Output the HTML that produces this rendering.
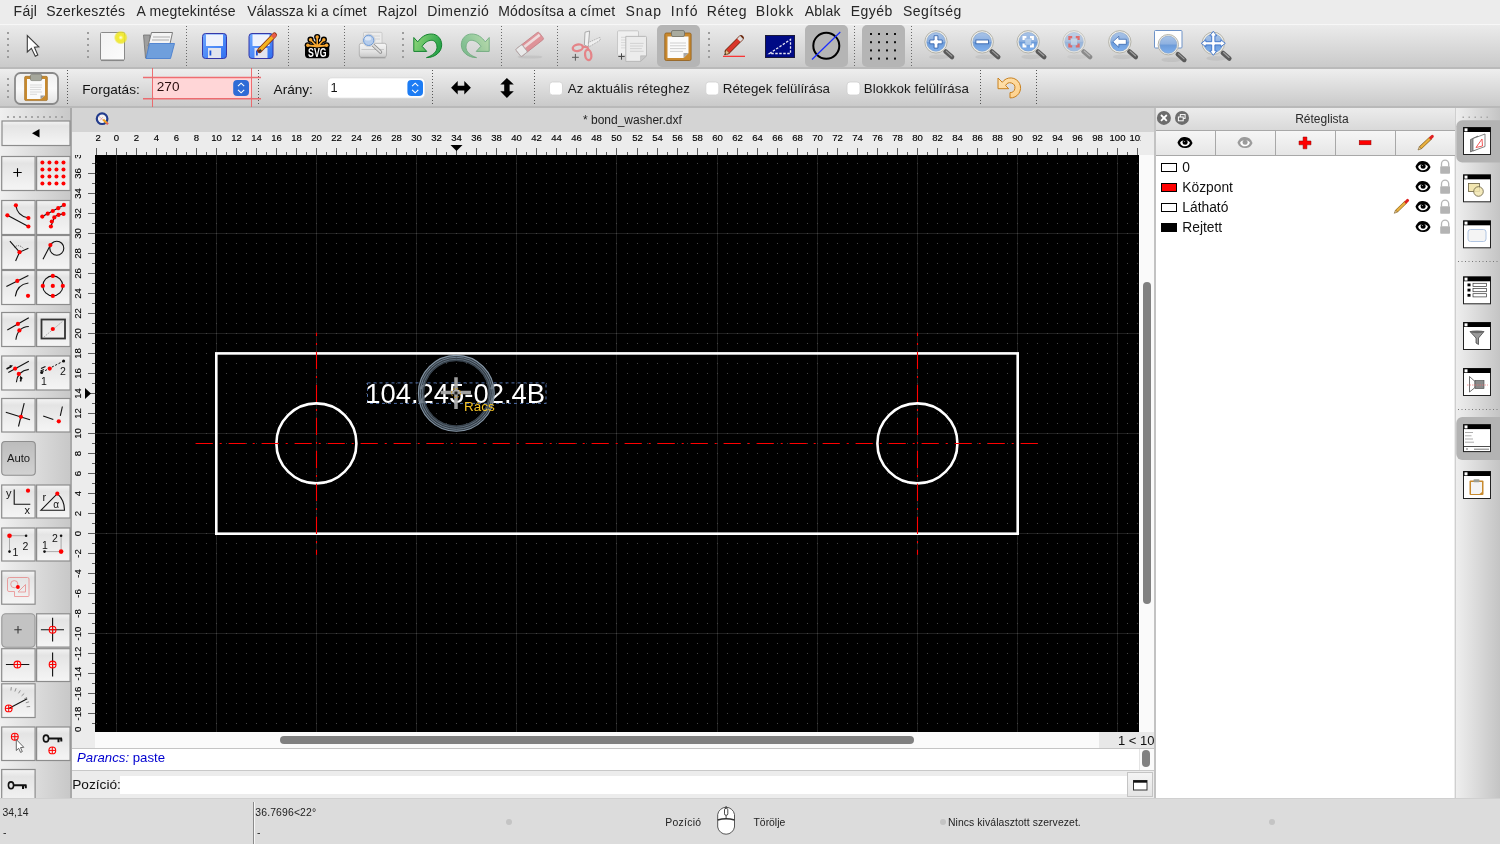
<!DOCTYPE html><html><head><meta charset="utf-8"><style>
*{margin:0;padding:0;box-sizing:border-box}
html,body{width:1500px;height:844px;overflow:hidden;background:#ececec;font-family:"Liberation Sans",sans-serif;color:#1d1d1d}
.a{position:absolute}
.t{position:absolute;white-space:nowrap;line-height:1}
svg{position:absolute;overflow:visible}
</style></head><body><div id="root" style="position:absolute;left:0;top:0;width:1500px;height:844px;overflow:hidden;will-change:transform">
<div class="a" style="left:0;top:0;width:1500px;height:24px;background:#ececec"></div>
<div class="t" style="left:13.6px;top:4px;font-size:14px;color:#262626;letter-spacing:0.267px">Fájl</div>
<div class="t" style="left:46.2px;top:4px;font-size:14px;color:#262626;letter-spacing:0.250px">Szerkesztés</div>
<div class="t" style="left:136.6px;top:4px;font-size:14px;color:#262626;letter-spacing:0.254px">A megtekintése</div>
<div class="t" style="left:247.2px;top:4px;font-size:14px;color:#262626;letter-spacing:-0.067px">Válassza ki a címet</div>
<div class="t" style="left:377.6px;top:4px;font-size:14px;color:#262626;letter-spacing:0.100px">Rajzol</div>
<div class="t" style="left:427.2px;top:4px;font-size:14px;color:#262626;letter-spacing:0.457px">Dimenzió</div>
<div class="t" style="left:498.2px;top:4px;font-size:14px;color:#262626;letter-spacing:0.156px">Módosítsa a címet</div>
<div class="t" style="left:625.6px;top:4px;font-size:14px;color:#262626;letter-spacing:0.900px">Snap</div>
<div class="t" style="left:670.8px;top:4px;font-size:14px;color:#262626;letter-spacing:1.100px">Infó</div>
<div class="t" style="left:706.8px;top:4px;font-size:14px;color:#262626;letter-spacing:0.575px">Réteg</div>
<div class="t" style="left:755.8px;top:4px;font-size:14px;color:#262626;letter-spacing:0.825px">Blokk</div>
<div class="t" style="left:804.8px;top:4px;font-size:14px;color:#262626;letter-spacing:0.150px">Ablak</div>
<div class="t" style="left:850.8px;top:4px;font-size:14px;color:#262626;letter-spacing:0.475px">Egyéb</div>
<div class="t" style="left:903.0px;top:4px;font-size:14px;color:#262626;letter-spacing:0.429px">Segítség</div>
<div class="a" style="left:0;top:24px;width:1500px;height:45px;background:linear-gradient(#f7f7f7 0px,#f7f7f7 1px,#ebebeb 1px,#cacaca 43px,#bababa 43px,#bababa 45px)"></div>
<svg width="1500" height="44" viewBox="0 24 1500 44" style="left:0;top:24px"><defs>
<linearGradient id="glass" x1="0" y1="0" x2="0" y2="1"><stop offset="0" stop-color="#a9c4e8"/><stop offset="0.48" stop-color="#8db0e0"/><stop offset="0.5" stop-color="#6b9ad8"/><stop offset="1" stop-color="#7fb0ee"/></linearGradient>
<linearGradient id="floppy" x1="0" y1="0" x2="1" y2="1"><stop offset="0" stop-color="#6fa8ff"/><stop offset="1" stop-color="#2f6ff0"/></linearGradient>
<radialGradient id="glow"><stop offset="0" stop-color="#fffff0"/><stop offset="0.35" stop-color="#f4ec30"/><stop offset="0.75" stop-color="#ece41c" stop-opacity="0.8"/><stop offset="1" stop-color="#ece41c" stop-opacity="0"/></radialGradient>
<linearGradient id="page" x1="0" y1="0" x2="1" y2="1"><stop offset="0" stop-color="#f2f2f2"/><stop offset="1" stop-color="#fcfcfc"/></linearGradient>
</defs><rect x="7" y="32" width="2" height="2" fill="#9c9c9c"/><rect x="7" y="38" width="2" height="2" fill="#9c9c9c"/><rect x="7" y="44" width="2" height="2" fill="#9c9c9c"/><rect x="7" y="50" width="2" height="2" fill="#9c9c9c"/><rect x="7" y="56" width="2" height="2" fill="#9c9c9c"/><rect x="87" y="32" width="2" height="2" fill="#9c9c9c"/><rect x="87" y="38" width="2" height="2" fill="#9c9c9c"/><rect x="87" y="44" width="2" height="2" fill="#9c9c9c"/><rect x="87" y="50" width="2" height="2" fill="#9c9c9c"/><rect x="87" y="56" width="2" height="2" fill="#9c9c9c"/><rect x="402" y="32" width="2" height="2" fill="#9c9c9c"/><rect x="402" y="38" width="2" height="2" fill="#9c9c9c"/><rect x="402" y="44" width="2" height="2" fill="#9c9c9c"/><rect x="402" y="50" width="2" height="2" fill="#9c9c9c"/><rect x="402" y="56" width="2" height="2" fill="#9c9c9c"/><rect x="708" y="32" width="2" height="2" fill="#9c9c9c"/><rect x="708" y="38" width="2" height="2" fill="#9c9c9c"/><rect x="708" y="44" width="2" height="2" fill="#9c9c9c"/><rect x="708" y="50" width="2" height="2" fill="#9c9c9c"/><rect x="708" y="56" width="2" height="2" fill="#9c9c9c"/><path d="M186.5 26V67" stroke="#6a6a6a" stroke-width="1" stroke-dasharray="1 2"/><path d="M288.5 26V67" stroke="#6a6a6a" stroke-width="1" stroke-dasharray="1 2"/><path d="M344.5 26V67" stroke="#6a6a6a" stroke-width="1" stroke-dasharray="1 2"/><path d="M501.5 26V67" stroke="#6a6a6a" stroke-width="1" stroke-dasharray="1 2"/><path d="M557.5 26V67" stroke="#6a6a6a" stroke-width="1" stroke-dasharray="1 2"/><path d="M854.5 26V67" stroke="#6a6a6a" stroke-width="1" stroke-dasharray="1 2"/><path d="M911.5 26V67" stroke="#6a6a6a" stroke-width="1" stroke-dasharray="1 2"/><path d="M27.3 35.5V52L31.4 48.3L35.3 56.2L37.8 55L34.4 47.2L38.8 46.8Z" fill="#fff" stroke="#3c3c3c" stroke-width="1.1" stroke-linejoin="miter"/><rect x="100.5" y="32.5" width="24" height="27.5" rx="1" fill="url(#page)" stroke="#8a8a8a" stroke-width="1"/><path d="M101 60.5H124" stroke="#7a7a7a" stroke-width="1.2" opacity="0.7"/><circle cx="120.8" cy="37.6" r="7" fill="url(#glow)"/><path d="M143.5 35H150L151 58H145.5Z" fill="#9e9e9e" stroke="#707070" stroke-width="0.8"/><path d="M151.5 32.5H172.5L169.5 46H148Z" fill="#f4f4f4" stroke="#6f6f6f" stroke-width="0.9"/><path d="M153 37H170M152 40H169" stroke="#c4c4c4" stroke-width="1.6"/><path d="M149.5 43.5H174.5L170.5 58.5H146Z" fill="#6f9fdc" stroke="#4a7fcf" stroke-width="0.9"/><rect x="202.5" y="33.5" width="24" height="25" rx="3" fill="url(#floppy)" stroke="#3437a8" stroke-width="1"/><rect x="206" y="34.5" width="17" height="11.5" fill="#eef2fc"/><rect x="208" y="48" width="13" height="10" fill="#e2e4ee"/><rect x="209.5" y="50.5" width="1.8" height="5" fill="#1e54d8"/><rect x="249.0" y="33.5" width="24" height="25" rx="3" fill="url(#floppy)" stroke="#3437a8" stroke-width="1"/><rect x="252.5" y="34.5" width="17" height="11.5" fill="#eef2fc"/><rect x="254.5" y="48" width="13" height="10" fill="#e2e4ee"/><rect x="256.0" y="50.5" width="1.8" height="5" fill="#1e54d8"/><path d="M259.5 50.5L274.5 35" stroke="#8a2f10" stroke-width="5" stroke-linecap="round"/><path d="M259.5 50.5L274.5 35" stroke="#f4b31e" stroke-width="3.3" stroke-linecap="butt"/><path d="M272.3 37.2L275.6 33.9" stroke="#e85b4b" stroke-width="3.6"/><path d="M258 52.5L260 48.8L262.2 51Z" fill="#333"/><path d="M317.2 46.6L307.79 45.28M317.2 46.6L310.53 39.69M317.2 46.6L317.20 37.00M317.2 46.6L323.87 39.69M317.2 46.6L326.61 45.28" stroke="#000" stroke-width="3.6" stroke-linecap="round"/><circle cx="307.79" cy="45.28" r="3.1" fill="#000"/><circle cx="310.53" cy="39.69" r="3.1" fill="#000"/><circle cx="317.20" cy="37.00" r="3.1" fill="#000"/><circle cx="323.87" cy="39.69" r="3.1" fill="#000"/><circle cx="326.61" cy="45.28" r="3.1" fill="#000"/><rect x="305" y="43.6" width="24.2" height="14.6" rx="3.6" fill="#000"/><path d="M317.2 46.6L307.79 45.28M317.2 46.6L310.53 39.69M317.2 46.6L317.20 37.00M317.2 46.6L323.87 39.69M317.2 46.6L326.61 45.28" stroke="#f7a733" stroke-width="1.6"/><circle cx="307.79" cy="45.28" r="1.7" fill="#f7a733"/><circle cx="310.53" cy="39.69" r="1.7" fill="#f7a733"/><circle cx="317.20" cy="37.00" r="1.7" fill="#f7a733"/><circle cx="323.87" cy="39.69" r="1.7" fill="#f7a733"/><circle cx="326.61" cy="45.28" r="1.7" fill="#f7a733"/><path d="M307.3 45.6H327.2" stroke="#f7a733" stroke-width="1.5"/><text x="317.3" y="57" font-family="Liberation Sans" font-weight="bold" font-size="12.4" fill="#fff" text-anchor="middle" textLength="18.4" lengthAdjust="spacingAndGlyphs">SVG</text><defs><linearGradient id="prn" x1="0" y1="0" x2="0" y2="1"><stop offset="0" stop-color="#f6f6f6"/><stop offset="0.6" stop-color="#e2e2e2"/><stop offset="1" stop-color="#c8c8c8"/></linearGradient></defs><rect x="363.5" y="32.3" width="18.5" height="15" rx="1" fill="#ececec" stroke="#c4c4c4" stroke-width="0.8"/><path d="M366 36H380M366 39H380" stroke="#d4d4d4" stroke-width="1.2"/><rect x="359.3" y="43.3" width="27.2" height="14" rx="2.2" fill="url(#prn)" stroke="#a8a8a8" stroke-width="0.8"/><path d="M360.5 57.8H385.5" stroke="#888" stroke-width="1.3" opacity="0.55"/><path d="M361.5 49.5H384" stroke="#c0c0c0" stroke-width="0.8"/><path d="M373 45L380.5 52" stroke="#8a8a8a" stroke-width="3.4" stroke-linecap="round"/><path d="M373 45L380.5 52" stroke="#dcdcdc" stroke-width="1.8" stroke-linecap="round"/><circle cx="368.7" cy="40.3" r="6.3" fill="#f0f0f0" stroke="#c8c8c8" stroke-width="0.7"/><circle cx="368.7" cy="40.3" r="5.2" fill="#b6cdec" stroke="#5f8fd0" stroke-width="0.9"/><ellipse cx="368" cy="38.6" rx="3.2" ry="2" fill="#e6eef9" opacity="0.8"/><defs><linearGradient id="undog" x1="0" y1="0" x2="1" y2="0.3"><stop offset="0" stop-color="#94d87c"/><stop offset="1" stop-color="#2aa44a"/></linearGradient></defs><g transform="" opacity="1"><path d="M413.8 37.5L417.7 41.9C421 37.5 425 34 431.4 34C437.5 34 441.7 39 441.7 44.9C441.7 52 435 57.6 426.5 57.6C433 55.5 437 51.5 437 47.4C437 43 434.5 40.3 431.8 40.3C427.5 40.3 424.5 43 422.1 46.3L426.75 51.4H413.8Z" fill="url(#undog)" stroke="#14822f" stroke-width="1" stroke-linejoin="round"/></g><g transform="translate(903 0) scale(-1 1)" opacity="0.5"><path d="M413.8 37.5L417.7 41.9C421 37.5 425 34 431.4 34C437.5 34 441.7 39 441.7 44.9C441.7 52 435 57.6 426.5 57.6C433 55.5 437 51.5 437 47.4C437 43 434.5 40.3 431.8 40.3C427.5 40.3 424.5 43 422.1 46.3L426.75 51.4H413.8Z" fill="url(#undog)" stroke="#14822f" stroke-width="1" stroke-linejoin="round"/></g><g opacity="0.62"><ellipse cx="530" cy="57" rx="12.5" ry="1.6" fill="#aaa" opacity="0.55"/><g transform="translate(529.8 44.2) rotate(-38)"><rect x="-14.5" y="-4.6" width="29" height="9.2" rx="1.6" fill="#e0666f" stroke="#b24a52" stroke-width="0.8"/><rect x="-6" y="-2.6" width="19.5" height="2.6" fill="#fff" opacity="0.75"/><rect x="-14.5" y="-4.6" width="8" height="9.2" rx="1.2" fill="#f6f6f6" stroke="#8a8a8a" stroke-width="0.8"/></g></g><path d="M585 32.2L589.6 31L588.2 46.9L584.4 45Z" fill="#f2f2f2" stroke="#9a9a9a" stroke-width="0.8"/><path d="M588.3 42.6L599.8 37.4L600.3 40.2L588.8 47Z" fill="#efefef" stroke="#a0a0a0" stroke-width="0.8" stroke-dasharray="1.2 0.8"/><path d="M582.5 46.5L587.5 47.5L588.5 50" stroke="#e48488" stroke-width="2.2" fill="none"/><ellipse cx="577.8" cy="47.8" rx="5.1" ry="3.2" fill="none" stroke="#e48488" stroke-width="2.3" transform="rotate(-12 577.8 47.8)"/><ellipse cx="588.2" cy="54.9" rx="3.1" ry="5.2" fill="none" stroke="#e48488" stroke-width="2.3" transform="rotate(-8 588.2 54.9)"/><path d="M572 57.3h6.8M575.4 53.9v6.8" stroke="#5a5a5a" stroke-width="1"/><rect x="617.5" y="30.8" width="21" height="24.5" rx="1" fill="#f0f0f0" stroke="#c4c4c4" stroke-width="0.9"/><path d="M621 37.3H626M621 40H626M621 42.6H626M621 45.2H626M621 47.9H626" stroke="#d8d8d8" stroke-width="1"/><path d="M625.8 36.4H645.6Q646.5 36.4 646.5 37.3V55.8L640.6 61.4H625.8Z" fill="#ececec" stroke="#b4b4b4" stroke-width="0.9"/><path d="M640.6 61.4L646.5 55.8H640.6Z" fill="#c8c8c8" stroke="#b0b0b0" stroke-width="0.6"/><path d="M630 43.4H643.6M630 46H643M630 48.6H641.8M630 51.3H643.6" stroke="#cfcfcf" stroke-width="0.9"/><path d="M618.3 56.5h6.4M621.5 53.3v6.4" stroke="#4a4a4a" stroke-width="1"/><rect x="657" y="25" width="43" height="42" rx="5" fill="#b5b5b5"/><rect x="664.8" y="33" width="26.3" height="27.5" rx="1.5" fill="#c9892f" stroke="#8f5d1a" stroke-width="0.8"/><path d="M667.5 36.5H688.5V53L683.5 58H667.5Z" fill="#fbfbfb"/><path d="M683.5 58L688.5 53H683.5Z" fill="#a8a8a8"/><path d="M670 43H686M670 45.8H686M670 48.6H686M670 51.4H683" stroke="#c9c9c9" stroke-width="0.9"/><rect x="671.5" y="30.5" width="13" height="6" rx="1.5" fill="#a9ab9f" stroke="#6f7068" stroke-width="0.8"/><path d="M723 56.3H745" stroke="#ff1a1a" stroke-width="1.1"/><path d="M727.5 51.5L741 38" stroke="#6b2a10" stroke-width="5.6" stroke-linecap="round"/><path d="M727.5 51.5L741 38" stroke="#d9362a" stroke-width="4.2"/><path d="M738.8 40.2L741.6 37.4" stroke="#ddd" stroke-width="4.4"/><path d="M724.5 55L726.2 49.8L729.6 53.2Z" fill="#e8c08a" stroke="#6b3a10" stroke-width="0.6"/><path d="M724.5 55L725.2 53L726.4 54.2Z" fill="#222"/><rect x="765.5" y="35.5" width="29" height="22" fill="#000a85" stroke="#1a1a3a" stroke-width="1"/><path d="M769.5 53.5L790.5 39.5V53.5Z" fill="none" stroke="#e8e8f4" stroke-width="1.3" stroke-dasharray="2.5 1.5"/><rect x="805" y="25" width="43" height="42" rx="5" fill="#b5b5b5"/><circle cx="826.3" cy="45.8" r="13" fill="none" stroke="#000" stroke-width="2"/><path d="M812 59.5L840.3 32" stroke="#1a2cff" stroke-width="1.2"/><rect x="862" y="25" width="43" height="42" rx="5" fill="#b5b5b5"/><rect x="870" y="33.0" width="2" height="2" fill="#111"/><rect x="878" y="33.0" width="2" height="2" fill="#111"/><rect x="886" y="33.0" width="2" height="2" fill="#111"/><rect x="894" y="33.0" width="2" height="2" fill="#111"/><rect x="870" y="41.2" width="2" height="2" fill="#111"/><rect x="878" y="41.2" width="2" height="2" fill="#111"/><rect x="886" y="41.2" width="2" height="2" fill="#111"/><rect x="894" y="41.2" width="2" height="2" fill="#111"/><rect x="870" y="49.4" width="2" height="2" fill="#111"/><rect x="878" y="49.4" width="2" height="2" fill="#111"/><rect x="886" y="49.4" width="2" height="2" fill="#111"/><rect x="894" y="49.4" width="2" height="2" fill="#111"/><rect x="870" y="57.6" width="2" height="2" fill="#111"/><rect x="878" y="57.6" width="2" height="2" fill="#111"/><rect x="886" y="57.6" width="2" height="2" fill="#111"/><rect x="894" y="57.6" width="2" height="2" fill="#111"/><g><ellipse cx="939" cy="56.9" rx="10" ry="2.4" fill="#000" opacity="0.06"/><path d="M945.6 51.5L952 57.099999999999994" stroke="#5a5a5a" stroke-width="4.6" stroke-linecap="round"/><path d="M946.2 51.099999999999994L951.8 56.099999999999994" stroke="#a0a0a0" stroke-width="1.1" stroke-linecap="round"/><circle cx="936" cy="41.9" r="11.2" fill="#efeee8" stroke="#b4b3aa" stroke-width="1"/><circle cx="936" cy="41.9" r="9.3" fill="url(#glass)" stroke="#7d9ec8" stroke-width="0.6"/><path d="M929.8 40.0H934.1V35.699999999999996H937.9V40.0H942.2V43.8H937.9V48.1H934.1V43.8H929.8Z" fill="#fff" stroke="#2a5ca8" stroke-width="0.8"/></g><g><ellipse cx="985.2" cy="56.9" rx="10" ry="2.4" fill="#000" opacity="0.06"/><path d="M991.8000000000001 51.5L998.2 57.099999999999994" stroke="#5a5a5a" stroke-width="4.6" stroke-linecap="round"/><path d="M992.4000000000001 51.099999999999994L998.0 56.099999999999994" stroke="#a0a0a0" stroke-width="1.1" stroke-linecap="round"/><circle cx="982.2" cy="41.9" r="11.2" fill="#efeee8" stroke="#b4b3aa" stroke-width="1"/><circle cx="982.2" cy="41.9" r="9.3" fill="url(#glass)" stroke="#7d9ec8" stroke-width="0.6"/><rect x="975.9000000000001" y="40.0" width="12.6" height="3.8" fill="#fff" stroke="#2a5ca8" stroke-width="0.8"/></g><g><ellipse cx="1031.2" cy="56.8" rx="10" ry="2.4" fill="#000" opacity="0.06"/><path d="M1037.8 51.4L1044.2 57.0" stroke="#5a5a5a" stroke-width="4.6" stroke-linecap="round"/><path d="M1038.4 51.0L1044.0 56.0" stroke="#a0a0a0" stroke-width="1.1" stroke-linecap="round"/><circle cx="1028.2" cy="41.8" r="11.2" fill="#efeee8" stroke="#b4b3aa" stroke-width="1"/><circle cx="1028.2" cy="41.8" r="9.3" fill="url(#glass)" stroke="#7d9ec8" stroke-width="0.6"/><rect x="1025.2" y="38.8" width="6" height="6" fill="#bcd3ee" opacity="0.8"/><path d="M1023.6 40.0V37.199999999999996H1026.4M1023.6 43.599999999999994V46.4H1026.4M1032.8 40.0V37.199999999999996H1030.0M1032.8 43.599999999999994V46.4H1030.0" fill="none" stroke="#fff" stroke-width="2.2"/></g><g opacity="0.6"><g><ellipse cx="1077" cy="56.8" rx="10" ry="2.4" fill="#000" opacity="0.06"/><path d="M1083.6 51.4L1090 57.0" stroke="#5a5a5a" stroke-width="4.6" stroke-linecap="round"/><path d="M1084.2 51.0L1089.8 56.0" stroke="#a0a0a0" stroke-width="1.1" stroke-linecap="round"/><circle cx="1074" cy="41.8" r="11.2" fill="#efeee8" stroke="#b4b3aa" stroke-width="1"/><circle cx="1074" cy="41.8" r="9.3" fill="url(#glass)" stroke="#7d9ec8" stroke-width="0.6"/><rect x="1071" y="38.8" width="6" height="6" fill="#bcd3ee" opacity="0.8"/><path d="M1069.4 40.0V37.199999999999996H1072.2M1069.4 43.599999999999994V46.4H1072.2M1078.6 40.0V37.199999999999996H1075.8M1078.6 43.599999999999994V46.4H1075.8" fill="none" stroke="#e02020" stroke-width="2.2"/></g></g><g><ellipse cx="1122.8" cy="56.8" rx="10" ry="2.4" fill="#000" opacity="0.06"/><path d="M1129.3999999999999 51.4L1135.8 57.0" stroke="#5a5a5a" stroke-width="4.6" stroke-linecap="round"/><path d="M1130.0 51.0L1135.6 56.0" stroke="#a0a0a0" stroke-width="1.1" stroke-linecap="round"/><circle cx="1119.8" cy="41.8" r="11.2" fill="#efeee8" stroke="#b4b3aa" stroke-width="1"/><circle cx="1119.8" cy="41.8" r="9.3" fill="url(#glass)" stroke="#7d9ec8" stroke-width="0.6"/><path d="M1112.8 41.8L1118.8 36.3V39.3H1126.3V44.3H1118.8V47.3Z" fill="#fff" stroke="#2a5ca8" stroke-width="0.7"/></g><rect x="1154.5" y="30.5" width="27.5" height="17.5" rx="1" fill="#fff" stroke="#6e93c8" stroke-width="1"/><g><ellipse cx="1171.3" cy="59.7" rx="10" ry="2.4" fill="#000" opacity="0.06"/><path d="M1177.8999999999999 54.300000000000004L1184.3 59.900000000000006" stroke="#5a5a5a" stroke-width="4.6" stroke-linecap="round"/><path d="M1178.5 53.900000000000006L1184.1 58.900000000000006" stroke="#a0a0a0" stroke-width="1.1" stroke-linecap="round"/><circle cx="1168.3" cy="44.7" r="10.2" fill="#efeee8" stroke="#b4b3aa" stroke-width="1"/><circle cx="1168.3" cy="44.7" r="8.6" fill="url(#glass)" stroke="#7d9ec8" stroke-width="0.6"/></g><g><ellipse cx="1216.3" cy="58.3" rx="10" ry="2.4" fill="#000" opacity="0.06"/><path d="M1222.8999999999999 52.9L1229.3 58.5" stroke="#5a5a5a" stroke-width="4.6" stroke-linecap="round"/><path d="M1223.5 52.5L1229.1 57.5" stroke="#a0a0a0" stroke-width="1.1" stroke-linecap="round"/><circle cx="1213.3" cy="43.3" r="11.2" fill="#efeee8" stroke="#b4b3aa" stroke-width="1"/><circle cx="1213.3" cy="43.3" r="9.3" fill="url(#glass)" stroke="#7d9ec8" stroke-width="0.6"/><path d="M1213.3 31.299999999999997L1216.8 35.8H1214.8999999999999V41.699999999999996H1220.8V39.8L1225.3 43.3L1220.8 46.8V44.9H1214.8999999999999V50.8H1216.8L1213.3 55.3L1209.8 50.8H1211.7V44.9H1205.8V46.8L1201.3 43.3L1205.8 39.8V41.699999999999996H1211.7V35.8H1209.8Z" fill="#fff" stroke="#3a70c8" stroke-width="0.9"/></g></svg>
<div class="a" style="left:0;top:69px;width:1500px;height:39px;background:linear-gradient(#eeeeee 0px,#cacaca 37px,#b9b9b9 37px,#b9b9b9 39px)"></div>
<svg width="1500" height="39" viewBox="0 68 1500 39" style="left:0;top:68px"><defs><linearGradient id="pbtn" x1="0" y1="0" x2="0" y2="1"><stop offset="0" stop-color="#f0f0f0"/><stop offset="0.5" stop-color="#fafafa"/><stop offset="1" stop-color="#e2e2e2"/></linearGradient>
<linearGradient id="orng" x1="0" y1="0" x2="1" y2="1"><stop offset="0" stop-color="#ffe2ae"/><stop offset="1" stop-color="#fdd08a"/></linearGradient></defs><rect x="7" y="78" width="2" height="2" fill="#9c9c9c"/><rect x="7" y="84" width="2" height="2" fill="#9c9c9c"/><rect x="7" y="90" width="2" height="2" fill="#9c9c9c"/><rect x="7" y="96" width="2" height="2" fill="#9c9c9c"/><path d="M67.5 70V106" stroke="#555" stroke-width="1" stroke-dasharray="1 2"/><path d="M258.5 70V106" stroke="#555" stroke-width="1" stroke-dasharray="1 2"/><path d="M432.5 70V106" stroke="#555" stroke-width="1" stroke-dasharray="1 2"/><path d="M534.5 70V106" stroke="#555" stroke-width="1" stroke-dasharray="1 2"/><path d="M980.5 70V106" stroke="#555" stroke-width="1" stroke-dasharray="1 2"/><path d="M1036.5 70V106" stroke="#555" stroke-width="1" stroke-dasharray="1 2"/><rect x="15" y="73" width="43" height="31" rx="5.5" fill="url(#pbtn)" stroke="#8a8a8a" stroke-width="1.8"/><rect x="24.6" y="76.3" width="22.8" height="24.3" rx="1.3" fill="#c88a2e" stroke="#9a6418" stroke-width="0.6"/><path d="M27 79H45V95.5L40.5 99H27Z" fill="#fafafa"/><path d="M40.5 99L45 95.5H40.5Z" fill="#9a9a9a"/><path d="M30 85H42M30 87.3H42M30 89.6H41M30 92H42M30 94.3H37" stroke="#cfcfcf" stroke-width="0.8"/><rect x="30.3" y="74.3" width="11.5" height="6.3" rx="1.6" fill="#a5a79c" stroke="#6e7066" stroke-width="0.6"/><text x="82.3" y="93.6" font-family="Liberation Sans" font-size="13.6" fill="#111">Forgatás:</text><rect x="152.5" y="77.5" width="99" height="21" rx="4.5" fill="#ffd6d7"/><g stroke="#ef5a5e" stroke-width="1" opacity="0.85"><path d="M152.5 68V107M251.5 68V107"/><path d="M143 77.5H261M143 98.8H261" stroke-width="1.4"/></g><text x="156.8" y="91.4" font-family="Liberation Sans" font-size="13.6" fill="#2a0e0e">270</text><rect x="233.2" y="80" width="15.8" height="16" rx="4" fill="#2f6bd6"/><path d="M238 86.2L241.1 83.2L244.2 86.2M238 89.8L241.1 92.8L244.2 89.8" fill="none" stroke="#fff" stroke-width="1.1"/><text x="273.6" y="93.6" font-family="Liberation Sans" font-size="13.6" fill="#111">Arány:</text><rect x="327.5" y="77.8" width="97.5" height="20.4" rx="4.5" fill="#fff" stroke="#d6d6d6" stroke-width="0.8"/><text x="330.5" y="91.5" font-family="Liberation Sans" font-size="12.8" fill="#111">1</text><rect x="407.4" y="80" width="15.6" height="16" rx="4" fill="#1c7cf4"/><path d="M412.1 86.2L415.2 83.2L418.3 86.2M412.1 89.8L415.2 92.8L418.3 89.8" fill="none" stroke="#fff" stroke-width="1.1"/><path d="M451.1 87.8L457.7 81.1V85.7H464.3V81.1L470.9 87.8L464.3 94.6V90.4H457.7V94.6Z" fill="#000"/><path d="M506.9 78.1L513.8 84.4H509.6V91.3H513.8L506.9 97.9L500.3 91.3H504.2V84.4H500.3Z" fill="#000"/><rect x="549.5" y="82" width="13" height="13" rx="3" fill="#fff" stroke="#cfcfcf" stroke-width="0.8"/><text x="567.8" y="93.2" font-family="Liberation Sans" font-size="13.3" fill="#1a1a1a" letter-spacing="0.12">Az aktuális réteghez</text><rect x="705.8" y="82" width="13" height="13" rx="3" fill="#fff" stroke="#cfcfcf" stroke-width="0.8"/><text x="722.8" y="93.2" font-family="Liberation Sans" font-size="13.3" fill="#1a1a1a" letter-spacing="0">Rétegek felülírása</text><rect x="847.0" y="82" width="13" height="13" rx="3" fill="#fff" stroke="#cfcfcf" stroke-width="0.8"/><text x="863.8" y="93.2" font-family="Liberation Sans" font-size="13.3" fill="#1a1a1a" letter-spacing="0.05">Blokkok felülírása</text><path d="M998 78L1002.3 82.3A10 10 0 1 1 1010 97.9V92.6A4.9 4.9 0 1 0 1005.6 85.6L1008.7 88.7H998Z" fill="url(#orng)" stroke="#c8801e" stroke-width="1"/></svg>
<div class="a" style="left:0;top:108px;width:72px;height:690px;background:linear-gradient(90deg,#f0f0f0,#c8c8c8 70px,#a9a9a9 70px,#a9a9a9)"></div>
<svg width="72" height="690" viewBox="0 108 72 690" style="left:0;top:108px;overflow:hidden"><defs><linearGradient id="btng" x1="0" y1="0" x2="0" y2="1"><stop offset="0" stop-color="#f4f4f4"/><stop offset="0.2" stop-color="#e4e4e4"/><stop offset="1" stop-color="#f5f5f5"/></linearGradient></defs><rect x="7" y="116" width="2" height="2" fill="#a6a6a6"/><rect x="13" y="116" width="2" height="2" fill="#a6a6a6"/><rect x="19" y="116" width="2" height="2" fill="#a6a6a6"/><rect x="25" y="116" width="2" height="2" fill="#a6a6a6"/><rect x="31" y="116" width="2" height="2" fill="#a6a6a6"/><rect x="37" y="116" width="2" height="2" fill="#a6a6a6"/><rect x="43" y="116" width="2" height="2" fill="#a6a6a6"/><rect x="49" y="116" width="2" height="2" fill="#a6a6a6"/><rect x="55" y="116" width="2" height="2" fill="#a6a6a6"/><rect x="61" y="116" width="2" height="2" fill="#a6a6a6"/><rect x="2.0" y="121.0" width="68.0" height="24.5" fill="url(#btng)" stroke="#8c8c8c" stroke-width="1.2"/><path d="M32 133.2L39.5 129V137.4Z" fill="#000"/><rect x="1.7" y="156.5" width="33.4" height="34" fill="url(#btng)" stroke="#8c8c8c" stroke-width="1.2"/><rect x="36.6" y="156.5" width="33.49999999999999" height="34" fill="url(#btng)" stroke="#8c8c8c" stroke-width="1.2"/><path d="M13.3 172.5H21.7M17.5 168.3V176.7" stroke="#000" stroke-width="1.1"/><circle cx="42.4" cy="162.4" r="2.0" fill="#ff0000"/><circle cx="49.43" cy="162.4" r="2.0" fill="#ff0000"/><circle cx="56.46" cy="162.4" r="2.0" fill="#ff0000"/><circle cx="63.489999999999995" cy="162.4" r="2.0" fill="#ff0000"/><circle cx="42.4" cy="169.43" r="2.0" fill="#ff0000"/><circle cx="49.43" cy="169.43" r="2.0" fill="#ff0000"/><circle cx="56.46" cy="169.43" r="2.0" fill="#ff0000"/><circle cx="63.489999999999995" cy="169.43" r="2.0" fill="#ff0000"/><circle cx="42.4" cy="176.46" r="2.0" fill="#ff0000"/><circle cx="49.43" cy="176.46" r="2.0" fill="#ff0000"/><circle cx="56.46" cy="176.46" r="2.0" fill="#ff0000"/><circle cx="63.489999999999995" cy="176.46" r="2.0" fill="#ff0000"/><circle cx="42.4" cy="183.49" r="2.0" fill="#ff0000"/><circle cx="49.43" cy="183.49" r="2.0" fill="#ff0000"/><circle cx="56.46" cy="183.49" r="2.0" fill="#ff0000"/><circle cx="63.489999999999995" cy="183.49" r="2.0" fill="#ff0000"/><rect x="1.7" y="200.5" width="33.4" height="34" fill="url(#btng)" stroke="#8c8c8c" stroke-width="1.2"/><rect x="36.6" y="200.5" width="33.49999999999999" height="34" fill="url(#btng)" stroke="#8c8c8c" stroke-width="1.2"/><rect x="1.7" y="235.5" width="33.4" height="34" fill="url(#btng)" stroke="#8c8c8c" stroke-width="1.2"/><rect x="36.6" y="235.5" width="33.49999999999999" height="34" fill="url(#btng)" stroke="#8c8c8c" stroke-width="1.2"/><rect x="1.7" y="270.5" width="33.4" height="34" fill="url(#btng)" stroke="#8c8c8c" stroke-width="1.2"/><rect x="36.6" y="270.5" width="33.49999999999999" height="34" fill="url(#btng)" stroke="#8c8c8c" stroke-width="1.2"/><g stroke="#111" stroke-width="1.1" fill="none"><path d="M15.9 205.3Q17 216 28.4 218"/><path d="M7.4 215.3L28.4 226.5"/><path d="M42.3 216.6L63.9 204.9"/><path d="M50.9 226.5L54.3 217.4Q57 214.5 63.5 213.9"/><path d="M9.9 241.1L19.5 252.2L28.4 248.2M19.5 252.2L15.6 261"/><path d="M14.5 247.3Q18.5 243.5 23.5 248.5" stroke-width="0.6" stroke-dasharray="1 1"/><circle cx="56.8" cy="248.2" r="7"/><path d="M43 259.3L50.4 245.1"/><path d="M6.4 286.6L28.4 275.5"/><path d="M15.3 296.3Q17 284.5 28.4 283"/><circle cx="52.8" cy="285.9" r="10"/></g><circle cx="15.9" cy="205.3" r="2.1" fill="#ff0000"/><circle cx="28.4" cy="218" r="2.1" fill="#ff0000"/><circle cx="7.4" cy="215.3" r="2.1" fill="#ff0000"/><circle cx="28.4" cy="226.5" r="2.1" fill="#ff0000"/><circle cx="42.3" cy="216.6" r="2.1" fill="#ff0000"/><circle cx="47.7" cy="213.7" r="2.1" fill="#ff0000"/><circle cx="52.8" cy="211" r="2.1" fill="#ff0000"/><circle cx="58.2" cy="208.2" r="2.1" fill="#ff0000"/><circle cx="63.9" cy="204.9" r="2.1" fill="#ff0000"/><circle cx="50.9" cy="226.5" r="2.1" fill="#ff0000"/><circle cx="51.8" cy="221.5" r="2.1" fill="#ff0000"/><circle cx="54.3" cy="217.4" r="2.1" fill="#ff0000"/><circle cx="58.5" cy="214.9" r="2.1" fill="#ff0000"/><circle cx="63.5" cy="213.9" r="2.1" fill="#ff0000"/><circle cx="19.5" cy="252.2" r="2.1" fill="#ff0000"/><circle cx="50.4" cy="245.1" r="2.1" fill="#ff0000"/><circle cx="17.3" cy="280.9" r="2.1" fill="#ff0000"/><circle cx="28" cy="295.8" r="2.1" fill="#ff0000"/><circle cx="52.8" cy="275.9" r="2.1" fill="#ff0000"/><circle cx="52.8" cy="295.9" r="2.1" fill="#ff0000"/><circle cx="42.8" cy="285.9" r="2.1" fill="#ff0000"/><circle cx="62.8" cy="285.9" r="2.1" fill="#ff0000"/><circle cx="52.8" cy="285.9" r="2.1" fill="#ff0000"/><rect x="1.7" y="312.5" width="33.4" height="34" fill="url(#btng)" stroke="#8c8c8c" stroke-width="1.2"/><rect x="36.6" y="312.5" width="33.49999999999999" height="34" fill="url(#btng)" stroke="#8c8c8c" stroke-width="1.2"/><g stroke="#111" stroke-width="1.1" fill="none"><path d="M7.3 330L28.8 317.8"/><path d="M15.9 339.8Q17.5 327 28.8 326.5"/></g><rect x="41.5" y="319.5" width="23.5" height="19" fill="none" stroke="#333" stroke-width="1.8"/><path d="M44 337L63 321" stroke="#888" stroke-width="0.7" stroke-dasharray="1.5 1"/><circle cx="17.9" cy="323.9" r="2.1" fill="#ff0000"/><circle cx="19.4" cy="330.4" r="2.1" fill="#ff0000"/><circle cx="52.8" cy="329" r="2.1" fill="#ff0000"/><rect x="1.7" y="356.0" width="33.4" height="34.0" fill="url(#btng)" stroke="#8c8c8c" stroke-width="1.2"/><rect x="36.6" y="356.0" width="33.49999999999999" height="34.0" fill="url(#btng)" stroke="#8c8c8c" stroke-width="1.2"/><g stroke="#111" stroke-width="1.1" fill="none"><path d="M8.3 372.4L28.8 361.3"/><path d="M16.4 382.2Q17.5 371 28.8 369.4"/><path d="M6.5 369L11 366.5" stroke-width="1.6"/><path d="M20.5 381.5L21.5 377" stroke-width="1.6"/></g><path d="M9.5 365L13 365.5L10.5 368Z" fill="#111"/><path d="M20 375.5L22.8 378.5L19.8 379Z" fill="#111"/><circle cx="15.2" cy="368.6" r="2.1" fill="#ff0000"/><circle cx="18.8" cy="373.9" r="2.1" fill="#ff0000"/><path d="M41.7 372.4L63.6 361" stroke="#111" stroke-width="1" stroke-dasharray="2.2 1.6"/><circle cx="41.7" cy="372.4" r="1.5" fill="#111"/><circle cx="63.6" cy="361" r="1.5" fill="#111"/><path d="M41 368.5L45.5 366.5M40.5 371L44 369.5" stroke="#111" stroke-width="1.3"/><circle cx="49.7" cy="368.6" r="2.1" fill="#ff0000"/><text x="41" y="384.6" font-family="Liberation Sans" font-size="10.5" fill="#111">1</text><text x="60" y="374.8" font-family="Liberation Sans" font-size="10.5" fill="#111">2</text><rect x="1.7" y="398.5" width="33.4" height="33.5" fill="url(#btng)" stroke="#8c8c8c" stroke-width="1.2"/><rect x="36.6" y="398.5" width="33.49999999999999" height="33.5" fill="url(#btng)" stroke="#8c8c8c" stroke-width="1.2"/><g stroke="#111" stroke-width="1.1" fill="none"><path d="M5.8 412.2L30 419.8"/><path d="M24.2 403.2L18.5 426.5"/><path d="M43.2 415.9L53.3 419.4"/><path d="M62.4 406.5L60.3 415.9"/></g><circle cx="20.9" cy="416.8" r="2.1" fill="#ff0000"/><circle cx="58.8" cy="421.3" r="2.1" fill="#ff0000"/><rect x="1.7" y="441.5" width="33.6" height="33.8" rx="3.5" fill="url(#autog)" stroke="#8e8e8e" stroke-width="1.1"/><defs><linearGradient id="autog" x1="0" y1="0" x2="0" y2="1"><stop offset="0" stop-color="#bcbcbc"/><stop offset="1" stop-color="#d2d2d2"/></linearGradient></defs><text x="18.5" y="462" font-family="Liberation Sans" font-size="11.3" fill="#1a1a1a" text-anchor="middle">Auto</text><rect x="1.7" y="485.0" width="33.4" height="33.0" fill="url(#btng)" stroke="#8c8c8c" stroke-width="1.2"/><rect x="36.6" y="485.0" width="33.49999999999999" height="33.0" fill="url(#btng)" stroke="#8c8c8c" stroke-width="1.2"/><path d="M14.2 489.5V504.2H30.3" fill="none" stroke="#111" stroke-width="1.1"/><text x="6" y="497" font-family="Liberation Sans" font-size="11" fill="#111">y</text><text x="24.5" y="513.5" font-family="Liberation Sans" font-size="11" fill="#111">x</text><circle cx="28" cy="490.7" r="2.1" fill="#ff0000"/><path d="M40.8 510.3L57.3 493.7Q64.5 500 64.5 510.3Z" fill="none" stroke="#111" stroke-width="1.1"/><text x="42.5" y="501" font-family="Liberation Sans" font-size="11" fill="#111">r</text><text x="53.3" y="508" font-family="Liberation Sans" font-size="10" fill="#111">α</text><circle cx="57.3" cy="493.7" r="2.1" fill="#ff0000"/><rect x="1.7" y="528.0" width="33.4" height="33.0" fill="url(#btng)" stroke="#8c8c8c" stroke-width="1.2"/><rect x="36.6" y="528.0" width="33.49999999999999" height="33.0" fill="url(#btng)" stroke="#8c8c8c" stroke-width="1.2"/><path d="M9.5 551.6V535.7H26.1" fill="none" stroke="#999" stroke-width="0.8"/><circle cx="9.5" cy="535.7" r="2.3" fill="#ff0000"/><circle cx="26.1" cy="535.7" r="1.3" fill="#111"/><circle cx="9.5" cy="551.6" r="1.3" fill="#111"/><text x="22.5" y="550" font-family="Liberation Sans" font-size="10.5" fill="#111">2</text><text x="12.5" y="556" font-family="Liberation Sans" font-size="10.5" fill="#111">1</text><path d="M44.5 551.6H61.1V535.7" fill="none" stroke="#999" stroke-width="0.8"/><circle cx="61.1" cy="551.6" r="2.3" fill="#ff0000"/><circle cx="61.1" cy="535.7" r="1.3" fill="#111"/><circle cx="44.5" cy="551.6" r="1.3" fill="#111"/><text x="42" y="549" font-family="Liberation Sans" font-size="10.5" fill="#111">1</text><text x="52" y="541.5" font-family="Liberation Sans" font-size="10.5" fill="#111">2</text><rect x="1.7" y="571.0" width="33.4" height="33.200000000000045" fill="url(#btng)" stroke="#8c8c8c" stroke-width="1.2"/><g opacity="0.45" fill="none" stroke="#e83030" stroke-width="0.9"><path d="M9.5 577.5H27.5Q29 577.5 29 579V595.5Q29 596.5 28 596.5H14.5V591.5H9Q7.5 591.5 7.5 590V579.5Q7.5 577.5 9.5 577.5Z"/><circle cx="14.3" cy="584.2" r="3.6"/><path d="M25.5 584.5V592H18Z"/></g><circle cx="17.9" cy="587" r="1.9" fill="#ff0000"/><rect x="1.8" y="613.7" width="33.2" height="33.6" rx="4" fill="#c3c3c3" stroke="#979797" stroke-width="1.1"/><path d="M14.3 629.8H21.7M18 626.1V633.5" stroke="#3a3a3a" stroke-width="1.1"/><rect x="36.6" y="613.8" width="33.49999999999999" height="33.30000000000007" fill="url(#btng)" stroke="#8c8c8c" stroke-width="1.2"/><path d="M40.9 629.7H64M52.6 617.8V641.4" stroke="#111" stroke-width="1.1"/><circle cx="52.6" cy="629.7" r="3.4" fill="none" stroke="#ff0000" stroke-width="1.1"/><path d="M49.2 629.7H56.0M52.6 626.3000000000001V633.1" stroke="#ff0000" stroke-width="1"/><rect x="1.7" y="648.7" width="33.4" height="32.799999999999955" fill="url(#btng)" stroke="#8c8c8c" stroke-width="1.2"/><rect x="36.6" y="648.7" width="33.49999999999999" height="32.799999999999955" fill="url(#btng)" stroke="#8c8c8c" stroke-width="1.2"/><path d="M5.9 664.5H29.3M52.6 652.5V676.4" stroke="#111" stroke-width="1.1"/><circle cx="17.4" cy="664.5" r="3.4" fill="none" stroke="#ff0000" stroke-width="1.1"/><path d="M13.999999999999998 664.5H20.799999999999997M17.4 661.1V667.9" stroke="#ff0000" stroke-width="1"/><circle cx="52.6" cy="664.5" r="3.4" fill="none" stroke="#ff0000" stroke-width="1.1"/><path d="M49.2 664.5H56.0M52.6 661.1V667.9" stroke="#ff0000" stroke-width="1"/><rect x="1.7" y="683.8" width="33.4" height="33.700000000000045" fill="url(#btng)" stroke="#8c8c8c" stroke-width="1.2"/><path d="M8.7 708.4L27.2 698.8" stroke="#111" stroke-width="1.1"/><g stroke="#888" stroke-width="0.9"><path d="M26.6 706.8L30.1 706.5"/><path d="M25.8 702.8L29.1 701.8"/><path d="M24.1 699.1L27.1 697.3"/><path d="M21.6 695.9L24.2 693.5"/><path d="M18.5 693.3L20.4 690.4"/><path d="M14.9 691.5L16.1 688.2"/><path d="M10.9 690.5L11.3 687.1"/></g><circle cx="8.7" cy="708.4" r="3.4" fill="none" stroke="#ff0000" stroke-width="1.1"/><path d="M5.299999999999999 708.4H12.1M8.7 705.0V711.8" stroke="#ff0000" stroke-width="1"/><rect x="1.7" y="727.0" width="33.4" height="33.5" fill="url(#btng)" stroke="#8c8c8c" stroke-width="1.2"/><rect x="36.6" y="727.0" width="33.49999999999999" height="33.5" fill="url(#btng)" stroke="#8c8c8c" stroke-width="1.2"/><circle cx="14.8" cy="736.7" r="3.4" fill="none" stroke="#ff0000" stroke-width="1.1"/><path d="M11.4 736.7H18.2M14.8 733.3000000000001V740.1" stroke="#ff0000" stroke-width="1"/><path d="M16.3 739.5V750.5L18.7 748.3L20.6 752.4L22.3 751.6L20.5 747.6L23.8 747.3Z" fill="#fff" stroke="#444" stroke-width="0.8"/><g fill="none" stroke="#111"><ellipse cx="46" cy="738.5" rx="2.6" ry="3.4" stroke-width="1.6"/><path d="M48.6 738.5H62M58.5 738.5V742.3M61.3 738.5V741.5" stroke-width="2"/></g><circle cx="52.3" cy="750.4" r="3.4" fill="none" stroke="#ff0000" stroke-width="1.1"/><path d="M48.9 750.4H55.699999999999996M52.3 747.0V753.8" stroke="#ff0000" stroke-width="1"/><rect x="1.7" y="769.5" width="33.4" height="36" fill="url(#btng)" stroke="#8c8c8c" stroke-width="1.2"/><g fill="none" stroke="#111"><ellipse cx="11" cy="785.3" rx="2.6" ry="3.4" stroke-width="1.6"/><path d="M13.6 785.3H26.5M23 785.3V789.1M25.8 785.3V788.3" stroke-width="2"/></g></svg>
<div class="a" style="left:72px;top:108px;width:1084px;height:24px;background:#d4d4d4"></div>
<div class="t" style="left:583px;top:114px;font-size:12px;color:#222">* bond_washer.dxf</div>
<svg width="20" height="20" viewBox="92 109 20 20" style="left:92px;top:109px"><circle cx="102.1" cy="118.7" r="5.3" fill="#f4f4f4" stroke="#223b8c" stroke-width="2.2"/><path d="M99 116.5L104 121M100 120.5L103 117" stroke="#d88" stroke-width="0.6"/><path d="M103.2 119.5L107.2 123.5" stroke="#f0a020" stroke-width="2.2"/><path d="M106.6 122.9L108 124.3" stroke="#e06060" stroke-width="2.2"/></svg>
<div class="a" style="left:72px;top:132px;width:1082px;height:23px;background:#ececec"></div>
<div class="a" style="left:72px;top:155px;width:23px;height:593px;background:#ececec"></div>
<div class="a" style="left:95px;top:155px;width:1044px;height:577px;background:#000"></div>
<svg width="1044" height="577" viewBox="95 155 1044 577" style="left:95px;top:155px;overflow:hidden"><path d="M116.5 155V732M216.5 155V732M316.5 155V732M416.5 155V732M516.5 155V732M616.5 155V732M717.5 155V732M817.5 155V732M917.5 155V732M1017.5 155V732M1117.5 155V732M95 633.5H1139M95 533.5H1139M95 433.5H1139M95 333.5H1139M95 233.5H1139" stroke="#1f1f1f" stroke-width="1" fill="none"/><path d="M96 723h1v1h-1zM96 713h1v1h-1zM96 703h1v1h-1zM96 693h1v1h-1zM96 683h1v1h-1zM96 673h1v1h-1zM96 663h1v1h-1zM96 653h1v1h-1zM96 643h1v1h-1zM96 633h1v1h-1zM96 623h1v1h-1zM96 613h1v1h-1zM96 603h1v1h-1zM96 593h1v1h-1zM96 583h1v1h-1zM96 573h1v1h-1zM96 563h1v1h-1zM96 553h1v1h-1zM96 543h1v1h-1zM96 533h1v1h-1zM96 523h1v1h-1zM96 513h1v1h-1zM96 503h1v1h-1zM96 493h1v1h-1zM96 483h1v1h-1zM96 473h1v1h-1zM96 463h1v1h-1zM96 453h1v1h-1zM96 443h1v1h-1zM96 433h1v1h-1zM96 423h1v1h-1zM96 413h1v1h-1zM96 403h1v1h-1zM96 393h1v1h-1zM96 383h1v1h-1zM96 373h1v1h-1zM96 363h1v1h-1zM96 353h1v1h-1zM96 343h1v1h-1zM96 333h1v1h-1zM96 323h1v1h-1zM96 313h1v1h-1zM96 303h1v1h-1zM96 293h1v1h-1zM96 283h1v1h-1zM96 273h1v1h-1zM96 263h1v1h-1zM96 253h1v1h-1zM96 243h1v1h-1zM96 233h1v1h-1zM96 223h1v1h-1zM96 213h1v1h-1zM96 203h1v1h-1zM96 193h1v1h-1zM96 183h1v1h-1zM96 173h1v1h-1zM96 163h1v1h-1zM106 723h1v1h-1zM106 713h1v1h-1zM106 703h1v1h-1zM106 693h1v1h-1zM106 683h1v1h-1zM106 673h1v1h-1zM106 663h1v1h-1zM106 653h1v1h-1zM106 643h1v1h-1zM106 633h1v1h-1zM106 623h1v1h-1zM106 613h1v1h-1zM106 603h1v1h-1zM106 593h1v1h-1zM106 583h1v1h-1zM106 573h1v1h-1zM106 563h1v1h-1zM106 553h1v1h-1zM106 543h1v1h-1zM106 533h1v1h-1zM106 523h1v1h-1zM106 513h1v1h-1zM106 503h1v1h-1zM106 493h1v1h-1zM106 483h1v1h-1zM106 473h1v1h-1zM106 463h1v1h-1zM106 453h1v1h-1zM106 443h1v1h-1zM106 433h1v1h-1zM106 423h1v1h-1zM106 413h1v1h-1zM106 403h1v1h-1zM106 393h1v1h-1zM106 383h1v1h-1zM106 373h1v1h-1zM106 363h1v1h-1zM106 353h1v1h-1zM106 343h1v1h-1zM106 333h1v1h-1zM106 323h1v1h-1zM106 313h1v1h-1zM106 303h1v1h-1zM106 293h1v1h-1zM106 283h1v1h-1zM106 273h1v1h-1zM106 263h1v1h-1zM106 253h1v1h-1zM106 243h1v1h-1zM106 233h1v1h-1zM106 223h1v1h-1zM106 213h1v1h-1zM106 203h1v1h-1zM106 193h1v1h-1zM106 183h1v1h-1zM106 173h1v1h-1zM106 163h1v1h-1zM116 723h1v1h-1zM116 713h1v1h-1zM116 703h1v1h-1zM116 693h1v1h-1zM116 683h1v1h-1zM116 673h1v1h-1zM116 663h1v1h-1zM116 653h1v1h-1zM116 643h1v1h-1zM116 633h1v1h-1zM116 623h1v1h-1zM116 613h1v1h-1zM116 603h1v1h-1zM116 593h1v1h-1zM116 583h1v1h-1zM116 573h1v1h-1zM116 563h1v1h-1zM116 553h1v1h-1zM116 543h1v1h-1zM116 533h1v1h-1zM116 523h1v1h-1zM116 513h1v1h-1zM116 503h1v1h-1zM116 493h1v1h-1zM116 483h1v1h-1zM116 473h1v1h-1zM116 463h1v1h-1zM116 453h1v1h-1zM116 443h1v1h-1zM116 433h1v1h-1zM116 423h1v1h-1zM116 413h1v1h-1zM116 403h1v1h-1zM116 393h1v1h-1zM116 383h1v1h-1zM116 373h1v1h-1zM116 363h1v1h-1zM116 353h1v1h-1zM116 343h1v1h-1zM116 333h1v1h-1zM116 323h1v1h-1zM116 313h1v1h-1zM116 303h1v1h-1zM116 293h1v1h-1zM116 283h1v1h-1zM116 273h1v1h-1zM116 263h1v1h-1zM116 253h1v1h-1zM116 243h1v1h-1zM116 233h1v1h-1zM116 223h1v1h-1zM116 213h1v1h-1zM116 203h1v1h-1zM116 193h1v1h-1zM116 183h1v1h-1zM116 173h1v1h-1zM116 163h1v1h-1zM126 723h1v1h-1zM126 713h1v1h-1zM126 703h1v1h-1zM126 693h1v1h-1zM126 683h1v1h-1zM126 673h1v1h-1zM126 663h1v1h-1zM126 653h1v1h-1zM126 643h1v1h-1zM126 633h1v1h-1zM126 623h1v1h-1zM126 613h1v1h-1zM126 603h1v1h-1zM126 593h1v1h-1zM126 583h1v1h-1zM126 573h1v1h-1zM126 563h1v1h-1zM126 553h1v1h-1zM126 543h1v1h-1zM126 533h1v1h-1zM126 523h1v1h-1zM126 513h1v1h-1zM126 503h1v1h-1zM126 493h1v1h-1zM126 483h1v1h-1zM126 473h1v1h-1zM126 463h1v1h-1zM126 453h1v1h-1zM126 443h1v1h-1zM126 433h1v1h-1zM126 423h1v1h-1zM126 413h1v1h-1zM126 403h1v1h-1zM126 393h1v1h-1zM126 383h1v1h-1zM126 373h1v1h-1zM126 363h1v1h-1zM126 353h1v1h-1zM126 343h1v1h-1zM126 333h1v1h-1zM126 323h1v1h-1zM126 313h1v1h-1zM126 303h1v1h-1zM126 293h1v1h-1zM126 283h1v1h-1zM126 273h1v1h-1zM126 263h1v1h-1zM126 253h1v1h-1zM126 243h1v1h-1zM126 233h1v1h-1zM126 223h1v1h-1zM126 213h1v1h-1zM126 203h1v1h-1zM126 193h1v1h-1zM126 183h1v1h-1zM126 173h1v1h-1zM126 163h1v1h-1zM136 723h1v1h-1zM136 713h1v1h-1zM136 703h1v1h-1zM136 693h1v1h-1zM136 683h1v1h-1zM136 673h1v1h-1zM136 663h1v1h-1zM136 653h1v1h-1zM136 643h1v1h-1zM136 633h1v1h-1zM136 623h1v1h-1zM136 613h1v1h-1zM136 603h1v1h-1zM136 593h1v1h-1zM136 583h1v1h-1zM136 573h1v1h-1zM136 563h1v1h-1zM136 553h1v1h-1zM136 543h1v1h-1zM136 533h1v1h-1zM136 523h1v1h-1zM136 513h1v1h-1zM136 503h1v1h-1zM136 493h1v1h-1zM136 483h1v1h-1zM136 473h1v1h-1zM136 463h1v1h-1zM136 453h1v1h-1zM136 443h1v1h-1zM136 433h1v1h-1zM136 423h1v1h-1zM136 413h1v1h-1zM136 403h1v1h-1zM136 393h1v1h-1zM136 383h1v1h-1zM136 373h1v1h-1zM136 363h1v1h-1zM136 353h1v1h-1zM136 343h1v1h-1zM136 333h1v1h-1zM136 323h1v1h-1zM136 313h1v1h-1zM136 303h1v1h-1zM136 293h1v1h-1zM136 283h1v1h-1zM136 273h1v1h-1zM136 263h1v1h-1zM136 253h1v1h-1zM136 243h1v1h-1zM136 233h1v1h-1zM136 223h1v1h-1zM136 213h1v1h-1zM136 203h1v1h-1zM136 193h1v1h-1zM136 183h1v1h-1zM136 173h1v1h-1zM136 163h1v1h-1zM146 723h1v1h-1zM146 713h1v1h-1zM146 703h1v1h-1zM146 693h1v1h-1zM146 683h1v1h-1zM146 673h1v1h-1zM146 663h1v1h-1zM146 653h1v1h-1zM146 643h1v1h-1zM146 633h1v1h-1zM146 623h1v1h-1zM146 613h1v1h-1zM146 603h1v1h-1zM146 593h1v1h-1zM146 583h1v1h-1zM146 573h1v1h-1zM146 563h1v1h-1zM146 553h1v1h-1zM146 543h1v1h-1zM146 533h1v1h-1zM146 523h1v1h-1zM146 513h1v1h-1zM146 503h1v1h-1zM146 493h1v1h-1zM146 483h1v1h-1zM146 473h1v1h-1zM146 463h1v1h-1zM146 453h1v1h-1zM146 443h1v1h-1zM146 433h1v1h-1zM146 423h1v1h-1zM146 413h1v1h-1zM146 403h1v1h-1zM146 393h1v1h-1zM146 383h1v1h-1zM146 373h1v1h-1zM146 363h1v1h-1zM146 353h1v1h-1zM146 343h1v1h-1zM146 333h1v1h-1zM146 323h1v1h-1zM146 313h1v1h-1zM146 303h1v1h-1zM146 293h1v1h-1zM146 283h1v1h-1zM146 273h1v1h-1zM146 263h1v1h-1zM146 253h1v1h-1zM146 243h1v1h-1zM146 233h1v1h-1zM146 223h1v1h-1zM146 213h1v1h-1zM146 203h1v1h-1zM146 193h1v1h-1zM146 183h1v1h-1zM146 173h1v1h-1zM146 163h1v1h-1zM156 723h1v1h-1zM156 713h1v1h-1zM156 703h1v1h-1zM156 693h1v1h-1zM156 683h1v1h-1zM156 673h1v1h-1zM156 663h1v1h-1zM156 653h1v1h-1zM156 643h1v1h-1zM156 633h1v1h-1zM156 623h1v1h-1zM156 613h1v1h-1zM156 603h1v1h-1zM156 593h1v1h-1zM156 583h1v1h-1zM156 573h1v1h-1zM156 563h1v1h-1zM156 553h1v1h-1zM156 543h1v1h-1zM156 533h1v1h-1zM156 523h1v1h-1zM156 513h1v1h-1zM156 503h1v1h-1zM156 493h1v1h-1zM156 483h1v1h-1zM156 473h1v1h-1zM156 463h1v1h-1zM156 453h1v1h-1zM156 443h1v1h-1zM156 433h1v1h-1zM156 423h1v1h-1zM156 413h1v1h-1zM156 403h1v1h-1zM156 393h1v1h-1zM156 383h1v1h-1zM156 373h1v1h-1zM156 363h1v1h-1zM156 353h1v1h-1zM156 343h1v1h-1zM156 333h1v1h-1zM156 323h1v1h-1zM156 313h1v1h-1zM156 303h1v1h-1zM156 293h1v1h-1zM156 283h1v1h-1zM156 273h1v1h-1zM156 263h1v1h-1zM156 253h1v1h-1zM156 243h1v1h-1zM156 233h1v1h-1zM156 223h1v1h-1zM156 213h1v1h-1zM156 203h1v1h-1zM156 193h1v1h-1zM156 183h1v1h-1zM156 173h1v1h-1zM156 163h1v1h-1zM166 723h1v1h-1zM166 713h1v1h-1zM166 703h1v1h-1zM166 693h1v1h-1zM166 683h1v1h-1zM166 673h1v1h-1zM166 663h1v1h-1zM166 653h1v1h-1zM166 643h1v1h-1zM166 633h1v1h-1zM166 623h1v1h-1zM166 613h1v1h-1zM166 603h1v1h-1zM166 593h1v1h-1zM166 583h1v1h-1zM166 573h1v1h-1zM166 563h1v1h-1zM166 553h1v1h-1zM166 543h1v1h-1zM166 533h1v1h-1zM166 523h1v1h-1zM166 513h1v1h-1zM166 503h1v1h-1zM166 493h1v1h-1zM166 483h1v1h-1zM166 473h1v1h-1zM166 463h1v1h-1zM166 453h1v1h-1zM166 443h1v1h-1zM166 433h1v1h-1zM166 423h1v1h-1zM166 413h1v1h-1zM166 403h1v1h-1zM166 393h1v1h-1zM166 383h1v1h-1zM166 373h1v1h-1zM166 363h1v1h-1zM166 353h1v1h-1zM166 343h1v1h-1zM166 333h1v1h-1zM166 323h1v1h-1zM166 313h1v1h-1zM166 303h1v1h-1zM166 293h1v1h-1zM166 283h1v1h-1zM166 273h1v1h-1zM166 263h1v1h-1zM166 253h1v1h-1zM166 243h1v1h-1zM166 233h1v1h-1zM166 223h1v1h-1zM166 213h1v1h-1zM166 203h1v1h-1zM166 193h1v1h-1zM166 183h1v1h-1zM166 173h1v1h-1zM166 163h1v1h-1zM176 723h1v1h-1zM176 713h1v1h-1zM176 703h1v1h-1zM176 693h1v1h-1zM176 683h1v1h-1zM176 673h1v1h-1zM176 663h1v1h-1zM176 653h1v1h-1zM176 643h1v1h-1zM176 633h1v1h-1zM176 623h1v1h-1zM176 613h1v1h-1zM176 603h1v1h-1zM176 593h1v1h-1zM176 583h1v1h-1zM176 573h1v1h-1zM176 563h1v1h-1zM176 553h1v1h-1zM176 543h1v1h-1zM176 533h1v1h-1zM176 523h1v1h-1zM176 513h1v1h-1zM176 503h1v1h-1zM176 493h1v1h-1zM176 483h1v1h-1zM176 473h1v1h-1zM176 463h1v1h-1zM176 453h1v1h-1zM176 443h1v1h-1zM176 433h1v1h-1zM176 423h1v1h-1zM176 413h1v1h-1zM176 403h1v1h-1zM176 393h1v1h-1zM176 383h1v1h-1zM176 373h1v1h-1zM176 363h1v1h-1zM176 353h1v1h-1zM176 343h1v1h-1zM176 333h1v1h-1zM176 323h1v1h-1zM176 313h1v1h-1zM176 303h1v1h-1zM176 293h1v1h-1zM176 283h1v1h-1zM176 273h1v1h-1zM176 263h1v1h-1zM176 253h1v1h-1zM176 243h1v1h-1zM176 233h1v1h-1zM176 223h1v1h-1zM176 213h1v1h-1zM176 203h1v1h-1zM176 193h1v1h-1zM176 183h1v1h-1zM176 173h1v1h-1zM176 163h1v1h-1zM186 723h1v1h-1zM186 713h1v1h-1zM186 703h1v1h-1zM186 693h1v1h-1zM186 683h1v1h-1zM186 673h1v1h-1zM186 663h1v1h-1zM186 653h1v1h-1zM186 643h1v1h-1zM186 633h1v1h-1zM186 623h1v1h-1zM186 613h1v1h-1zM186 603h1v1h-1zM186 593h1v1h-1zM186 583h1v1h-1zM186 573h1v1h-1zM186 563h1v1h-1zM186 553h1v1h-1zM186 543h1v1h-1zM186 533h1v1h-1zM186 523h1v1h-1zM186 513h1v1h-1zM186 503h1v1h-1zM186 493h1v1h-1zM186 483h1v1h-1zM186 473h1v1h-1zM186 463h1v1h-1zM186 453h1v1h-1zM186 443h1v1h-1zM186 433h1v1h-1zM186 423h1v1h-1zM186 413h1v1h-1zM186 403h1v1h-1zM186 393h1v1h-1zM186 383h1v1h-1zM186 373h1v1h-1zM186 363h1v1h-1zM186 353h1v1h-1zM186 343h1v1h-1zM186 333h1v1h-1zM186 323h1v1h-1zM186 313h1v1h-1zM186 303h1v1h-1zM186 293h1v1h-1zM186 283h1v1h-1zM186 273h1v1h-1zM186 263h1v1h-1zM186 253h1v1h-1zM186 243h1v1h-1zM186 233h1v1h-1zM186 223h1v1h-1zM186 213h1v1h-1zM186 203h1v1h-1zM186 193h1v1h-1zM186 183h1v1h-1zM186 173h1v1h-1zM186 163h1v1h-1zM196 723h1v1h-1zM196 713h1v1h-1zM196 703h1v1h-1zM196 693h1v1h-1zM196 683h1v1h-1zM196 673h1v1h-1zM196 663h1v1h-1zM196 653h1v1h-1zM196 643h1v1h-1zM196 633h1v1h-1zM196 623h1v1h-1zM196 613h1v1h-1zM196 603h1v1h-1zM196 593h1v1h-1zM196 583h1v1h-1zM196 573h1v1h-1zM196 563h1v1h-1zM196 553h1v1h-1zM196 543h1v1h-1zM196 533h1v1h-1zM196 523h1v1h-1zM196 513h1v1h-1zM196 503h1v1h-1zM196 493h1v1h-1zM196 483h1v1h-1zM196 473h1v1h-1zM196 463h1v1h-1zM196 453h1v1h-1zM196 443h1v1h-1zM196 433h1v1h-1zM196 423h1v1h-1zM196 413h1v1h-1zM196 403h1v1h-1zM196 393h1v1h-1zM196 383h1v1h-1zM196 373h1v1h-1zM196 363h1v1h-1zM196 353h1v1h-1zM196 343h1v1h-1zM196 333h1v1h-1zM196 323h1v1h-1zM196 313h1v1h-1zM196 303h1v1h-1zM196 293h1v1h-1zM196 283h1v1h-1zM196 273h1v1h-1zM196 263h1v1h-1zM196 253h1v1h-1zM196 243h1v1h-1zM196 233h1v1h-1zM196 223h1v1h-1zM196 213h1v1h-1zM196 203h1v1h-1zM196 193h1v1h-1zM196 183h1v1h-1zM196 173h1v1h-1zM196 163h1v1h-1zM206 723h1v1h-1zM206 713h1v1h-1zM206 703h1v1h-1zM206 693h1v1h-1zM206 683h1v1h-1zM206 673h1v1h-1zM206 663h1v1h-1zM206 653h1v1h-1zM206 643h1v1h-1zM206 633h1v1h-1zM206 623h1v1h-1zM206 613h1v1h-1zM206 603h1v1h-1zM206 593h1v1h-1zM206 583h1v1h-1zM206 573h1v1h-1zM206 563h1v1h-1zM206 553h1v1h-1zM206 543h1v1h-1zM206 533h1v1h-1zM206 523h1v1h-1zM206 513h1v1h-1zM206 503h1v1h-1zM206 493h1v1h-1zM206 483h1v1h-1zM206 473h1v1h-1zM206 463h1v1h-1zM206 453h1v1h-1zM206 443h1v1h-1zM206 433h1v1h-1zM206 423h1v1h-1zM206 413h1v1h-1zM206 403h1v1h-1zM206 393h1v1h-1zM206 383h1v1h-1zM206 373h1v1h-1zM206 363h1v1h-1zM206 353h1v1h-1zM206 343h1v1h-1zM206 333h1v1h-1zM206 323h1v1h-1zM206 313h1v1h-1zM206 303h1v1h-1zM206 293h1v1h-1zM206 283h1v1h-1zM206 273h1v1h-1zM206 263h1v1h-1zM206 253h1v1h-1zM206 243h1v1h-1zM206 233h1v1h-1zM206 223h1v1h-1zM206 213h1v1h-1zM206 203h1v1h-1zM206 193h1v1h-1zM206 183h1v1h-1zM206 173h1v1h-1zM206 163h1v1h-1zM216 723h1v1h-1zM216 713h1v1h-1zM216 703h1v1h-1zM216 693h1v1h-1zM216 683h1v1h-1zM216 673h1v1h-1zM216 663h1v1h-1zM216 653h1v1h-1zM216 643h1v1h-1zM216 633h1v1h-1zM216 623h1v1h-1zM216 613h1v1h-1zM216 603h1v1h-1zM216 593h1v1h-1zM216 583h1v1h-1zM216 573h1v1h-1zM216 563h1v1h-1zM216 553h1v1h-1zM216 543h1v1h-1zM216 533h1v1h-1zM216 523h1v1h-1zM216 513h1v1h-1zM216 503h1v1h-1zM216 493h1v1h-1zM216 483h1v1h-1zM216 473h1v1h-1zM216 463h1v1h-1zM216 453h1v1h-1zM216 443h1v1h-1zM216 433h1v1h-1zM216 423h1v1h-1zM216 413h1v1h-1zM216 403h1v1h-1zM216 393h1v1h-1zM216 383h1v1h-1zM216 373h1v1h-1zM216 363h1v1h-1zM216 353h1v1h-1zM216 343h1v1h-1zM216 333h1v1h-1zM216 323h1v1h-1zM216 313h1v1h-1zM216 303h1v1h-1zM216 293h1v1h-1zM216 283h1v1h-1zM216 273h1v1h-1zM216 263h1v1h-1zM216 253h1v1h-1zM216 243h1v1h-1zM216 233h1v1h-1zM216 223h1v1h-1zM216 213h1v1h-1zM216 203h1v1h-1zM216 193h1v1h-1zM216 183h1v1h-1zM216 173h1v1h-1zM216 163h1v1h-1zM226 723h1v1h-1zM226 713h1v1h-1zM226 703h1v1h-1zM226 693h1v1h-1zM226 683h1v1h-1zM226 673h1v1h-1zM226 663h1v1h-1zM226 653h1v1h-1zM226 643h1v1h-1zM226 633h1v1h-1zM226 623h1v1h-1zM226 613h1v1h-1zM226 603h1v1h-1zM226 593h1v1h-1zM226 583h1v1h-1zM226 573h1v1h-1zM226 563h1v1h-1zM226 553h1v1h-1zM226 543h1v1h-1zM226 533h1v1h-1zM226 523h1v1h-1zM226 513h1v1h-1zM226 503h1v1h-1zM226 493h1v1h-1zM226 483h1v1h-1zM226 473h1v1h-1zM226 463h1v1h-1zM226 453h1v1h-1zM226 443h1v1h-1zM226 433h1v1h-1zM226 423h1v1h-1zM226 413h1v1h-1zM226 403h1v1h-1zM226 393h1v1h-1zM226 383h1v1h-1zM226 373h1v1h-1zM226 363h1v1h-1zM226 353h1v1h-1zM226 343h1v1h-1zM226 333h1v1h-1zM226 323h1v1h-1zM226 313h1v1h-1zM226 303h1v1h-1zM226 293h1v1h-1zM226 283h1v1h-1zM226 273h1v1h-1zM226 263h1v1h-1zM226 253h1v1h-1zM226 243h1v1h-1zM226 233h1v1h-1zM226 223h1v1h-1zM226 213h1v1h-1zM226 203h1v1h-1zM226 193h1v1h-1zM226 183h1v1h-1zM226 173h1v1h-1zM226 163h1v1h-1zM236 723h1v1h-1zM236 713h1v1h-1zM236 703h1v1h-1zM236 693h1v1h-1zM236 683h1v1h-1zM236 673h1v1h-1zM236 663h1v1h-1zM236 653h1v1h-1zM236 643h1v1h-1zM236 633h1v1h-1zM236 623h1v1h-1zM236 613h1v1h-1zM236 603h1v1h-1zM236 593h1v1h-1zM236 583h1v1h-1zM236 573h1v1h-1zM236 563h1v1h-1zM236 553h1v1h-1zM236 543h1v1h-1zM236 533h1v1h-1zM236 523h1v1h-1zM236 513h1v1h-1zM236 503h1v1h-1zM236 493h1v1h-1zM236 483h1v1h-1zM236 473h1v1h-1zM236 463h1v1h-1zM236 453h1v1h-1zM236 443h1v1h-1zM236 433h1v1h-1zM236 423h1v1h-1zM236 413h1v1h-1zM236 403h1v1h-1zM236 393h1v1h-1zM236 383h1v1h-1zM236 373h1v1h-1zM236 363h1v1h-1zM236 353h1v1h-1zM236 343h1v1h-1zM236 333h1v1h-1zM236 323h1v1h-1zM236 313h1v1h-1zM236 303h1v1h-1zM236 293h1v1h-1zM236 283h1v1h-1zM236 273h1v1h-1zM236 263h1v1h-1zM236 253h1v1h-1zM236 243h1v1h-1zM236 233h1v1h-1zM236 223h1v1h-1zM236 213h1v1h-1zM236 203h1v1h-1zM236 193h1v1h-1zM236 183h1v1h-1zM236 173h1v1h-1zM236 163h1v1h-1zM246 723h1v1h-1zM246 713h1v1h-1zM246 703h1v1h-1zM246 693h1v1h-1zM246 683h1v1h-1zM246 673h1v1h-1zM246 663h1v1h-1zM246 653h1v1h-1zM246 643h1v1h-1zM246 633h1v1h-1zM246 623h1v1h-1zM246 613h1v1h-1zM246 603h1v1h-1zM246 593h1v1h-1zM246 583h1v1h-1zM246 573h1v1h-1zM246 563h1v1h-1zM246 553h1v1h-1zM246 543h1v1h-1zM246 533h1v1h-1zM246 523h1v1h-1zM246 513h1v1h-1zM246 503h1v1h-1zM246 493h1v1h-1zM246 483h1v1h-1zM246 473h1v1h-1zM246 463h1v1h-1zM246 453h1v1h-1zM246 443h1v1h-1zM246 433h1v1h-1zM246 423h1v1h-1zM246 413h1v1h-1zM246 403h1v1h-1zM246 393h1v1h-1zM246 383h1v1h-1zM246 373h1v1h-1zM246 363h1v1h-1zM246 353h1v1h-1zM246 343h1v1h-1zM246 333h1v1h-1zM246 323h1v1h-1zM246 313h1v1h-1zM246 303h1v1h-1zM246 293h1v1h-1zM246 283h1v1h-1zM246 273h1v1h-1zM246 263h1v1h-1zM246 253h1v1h-1zM246 243h1v1h-1zM246 233h1v1h-1zM246 223h1v1h-1zM246 213h1v1h-1zM246 203h1v1h-1zM246 193h1v1h-1zM246 183h1v1h-1zM246 173h1v1h-1zM246 163h1v1h-1zM256 723h1v1h-1zM256 713h1v1h-1zM256 703h1v1h-1zM256 693h1v1h-1zM256 683h1v1h-1zM256 673h1v1h-1zM256 663h1v1h-1zM256 653h1v1h-1zM256 643h1v1h-1zM256 633h1v1h-1zM256 623h1v1h-1zM256 613h1v1h-1zM256 603h1v1h-1zM256 593h1v1h-1zM256 583h1v1h-1zM256 573h1v1h-1zM256 563h1v1h-1zM256 553h1v1h-1zM256 543h1v1h-1zM256 533h1v1h-1zM256 523h1v1h-1zM256 513h1v1h-1zM256 503h1v1h-1zM256 493h1v1h-1zM256 483h1v1h-1zM256 473h1v1h-1zM256 463h1v1h-1zM256 453h1v1h-1zM256 443h1v1h-1zM256 433h1v1h-1zM256 423h1v1h-1zM256 413h1v1h-1zM256 403h1v1h-1zM256 393h1v1h-1zM256 383h1v1h-1zM256 373h1v1h-1zM256 363h1v1h-1zM256 353h1v1h-1zM256 343h1v1h-1zM256 333h1v1h-1zM256 323h1v1h-1zM256 313h1v1h-1zM256 303h1v1h-1zM256 293h1v1h-1zM256 283h1v1h-1zM256 273h1v1h-1zM256 263h1v1h-1zM256 253h1v1h-1zM256 243h1v1h-1zM256 233h1v1h-1zM256 223h1v1h-1zM256 213h1v1h-1zM256 203h1v1h-1zM256 193h1v1h-1zM256 183h1v1h-1zM256 173h1v1h-1zM256 163h1v1h-1zM266 723h1v1h-1zM266 713h1v1h-1zM266 703h1v1h-1zM266 693h1v1h-1zM266 683h1v1h-1zM266 673h1v1h-1zM266 663h1v1h-1zM266 653h1v1h-1zM266 643h1v1h-1zM266 633h1v1h-1zM266 623h1v1h-1zM266 613h1v1h-1zM266 603h1v1h-1zM266 593h1v1h-1zM266 583h1v1h-1zM266 573h1v1h-1zM266 563h1v1h-1zM266 553h1v1h-1zM266 543h1v1h-1zM266 533h1v1h-1zM266 523h1v1h-1zM266 513h1v1h-1zM266 503h1v1h-1zM266 493h1v1h-1zM266 483h1v1h-1zM266 473h1v1h-1zM266 463h1v1h-1zM266 453h1v1h-1zM266 443h1v1h-1zM266 433h1v1h-1zM266 423h1v1h-1zM266 413h1v1h-1zM266 403h1v1h-1zM266 393h1v1h-1zM266 383h1v1h-1zM266 373h1v1h-1zM266 363h1v1h-1zM266 353h1v1h-1zM266 343h1v1h-1zM266 333h1v1h-1zM266 323h1v1h-1zM266 313h1v1h-1zM266 303h1v1h-1zM266 293h1v1h-1zM266 283h1v1h-1zM266 273h1v1h-1zM266 263h1v1h-1zM266 253h1v1h-1zM266 243h1v1h-1zM266 233h1v1h-1zM266 223h1v1h-1zM266 213h1v1h-1zM266 203h1v1h-1zM266 193h1v1h-1zM266 183h1v1h-1zM266 173h1v1h-1zM266 163h1v1h-1zM276 723h1v1h-1zM276 713h1v1h-1zM276 703h1v1h-1zM276 693h1v1h-1zM276 683h1v1h-1zM276 673h1v1h-1zM276 663h1v1h-1zM276 653h1v1h-1zM276 643h1v1h-1zM276 633h1v1h-1zM276 623h1v1h-1zM276 613h1v1h-1zM276 603h1v1h-1zM276 593h1v1h-1zM276 583h1v1h-1zM276 573h1v1h-1zM276 563h1v1h-1zM276 553h1v1h-1zM276 543h1v1h-1zM276 533h1v1h-1zM276 523h1v1h-1zM276 513h1v1h-1zM276 503h1v1h-1zM276 493h1v1h-1zM276 483h1v1h-1zM276 473h1v1h-1zM276 463h1v1h-1zM276 453h1v1h-1zM276 443h1v1h-1zM276 433h1v1h-1zM276 423h1v1h-1zM276 413h1v1h-1zM276 403h1v1h-1zM276 393h1v1h-1zM276 383h1v1h-1zM276 373h1v1h-1zM276 363h1v1h-1zM276 353h1v1h-1zM276 343h1v1h-1zM276 333h1v1h-1zM276 323h1v1h-1zM276 313h1v1h-1zM276 303h1v1h-1zM276 293h1v1h-1zM276 283h1v1h-1zM276 273h1v1h-1zM276 263h1v1h-1zM276 253h1v1h-1zM276 243h1v1h-1zM276 233h1v1h-1zM276 223h1v1h-1zM276 213h1v1h-1zM276 203h1v1h-1zM276 193h1v1h-1zM276 183h1v1h-1zM276 173h1v1h-1zM276 163h1v1h-1zM286 723h1v1h-1zM286 713h1v1h-1zM286 703h1v1h-1zM286 693h1v1h-1zM286 683h1v1h-1zM286 673h1v1h-1zM286 663h1v1h-1zM286 653h1v1h-1zM286 643h1v1h-1zM286 633h1v1h-1zM286 623h1v1h-1zM286 613h1v1h-1zM286 603h1v1h-1zM286 593h1v1h-1zM286 583h1v1h-1zM286 573h1v1h-1zM286 563h1v1h-1zM286 553h1v1h-1zM286 543h1v1h-1zM286 533h1v1h-1zM286 523h1v1h-1zM286 513h1v1h-1zM286 503h1v1h-1zM286 493h1v1h-1zM286 483h1v1h-1zM286 473h1v1h-1zM286 463h1v1h-1zM286 453h1v1h-1zM286 443h1v1h-1zM286 433h1v1h-1zM286 423h1v1h-1zM286 413h1v1h-1zM286 403h1v1h-1zM286 393h1v1h-1zM286 383h1v1h-1zM286 373h1v1h-1zM286 363h1v1h-1zM286 353h1v1h-1zM286 343h1v1h-1zM286 333h1v1h-1zM286 323h1v1h-1zM286 313h1v1h-1zM286 303h1v1h-1zM286 293h1v1h-1zM286 283h1v1h-1zM286 273h1v1h-1zM286 263h1v1h-1zM286 253h1v1h-1zM286 243h1v1h-1zM286 233h1v1h-1zM286 223h1v1h-1zM286 213h1v1h-1zM286 203h1v1h-1zM286 193h1v1h-1zM286 183h1v1h-1zM286 173h1v1h-1zM286 163h1v1h-1zM296 723h1v1h-1zM296 713h1v1h-1zM296 703h1v1h-1zM296 693h1v1h-1zM296 683h1v1h-1zM296 673h1v1h-1zM296 663h1v1h-1zM296 653h1v1h-1zM296 643h1v1h-1zM296 633h1v1h-1zM296 623h1v1h-1zM296 613h1v1h-1zM296 603h1v1h-1zM296 593h1v1h-1zM296 583h1v1h-1zM296 573h1v1h-1zM296 563h1v1h-1zM296 553h1v1h-1zM296 543h1v1h-1zM296 533h1v1h-1zM296 523h1v1h-1zM296 513h1v1h-1zM296 503h1v1h-1zM296 493h1v1h-1zM296 483h1v1h-1zM296 473h1v1h-1zM296 463h1v1h-1zM296 453h1v1h-1zM296 443h1v1h-1zM296 433h1v1h-1zM296 423h1v1h-1zM296 413h1v1h-1zM296 403h1v1h-1zM296 393h1v1h-1zM296 383h1v1h-1zM296 373h1v1h-1zM296 363h1v1h-1zM296 353h1v1h-1zM296 343h1v1h-1zM296 333h1v1h-1zM296 323h1v1h-1zM296 313h1v1h-1zM296 303h1v1h-1zM296 293h1v1h-1zM296 283h1v1h-1zM296 273h1v1h-1zM296 263h1v1h-1zM296 253h1v1h-1zM296 243h1v1h-1zM296 233h1v1h-1zM296 223h1v1h-1zM296 213h1v1h-1zM296 203h1v1h-1zM296 193h1v1h-1zM296 183h1v1h-1zM296 173h1v1h-1zM296 163h1v1h-1zM306 723h1v1h-1zM306 713h1v1h-1zM306 703h1v1h-1zM306 693h1v1h-1zM306 683h1v1h-1zM306 673h1v1h-1zM306 663h1v1h-1zM306 653h1v1h-1zM306 643h1v1h-1zM306 633h1v1h-1zM306 623h1v1h-1zM306 613h1v1h-1zM306 603h1v1h-1zM306 593h1v1h-1zM306 583h1v1h-1zM306 573h1v1h-1zM306 563h1v1h-1zM306 553h1v1h-1zM306 543h1v1h-1zM306 533h1v1h-1zM306 523h1v1h-1zM306 513h1v1h-1zM306 503h1v1h-1zM306 493h1v1h-1zM306 483h1v1h-1zM306 473h1v1h-1zM306 463h1v1h-1zM306 453h1v1h-1zM306 443h1v1h-1zM306 433h1v1h-1zM306 423h1v1h-1zM306 413h1v1h-1zM306 403h1v1h-1zM306 393h1v1h-1zM306 383h1v1h-1zM306 373h1v1h-1zM306 363h1v1h-1zM306 353h1v1h-1zM306 343h1v1h-1zM306 333h1v1h-1zM306 323h1v1h-1zM306 313h1v1h-1zM306 303h1v1h-1zM306 293h1v1h-1zM306 283h1v1h-1zM306 273h1v1h-1zM306 263h1v1h-1zM306 253h1v1h-1zM306 243h1v1h-1zM306 233h1v1h-1zM306 223h1v1h-1zM306 213h1v1h-1zM306 203h1v1h-1zM306 193h1v1h-1zM306 183h1v1h-1zM306 173h1v1h-1zM306 163h1v1h-1zM316 723h1v1h-1zM316 713h1v1h-1zM316 703h1v1h-1zM316 693h1v1h-1zM316 683h1v1h-1zM316 673h1v1h-1zM316 663h1v1h-1zM316 653h1v1h-1zM316 643h1v1h-1zM316 633h1v1h-1zM316 623h1v1h-1zM316 613h1v1h-1zM316 603h1v1h-1zM316 593h1v1h-1zM316 583h1v1h-1zM316 573h1v1h-1zM316 563h1v1h-1zM316 553h1v1h-1zM316 543h1v1h-1zM316 533h1v1h-1zM316 523h1v1h-1zM316 513h1v1h-1zM316 503h1v1h-1zM316 493h1v1h-1zM316 483h1v1h-1zM316 473h1v1h-1zM316 463h1v1h-1zM316 453h1v1h-1zM316 443h1v1h-1zM316 433h1v1h-1zM316 423h1v1h-1zM316 413h1v1h-1zM316 403h1v1h-1zM316 393h1v1h-1zM316 383h1v1h-1zM316 373h1v1h-1zM316 363h1v1h-1zM316 353h1v1h-1zM316 343h1v1h-1zM316 333h1v1h-1zM316 323h1v1h-1zM316 313h1v1h-1zM316 303h1v1h-1zM316 293h1v1h-1zM316 283h1v1h-1zM316 273h1v1h-1zM316 263h1v1h-1zM316 253h1v1h-1zM316 243h1v1h-1zM316 233h1v1h-1zM316 223h1v1h-1zM316 213h1v1h-1zM316 203h1v1h-1zM316 193h1v1h-1zM316 183h1v1h-1zM316 173h1v1h-1zM316 163h1v1h-1zM326 723h1v1h-1zM326 713h1v1h-1zM326 703h1v1h-1zM326 693h1v1h-1zM326 683h1v1h-1zM326 673h1v1h-1zM326 663h1v1h-1zM326 653h1v1h-1zM326 643h1v1h-1zM326 633h1v1h-1zM326 623h1v1h-1zM326 613h1v1h-1zM326 603h1v1h-1zM326 593h1v1h-1zM326 583h1v1h-1zM326 573h1v1h-1zM326 563h1v1h-1zM326 553h1v1h-1zM326 543h1v1h-1zM326 533h1v1h-1zM326 523h1v1h-1zM326 513h1v1h-1zM326 503h1v1h-1zM326 493h1v1h-1zM326 483h1v1h-1zM326 473h1v1h-1zM326 463h1v1h-1zM326 453h1v1h-1zM326 443h1v1h-1zM326 433h1v1h-1zM326 423h1v1h-1zM326 413h1v1h-1zM326 403h1v1h-1zM326 393h1v1h-1zM326 383h1v1h-1zM326 373h1v1h-1zM326 363h1v1h-1zM326 353h1v1h-1zM326 343h1v1h-1zM326 333h1v1h-1zM326 323h1v1h-1zM326 313h1v1h-1zM326 303h1v1h-1zM326 293h1v1h-1zM326 283h1v1h-1zM326 273h1v1h-1zM326 263h1v1h-1zM326 253h1v1h-1zM326 243h1v1h-1zM326 233h1v1h-1zM326 223h1v1h-1zM326 213h1v1h-1zM326 203h1v1h-1zM326 193h1v1h-1zM326 183h1v1h-1zM326 173h1v1h-1zM326 163h1v1h-1zM336 723h1v1h-1zM336 713h1v1h-1zM336 703h1v1h-1zM336 693h1v1h-1zM336 683h1v1h-1zM336 673h1v1h-1zM336 663h1v1h-1zM336 653h1v1h-1zM336 643h1v1h-1zM336 633h1v1h-1zM336 623h1v1h-1zM336 613h1v1h-1zM336 603h1v1h-1zM336 593h1v1h-1zM336 583h1v1h-1zM336 573h1v1h-1zM336 563h1v1h-1zM336 553h1v1h-1zM336 543h1v1h-1zM336 533h1v1h-1zM336 523h1v1h-1zM336 513h1v1h-1zM336 503h1v1h-1zM336 493h1v1h-1zM336 483h1v1h-1zM336 473h1v1h-1zM336 463h1v1h-1zM336 453h1v1h-1zM336 443h1v1h-1zM336 433h1v1h-1zM336 423h1v1h-1zM336 413h1v1h-1zM336 403h1v1h-1zM336 393h1v1h-1zM336 383h1v1h-1zM336 373h1v1h-1zM336 363h1v1h-1zM336 353h1v1h-1zM336 343h1v1h-1zM336 333h1v1h-1zM336 323h1v1h-1zM336 313h1v1h-1zM336 303h1v1h-1zM336 293h1v1h-1zM336 283h1v1h-1zM336 273h1v1h-1zM336 263h1v1h-1zM336 253h1v1h-1zM336 243h1v1h-1zM336 233h1v1h-1zM336 223h1v1h-1zM336 213h1v1h-1zM336 203h1v1h-1zM336 193h1v1h-1zM336 183h1v1h-1zM336 173h1v1h-1zM336 163h1v1h-1zM346 723h1v1h-1zM346 713h1v1h-1zM346 703h1v1h-1zM346 693h1v1h-1zM346 683h1v1h-1zM346 673h1v1h-1zM346 663h1v1h-1zM346 653h1v1h-1zM346 643h1v1h-1zM346 633h1v1h-1zM346 623h1v1h-1zM346 613h1v1h-1zM346 603h1v1h-1zM346 593h1v1h-1zM346 583h1v1h-1zM346 573h1v1h-1zM346 563h1v1h-1zM346 553h1v1h-1zM346 543h1v1h-1zM346 533h1v1h-1zM346 523h1v1h-1zM346 513h1v1h-1zM346 503h1v1h-1zM346 493h1v1h-1zM346 483h1v1h-1zM346 473h1v1h-1zM346 463h1v1h-1zM346 453h1v1h-1zM346 443h1v1h-1zM346 433h1v1h-1zM346 423h1v1h-1zM346 413h1v1h-1zM346 403h1v1h-1zM346 393h1v1h-1zM346 383h1v1h-1zM346 373h1v1h-1zM346 363h1v1h-1zM346 353h1v1h-1zM346 343h1v1h-1zM346 333h1v1h-1zM346 323h1v1h-1zM346 313h1v1h-1zM346 303h1v1h-1zM346 293h1v1h-1zM346 283h1v1h-1zM346 273h1v1h-1zM346 263h1v1h-1zM346 253h1v1h-1zM346 243h1v1h-1zM346 233h1v1h-1zM346 223h1v1h-1zM346 213h1v1h-1zM346 203h1v1h-1zM346 193h1v1h-1zM346 183h1v1h-1zM346 173h1v1h-1zM346 163h1v1h-1zM356 723h1v1h-1zM356 713h1v1h-1zM356 703h1v1h-1zM356 693h1v1h-1zM356 683h1v1h-1zM356 673h1v1h-1zM356 663h1v1h-1zM356 653h1v1h-1zM356 643h1v1h-1zM356 633h1v1h-1zM356 623h1v1h-1zM356 613h1v1h-1zM356 603h1v1h-1zM356 593h1v1h-1zM356 583h1v1h-1zM356 573h1v1h-1zM356 563h1v1h-1zM356 553h1v1h-1zM356 543h1v1h-1zM356 533h1v1h-1zM356 523h1v1h-1zM356 513h1v1h-1zM356 503h1v1h-1zM356 493h1v1h-1zM356 483h1v1h-1zM356 473h1v1h-1zM356 463h1v1h-1zM356 453h1v1h-1zM356 443h1v1h-1zM356 433h1v1h-1zM356 423h1v1h-1zM356 413h1v1h-1zM356 403h1v1h-1zM356 393h1v1h-1zM356 383h1v1h-1zM356 373h1v1h-1zM356 363h1v1h-1zM356 353h1v1h-1zM356 343h1v1h-1zM356 333h1v1h-1zM356 323h1v1h-1zM356 313h1v1h-1zM356 303h1v1h-1zM356 293h1v1h-1zM356 283h1v1h-1zM356 273h1v1h-1zM356 263h1v1h-1zM356 253h1v1h-1zM356 243h1v1h-1zM356 233h1v1h-1zM356 223h1v1h-1zM356 213h1v1h-1zM356 203h1v1h-1zM356 193h1v1h-1zM356 183h1v1h-1zM356 173h1v1h-1zM356 163h1v1h-1zM366 723h1v1h-1zM366 713h1v1h-1zM366 703h1v1h-1zM366 693h1v1h-1zM366 683h1v1h-1zM366 673h1v1h-1zM366 663h1v1h-1zM366 653h1v1h-1zM366 643h1v1h-1zM366 633h1v1h-1zM366 623h1v1h-1zM366 613h1v1h-1zM366 603h1v1h-1zM366 593h1v1h-1zM366 583h1v1h-1zM366 573h1v1h-1zM366 563h1v1h-1zM366 553h1v1h-1zM366 543h1v1h-1zM366 533h1v1h-1zM366 523h1v1h-1zM366 513h1v1h-1zM366 503h1v1h-1zM366 493h1v1h-1zM366 483h1v1h-1zM366 473h1v1h-1zM366 463h1v1h-1zM366 453h1v1h-1zM366 443h1v1h-1zM366 433h1v1h-1zM366 423h1v1h-1zM366 413h1v1h-1zM366 403h1v1h-1zM366 393h1v1h-1zM366 383h1v1h-1zM366 373h1v1h-1zM366 363h1v1h-1zM366 353h1v1h-1zM366 343h1v1h-1zM366 333h1v1h-1zM366 323h1v1h-1zM366 313h1v1h-1zM366 303h1v1h-1zM366 293h1v1h-1zM366 283h1v1h-1zM366 273h1v1h-1zM366 263h1v1h-1zM366 253h1v1h-1zM366 243h1v1h-1zM366 233h1v1h-1zM366 223h1v1h-1zM366 213h1v1h-1zM366 203h1v1h-1zM366 193h1v1h-1zM366 183h1v1h-1zM366 173h1v1h-1zM366 163h1v1h-1zM376 723h1v1h-1zM376 713h1v1h-1zM376 703h1v1h-1zM376 693h1v1h-1zM376 683h1v1h-1zM376 673h1v1h-1zM376 663h1v1h-1zM376 653h1v1h-1zM376 643h1v1h-1zM376 633h1v1h-1zM376 623h1v1h-1zM376 613h1v1h-1zM376 603h1v1h-1zM376 593h1v1h-1zM376 583h1v1h-1zM376 573h1v1h-1zM376 563h1v1h-1zM376 553h1v1h-1zM376 543h1v1h-1zM376 533h1v1h-1zM376 523h1v1h-1zM376 513h1v1h-1zM376 503h1v1h-1zM376 493h1v1h-1zM376 483h1v1h-1zM376 473h1v1h-1zM376 463h1v1h-1zM376 453h1v1h-1zM376 443h1v1h-1zM376 433h1v1h-1zM376 423h1v1h-1zM376 413h1v1h-1zM376 403h1v1h-1zM376 393h1v1h-1zM376 383h1v1h-1zM376 373h1v1h-1zM376 363h1v1h-1zM376 353h1v1h-1zM376 343h1v1h-1zM376 333h1v1h-1zM376 323h1v1h-1zM376 313h1v1h-1zM376 303h1v1h-1zM376 293h1v1h-1zM376 283h1v1h-1zM376 273h1v1h-1zM376 263h1v1h-1zM376 253h1v1h-1zM376 243h1v1h-1zM376 233h1v1h-1zM376 223h1v1h-1zM376 213h1v1h-1zM376 203h1v1h-1zM376 193h1v1h-1zM376 183h1v1h-1zM376 173h1v1h-1zM376 163h1v1h-1zM386 723h1v1h-1zM386 713h1v1h-1zM386 703h1v1h-1zM386 693h1v1h-1zM386 683h1v1h-1zM386 673h1v1h-1zM386 663h1v1h-1zM386 653h1v1h-1zM386 643h1v1h-1zM386 633h1v1h-1zM386 623h1v1h-1zM386 613h1v1h-1zM386 603h1v1h-1zM386 593h1v1h-1zM386 583h1v1h-1zM386 573h1v1h-1zM386 563h1v1h-1zM386 553h1v1h-1zM386 543h1v1h-1zM386 533h1v1h-1zM386 523h1v1h-1zM386 513h1v1h-1zM386 503h1v1h-1zM386 493h1v1h-1zM386 483h1v1h-1zM386 473h1v1h-1zM386 463h1v1h-1zM386 453h1v1h-1zM386 443h1v1h-1zM386 433h1v1h-1zM386 423h1v1h-1zM386 413h1v1h-1zM386 403h1v1h-1zM386 393h1v1h-1zM386 383h1v1h-1zM386 373h1v1h-1zM386 363h1v1h-1zM386 353h1v1h-1zM386 343h1v1h-1zM386 333h1v1h-1zM386 323h1v1h-1zM386 313h1v1h-1zM386 303h1v1h-1zM386 293h1v1h-1zM386 283h1v1h-1zM386 273h1v1h-1zM386 263h1v1h-1zM386 253h1v1h-1zM386 243h1v1h-1zM386 233h1v1h-1zM386 223h1v1h-1zM386 213h1v1h-1zM386 203h1v1h-1zM386 193h1v1h-1zM386 183h1v1h-1zM386 173h1v1h-1zM386 163h1v1h-1zM396 723h1v1h-1zM396 713h1v1h-1zM396 703h1v1h-1zM396 693h1v1h-1zM396 683h1v1h-1zM396 673h1v1h-1zM396 663h1v1h-1zM396 653h1v1h-1zM396 643h1v1h-1zM396 633h1v1h-1zM396 623h1v1h-1zM396 613h1v1h-1zM396 603h1v1h-1zM396 593h1v1h-1zM396 583h1v1h-1zM396 573h1v1h-1zM396 563h1v1h-1zM396 553h1v1h-1zM396 543h1v1h-1zM396 533h1v1h-1zM396 523h1v1h-1zM396 513h1v1h-1zM396 503h1v1h-1zM396 493h1v1h-1zM396 483h1v1h-1zM396 473h1v1h-1zM396 463h1v1h-1zM396 453h1v1h-1zM396 443h1v1h-1zM396 433h1v1h-1zM396 423h1v1h-1zM396 413h1v1h-1zM396 403h1v1h-1zM396 393h1v1h-1zM396 383h1v1h-1zM396 373h1v1h-1zM396 363h1v1h-1zM396 353h1v1h-1zM396 343h1v1h-1zM396 333h1v1h-1zM396 323h1v1h-1zM396 313h1v1h-1zM396 303h1v1h-1zM396 293h1v1h-1zM396 283h1v1h-1zM396 273h1v1h-1zM396 263h1v1h-1zM396 253h1v1h-1zM396 243h1v1h-1zM396 233h1v1h-1zM396 223h1v1h-1zM396 213h1v1h-1zM396 203h1v1h-1zM396 193h1v1h-1zM396 183h1v1h-1zM396 173h1v1h-1zM396 163h1v1h-1zM406 723h1v1h-1zM406 713h1v1h-1zM406 703h1v1h-1zM406 693h1v1h-1zM406 683h1v1h-1zM406 673h1v1h-1zM406 663h1v1h-1zM406 653h1v1h-1zM406 643h1v1h-1zM406 633h1v1h-1zM406 623h1v1h-1zM406 613h1v1h-1zM406 603h1v1h-1zM406 593h1v1h-1zM406 583h1v1h-1zM406 573h1v1h-1zM406 563h1v1h-1zM406 553h1v1h-1zM406 543h1v1h-1zM406 533h1v1h-1zM406 523h1v1h-1zM406 513h1v1h-1zM406 503h1v1h-1zM406 493h1v1h-1zM406 483h1v1h-1zM406 473h1v1h-1zM406 463h1v1h-1zM406 453h1v1h-1zM406 443h1v1h-1zM406 433h1v1h-1zM406 423h1v1h-1zM406 413h1v1h-1zM406 403h1v1h-1zM406 393h1v1h-1zM406 383h1v1h-1zM406 373h1v1h-1zM406 363h1v1h-1zM406 353h1v1h-1zM406 343h1v1h-1zM406 333h1v1h-1zM406 323h1v1h-1zM406 313h1v1h-1zM406 303h1v1h-1zM406 293h1v1h-1zM406 283h1v1h-1zM406 273h1v1h-1zM406 263h1v1h-1zM406 253h1v1h-1zM406 243h1v1h-1zM406 233h1v1h-1zM406 223h1v1h-1zM406 213h1v1h-1zM406 203h1v1h-1zM406 193h1v1h-1zM406 183h1v1h-1zM406 173h1v1h-1zM406 163h1v1h-1zM416 723h1v1h-1zM416 713h1v1h-1zM416 703h1v1h-1zM416 693h1v1h-1zM416 683h1v1h-1zM416 673h1v1h-1zM416 663h1v1h-1zM416 653h1v1h-1zM416 643h1v1h-1zM416 633h1v1h-1zM416 623h1v1h-1zM416 613h1v1h-1zM416 603h1v1h-1zM416 593h1v1h-1zM416 583h1v1h-1zM416 573h1v1h-1zM416 563h1v1h-1zM416 553h1v1h-1zM416 543h1v1h-1zM416 533h1v1h-1zM416 523h1v1h-1zM416 513h1v1h-1zM416 503h1v1h-1zM416 493h1v1h-1zM416 483h1v1h-1zM416 473h1v1h-1zM416 463h1v1h-1zM416 453h1v1h-1zM416 443h1v1h-1zM416 433h1v1h-1zM416 423h1v1h-1zM416 413h1v1h-1zM416 403h1v1h-1zM416 393h1v1h-1zM416 383h1v1h-1zM416 373h1v1h-1zM416 363h1v1h-1zM416 353h1v1h-1zM416 343h1v1h-1zM416 333h1v1h-1zM416 323h1v1h-1zM416 313h1v1h-1zM416 303h1v1h-1zM416 293h1v1h-1zM416 283h1v1h-1zM416 273h1v1h-1zM416 263h1v1h-1zM416 253h1v1h-1zM416 243h1v1h-1zM416 233h1v1h-1zM416 223h1v1h-1zM416 213h1v1h-1zM416 203h1v1h-1zM416 193h1v1h-1zM416 183h1v1h-1zM416 173h1v1h-1zM416 163h1v1h-1zM426 723h1v1h-1zM426 713h1v1h-1zM426 703h1v1h-1zM426 693h1v1h-1zM426 683h1v1h-1zM426 673h1v1h-1zM426 663h1v1h-1zM426 653h1v1h-1zM426 643h1v1h-1zM426 633h1v1h-1zM426 623h1v1h-1zM426 613h1v1h-1zM426 603h1v1h-1zM426 593h1v1h-1zM426 583h1v1h-1zM426 573h1v1h-1zM426 563h1v1h-1zM426 553h1v1h-1zM426 543h1v1h-1zM426 533h1v1h-1zM426 523h1v1h-1zM426 513h1v1h-1zM426 503h1v1h-1zM426 493h1v1h-1zM426 483h1v1h-1zM426 473h1v1h-1zM426 463h1v1h-1zM426 453h1v1h-1zM426 443h1v1h-1zM426 433h1v1h-1zM426 423h1v1h-1zM426 413h1v1h-1zM426 403h1v1h-1zM426 393h1v1h-1zM426 383h1v1h-1zM426 373h1v1h-1zM426 363h1v1h-1zM426 353h1v1h-1zM426 343h1v1h-1zM426 333h1v1h-1zM426 323h1v1h-1zM426 313h1v1h-1zM426 303h1v1h-1zM426 293h1v1h-1zM426 283h1v1h-1zM426 273h1v1h-1zM426 263h1v1h-1zM426 253h1v1h-1zM426 243h1v1h-1zM426 233h1v1h-1zM426 223h1v1h-1zM426 213h1v1h-1zM426 203h1v1h-1zM426 193h1v1h-1zM426 183h1v1h-1zM426 173h1v1h-1zM426 163h1v1h-1zM436 723h1v1h-1zM436 713h1v1h-1zM436 703h1v1h-1zM436 693h1v1h-1zM436 683h1v1h-1zM436 673h1v1h-1zM436 663h1v1h-1zM436 653h1v1h-1zM436 643h1v1h-1zM436 633h1v1h-1zM436 623h1v1h-1zM436 613h1v1h-1zM436 603h1v1h-1zM436 593h1v1h-1zM436 583h1v1h-1zM436 573h1v1h-1zM436 563h1v1h-1zM436 553h1v1h-1zM436 543h1v1h-1zM436 533h1v1h-1zM436 523h1v1h-1zM436 513h1v1h-1zM436 503h1v1h-1zM436 493h1v1h-1zM436 483h1v1h-1zM436 473h1v1h-1zM436 463h1v1h-1zM436 453h1v1h-1zM436 443h1v1h-1zM436 433h1v1h-1zM436 423h1v1h-1zM436 413h1v1h-1zM436 403h1v1h-1zM436 393h1v1h-1zM436 383h1v1h-1zM436 373h1v1h-1zM436 363h1v1h-1zM436 353h1v1h-1zM436 343h1v1h-1zM436 333h1v1h-1zM436 323h1v1h-1zM436 313h1v1h-1zM436 303h1v1h-1zM436 293h1v1h-1zM436 283h1v1h-1zM436 273h1v1h-1zM436 263h1v1h-1zM436 253h1v1h-1zM436 243h1v1h-1zM436 233h1v1h-1zM436 223h1v1h-1zM436 213h1v1h-1zM436 203h1v1h-1zM436 193h1v1h-1zM436 183h1v1h-1zM436 173h1v1h-1zM436 163h1v1h-1zM446 723h1v1h-1zM446 713h1v1h-1zM446 703h1v1h-1zM446 693h1v1h-1zM446 683h1v1h-1zM446 673h1v1h-1zM446 663h1v1h-1zM446 653h1v1h-1zM446 643h1v1h-1zM446 633h1v1h-1zM446 623h1v1h-1zM446 613h1v1h-1zM446 603h1v1h-1zM446 593h1v1h-1zM446 583h1v1h-1zM446 573h1v1h-1zM446 563h1v1h-1zM446 553h1v1h-1zM446 543h1v1h-1zM446 533h1v1h-1zM446 523h1v1h-1zM446 513h1v1h-1zM446 503h1v1h-1zM446 493h1v1h-1zM446 483h1v1h-1zM446 473h1v1h-1zM446 463h1v1h-1zM446 453h1v1h-1zM446 443h1v1h-1zM446 433h1v1h-1zM446 423h1v1h-1zM446 413h1v1h-1zM446 403h1v1h-1zM446 393h1v1h-1zM446 383h1v1h-1zM446 373h1v1h-1zM446 363h1v1h-1zM446 353h1v1h-1zM446 343h1v1h-1zM446 333h1v1h-1zM446 323h1v1h-1zM446 313h1v1h-1zM446 303h1v1h-1zM446 293h1v1h-1zM446 283h1v1h-1zM446 273h1v1h-1zM446 263h1v1h-1zM446 253h1v1h-1zM446 243h1v1h-1zM446 233h1v1h-1zM446 223h1v1h-1zM446 213h1v1h-1zM446 203h1v1h-1zM446 193h1v1h-1zM446 183h1v1h-1zM446 173h1v1h-1zM446 163h1v1h-1zM456 723h1v1h-1zM456 713h1v1h-1zM456 703h1v1h-1zM456 693h1v1h-1zM456 683h1v1h-1zM456 673h1v1h-1zM456 663h1v1h-1zM456 653h1v1h-1zM456 643h1v1h-1zM456 633h1v1h-1zM456 623h1v1h-1zM456 613h1v1h-1zM456 603h1v1h-1zM456 593h1v1h-1zM456 583h1v1h-1zM456 573h1v1h-1zM456 563h1v1h-1zM456 553h1v1h-1zM456 543h1v1h-1zM456 533h1v1h-1zM456 523h1v1h-1zM456 513h1v1h-1zM456 503h1v1h-1zM456 493h1v1h-1zM456 483h1v1h-1zM456 473h1v1h-1zM456 463h1v1h-1zM456 453h1v1h-1zM456 443h1v1h-1zM456 433h1v1h-1zM456 423h1v1h-1zM456 413h1v1h-1zM456 403h1v1h-1zM456 393h1v1h-1zM456 383h1v1h-1zM456 373h1v1h-1zM456 363h1v1h-1zM456 353h1v1h-1zM456 343h1v1h-1zM456 333h1v1h-1zM456 323h1v1h-1zM456 313h1v1h-1zM456 303h1v1h-1zM456 293h1v1h-1zM456 283h1v1h-1zM456 273h1v1h-1zM456 263h1v1h-1zM456 253h1v1h-1zM456 243h1v1h-1zM456 233h1v1h-1zM456 223h1v1h-1zM456 213h1v1h-1zM456 203h1v1h-1zM456 193h1v1h-1zM456 183h1v1h-1zM456 173h1v1h-1zM456 163h1v1h-1zM466 723h1v1h-1zM466 713h1v1h-1zM466 703h1v1h-1zM466 693h1v1h-1zM466 683h1v1h-1zM466 673h1v1h-1zM466 663h1v1h-1zM466 653h1v1h-1zM466 643h1v1h-1zM466 633h1v1h-1zM466 623h1v1h-1zM466 613h1v1h-1zM466 603h1v1h-1zM466 593h1v1h-1zM466 583h1v1h-1zM466 573h1v1h-1zM466 563h1v1h-1zM466 553h1v1h-1zM466 543h1v1h-1zM466 533h1v1h-1zM466 523h1v1h-1zM466 513h1v1h-1zM466 503h1v1h-1zM466 493h1v1h-1zM466 483h1v1h-1zM466 473h1v1h-1zM466 463h1v1h-1zM466 453h1v1h-1zM466 443h1v1h-1zM466 433h1v1h-1zM466 423h1v1h-1zM466 413h1v1h-1zM466 403h1v1h-1zM466 393h1v1h-1zM466 383h1v1h-1zM466 373h1v1h-1zM466 363h1v1h-1zM466 353h1v1h-1zM466 343h1v1h-1zM466 333h1v1h-1zM466 323h1v1h-1zM466 313h1v1h-1zM466 303h1v1h-1zM466 293h1v1h-1zM466 283h1v1h-1zM466 273h1v1h-1zM466 263h1v1h-1zM466 253h1v1h-1zM466 243h1v1h-1zM466 233h1v1h-1zM466 223h1v1h-1zM466 213h1v1h-1zM466 203h1v1h-1zM466 193h1v1h-1zM466 183h1v1h-1zM466 173h1v1h-1zM466 163h1v1h-1zM476 723h1v1h-1zM476 713h1v1h-1zM476 703h1v1h-1zM476 693h1v1h-1zM476 683h1v1h-1zM476 673h1v1h-1zM476 663h1v1h-1zM476 653h1v1h-1zM476 643h1v1h-1zM476 633h1v1h-1zM476 623h1v1h-1zM476 613h1v1h-1zM476 603h1v1h-1zM476 593h1v1h-1zM476 583h1v1h-1zM476 573h1v1h-1zM476 563h1v1h-1zM476 553h1v1h-1zM476 543h1v1h-1zM476 533h1v1h-1zM476 523h1v1h-1zM476 513h1v1h-1zM476 503h1v1h-1zM476 493h1v1h-1zM476 483h1v1h-1zM476 473h1v1h-1zM476 463h1v1h-1zM476 453h1v1h-1zM476 443h1v1h-1zM476 433h1v1h-1zM476 423h1v1h-1zM476 413h1v1h-1zM476 403h1v1h-1zM476 393h1v1h-1zM476 383h1v1h-1zM476 373h1v1h-1zM476 363h1v1h-1zM476 353h1v1h-1zM476 343h1v1h-1zM476 333h1v1h-1zM476 323h1v1h-1zM476 313h1v1h-1zM476 303h1v1h-1zM476 293h1v1h-1zM476 283h1v1h-1zM476 273h1v1h-1zM476 263h1v1h-1zM476 253h1v1h-1zM476 243h1v1h-1zM476 233h1v1h-1zM476 223h1v1h-1zM476 213h1v1h-1zM476 203h1v1h-1zM476 193h1v1h-1zM476 183h1v1h-1zM476 173h1v1h-1zM476 163h1v1h-1zM486 723h1v1h-1zM486 713h1v1h-1zM486 703h1v1h-1zM486 693h1v1h-1zM486 683h1v1h-1zM486 673h1v1h-1zM486 663h1v1h-1zM486 653h1v1h-1zM486 643h1v1h-1zM486 633h1v1h-1zM486 623h1v1h-1zM486 613h1v1h-1zM486 603h1v1h-1zM486 593h1v1h-1zM486 583h1v1h-1zM486 573h1v1h-1zM486 563h1v1h-1zM486 553h1v1h-1zM486 543h1v1h-1zM486 533h1v1h-1zM486 523h1v1h-1zM486 513h1v1h-1zM486 503h1v1h-1zM486 493h1v1h-1zM486 483h1v1h-1zM486 473h1v1h-1zM486 463h1v1h-1zM486 453h1v1h-1zM486 443h1v1h-1zM486 433h1v1h-1zM486 423h1v1h-1zM486 413h1v1h-1zM486 403h1v1h-1zM486 393h1v1h-1zM486 383h1v1h-1zM486 373h1v1h-1zM486 363h1v1h-1zM486 353h1v1h-1zM486 343h1v1h-1zM486 333h1v1h-1zM486 323h1v1h-1zM486 313h1v1h-1zM486 303h1v1h-1zM486 293h1v1h-1zM486 283h1v1h-1zM486 273h1v1h-1zM486 263h1v1h-1zM486 253h1v1h-1zM486 243h1v1h-1zM486 233h1v1h-1zM486 223h1v1h-1zM486 213h1v1h-1zM486 203h1v1h-1zM486 193h1v1h-1zM486 183h1v1h-1zM486 173h1v1h-1zM486 163h1v1h-1zM496 723h1v1h-1zM496 713h1v1h-1zM496 703h1v1h-1zM496 693h1v1h-1zM496 683h1v1h-1zM496 673h1v1h-1zM496 663h1v1h-1zM496 653h1v1h-1zM496 643h1v1h-1zM496 633h1v1h-1zM496 623h1v1h-1zM496 613h1v1h-1zM496 603h1v1h-1zM496 593h1v1h-1zM496 583h1v1h-1zM496 573h1v1h-1zM496 563h1v1h-1zM496 553h1v1h-1zM496 543h1v1h-1zM496 533h1v1h-1zM496 523h1v1h-1zM496 513h1v1h-1zM496 503h1v1h-1zM496 493h1v1h-1zM496 483h1v1h-1zM496 473h1v1h-1zM496 463h1v1h-1zM496 453h1v1h-1zM496 443h1v1h-1zM496 433h1v1h-1zM496 423h1v1h-1zM496 413h1v1h-1zM496 403h1v1h-1zM496 393h1v1h-1zM496 383h1v1h-1zM496 373h1v1h-1zM496 363h1v1h-1zM496 353h1v1h-1zM496 343h1v1h-1zM496 333h1v1h-1zM496 323h1v1h-1zM496 313h1v1h-1zM496 303h1v1h-1zM496 293h1v1h-1zM496 283h1v1h-1zM496 273h1v1h-1zM496 263h1v1h-1zM496 253h1v1h-1zM496 243h1v1h-1zM496 233h1v1h-1zM496 223h1v1h-1zM496 213h1v1h-1zM496 203h1v1h-1zM496 193h1v1h-1zM496 183h1v1h-1zM496 173h1v1h-1zM496 163h1v1h-1zM506 723h1v1h-1zM506 713h1v1h-1zM506 703h1v1h-1zM506 693h1v1h-1zM506 683h1v1h-1zM506 673h1v1h-1zM506 663h1v1h-1zM506 653h1v1h-1zM506 643h1v1h-1zM506 633h1v1h-1zM506 623h1v1h-1zM506 613h1v1h-1zM506 603h1v1h-1zM506 593h1v1h-1zM506 583h1v1h-1zM506 573h1v1h-1zM506 563h1v1h-1zM506 553h1v1h-1zM506 543h1v1h-1zM506 533h1v1h-1zM506 523h1v1h-1zM506 513h1v1h-1zM506 503h1v1h-1zM506 493h1v1h-1zM506 483h1v1h-1zM506 473h1v1h-1zM506 463h1v1h-1zM506 453h1v1h-1zM506 443h1v1h-1zM506 433h1v1h-1zM506 423h1v1h-1zM506 413h1v1h-1zM506 403h1v1h-1zM506 393h1v1h-1zM506 383h1v1h-1zM506 373h1v1h-1zM506 363h1v1h-1zM506 353h1v1h-1zM506 343h1v1h-1zM506 333h1v1h-1zM506 323h1v1h-1zM506 313h1v1h-1zM506 303h1v1h-1zM506 293h1v1h-1zM506 283h1v1h-1zM506 273h1v1h-1zM506 263h1v1h-1zM506 253h1v1h-1zM506 243h1v1h-1zM506 233h1v1h-1zM506 223h1v1h-1zM506 213h1v1h-1zM506 203h1v1h-1zM506 193h1v1h-1zM506 183h1v1h-1zM506 173h1v1h-1zM506 163h1v1h-1zM516 723h1v1h-1zM516 713h1v1h-1zM516 703h1v1h-1zM516 693h1v1h-1zM516 683h1v1h-1zM516 673h1v1h-1zM516 663h1v1h-1zM516 653h1v1h-1zM516 643h1v1h-1zM516 633h1v1h-1zM516 623h1v1h-1zM516 613h1v1h-1zM516 603h1v1h-1zM516 593h1v1h-1zM516 583h1v1h-1zM516 573h1v1h-1zM516 563h1v1h-1zM516 553h1v1h-1zM516 543h1v1h-1zM516 533h1v1h-1zM516 523h1v1h-1zM516 513h1v1h-1zM516 503h1v1h-1zM516 493h1v1h-1zM516 483h1v1h-1zM516 473h1v1h-1zM516 463h1v1h-1zM516 453h1v1h-1zM516 443h1v1h-1zM516 433h1v1h-1zM516 423h1v1h-1zM516 413h1v1h-1zM516 403h1v1h-1zM516 393h1v1h-1zM516 383h1v1h-1zM516 373h1v1h-1zM516 363h1v1h-1zM516 353h1v1h-1zM516 343h1v1h-1zM516 333h1v1h-1zM516 323h1v1h-1zM516 313h1v1h-1zM516 303h1v1h-1zM516 293h1v1h-1zM516 283h1v1h-1zM516 273h1v1h-1zM516 263h1v1h-1zM516 253h1v1h-1zM516 243h1v1h-1zM516 233h1v1h-1zM516 223h1v1h-1zM516 213h1v1h-1zM516 203h1v1h-1zM516 193h1v1h-1zM516 183h1v1h-1zM516 173h1v1h-1zM516 163h1v1h-1zM526 723h1v1h-1zM526 713h1v1h-1zM526 703h1v1h-1zM526 693h1v1h-1zM526 683h1v1h-1zM526 673h1v1h-1zM526 663h1v1h-1zM526 653h1v1h-1zM526 643h1v1h-1zM526 633h1v1h-1zM526 623h1v1h-1zM526 613h1v1h-1zM526 603h1v1h-1zM526 593h1v1h-1zM526 583h1v1h-1zM526 573h1v1h-1zM526 563h1v1h-1zM526 553h1v1h-1zM526 543h1v1h-1zM526 533h1v1h-1zM526 523h1v1h-1zM526 513h1v1h-1zM526 503h1v1h-1zM526 493h1v1h-1zM526 483h1v1h-1zM526 473h1v1h-1zM526 463h1v1h-1zM526 453h1v1h-1zM526 443h1v1h-1zM526 433h1v1h-1zM526 423h1v1h-1zM526 413h1v1h-1zM526 403h1v1h-1zM526 393h1v1h-1zM526 383h1v1h-1zM526 373h1v1h-1zM526 363h1v1h-1zM526 353h1v1h-1zM526 343h1v1h-1zM526 333h1v1h-1zM526 323h1v1h-1zM526 313h1v1h-1zM526 303h1v1h-1zM526 293h1v1h-1zM526 283h1v1h-1zM526 273h1v1h-1zM526 263h1v1h-1zM526 253h1v1h-1zM526 243h1v1h-1zM526 233h1v1h-1zM526 223h1v1h-1zM526 213h1v1h-1zM526 203h1v1h-1zM526 193h1v1h-1zM526 183h1v1h-1zM526 173h1v1h-1zM526 163h1v1h-1zM536 723h1v1h-1zM536 713h1v1h-1zM536 703h1v1h-1zM536 693h1v1h-1zM536 683h1v1h-1zM536 673h1v1h-1zM536 663h1v1h-1zM536 653h1v1h-1zM536 643h1v1h-1zM536 633h1v1h-1zM536 623h1v1h-1zM536 613h1v1h-1zM536 603h1v1h-1zM536 593h1v1h-1zM536 583h1v1h-1zM536 573h1v1h-1zM536 563h1v1h-1zM536 553h1v1h-1zM536 543h1v1h-1zM536 533h1v1h-1zM536 523h1v1h-1zM536 513h1v1h-1zM536 503h1v1h-1zM536 493h1v1h-1zM536 483h1v1h-1zM536 473h1v1h-1zM536 463h1v1h-1zM536 453h1v1h-1zM536 443h1v1h-1zM536 433h1v1h-1zM536 423h1v1h-1zM536 413h1v1h-1zM536 403h1v1h-1zM536 393h1v1h-1zM536 383h1v1h-1zM536 373h1v1h-1zM536 363h1v1h-1zM536 353h1v1h-1zM536 343h1v1h-1zM536 333h1v1h-1zM536 323h1v1h-1zM536 313h1v1h-1zM536 303h1v1h-1zM536 293h1v1h-1zM536 283h1v1h-1zM536 273h1v1h-1zM536 263h1v1h-1zM536 253h1v1h-1zM536 243h1v1h-1zM536 233h1v1h-1zM536 223h1v1h-1zM536 213h1v1h-1zM536 203h1v1h-1zM536 193h1v1h-1zM536 183h1v1h-1zM536 173h1v1h-1zM536 163h1v1h-1zM546 723h1v1h-1zM546 713h1v1h-1zM546 703h1v1h-1zM546 693h1v1h-1zM546 683h1v1h-1zM546 673h1v1h-1zM546 663h1v1h-1zM546 653h1v1h-1zM546 643h1v1h-1zM546 633h1v1h-1zM546 623h1v1h-1zM546 613h1v1h-1zM546 603h1v1h-1zM546 593h1v1h-1zM546 583h1v1h-1zM546 573h1v1h-1zM546 563h1v1h-1zM546 553h1v1h-1zM546 543h1v1h-1zM546 533h1v1h-1zM546 523h1v1h-1zM546 513h1v1h-1zM546 503h1v1h-1zM546 493h1v1h-1zM546 483h1v1h-1zM546 473h1v1h-1zM546 463h1v1h-1zM546 453h1v1h-1zM546 443h1v1h-1zM546 433h1v1h-1zM546 423h1v1h-1zM546 413h1v1h-1zM546 403h1v1h-1zM546 393h1v1h-1zM546 383h1v1h-1zM546 373h1v1h-1zM546 363h1v1h-1zM546 353h1v1h-1zM546 343h1v1h-1zM546 333h1v1h-1zM546 323h1v1h-1zM546 313h1v1h-1zM546 303h1v1h-1zM546 293h1v1h-1zM546 283h1v1h-1zM546 273h1v1h-1zM546 263h1v1h-1zM546 253h1v1h-1zM546 243h1v1h-1zM546 233h1v1h-1zM546 223h1v1h-1zM546 213h1v1h-1zM546 203h1v1h-1zM546 193h1v1h-1zM546 183h1v1h-1zM546 173h1v1h-1zM546 163h1v1h-1zM556 723h1v1h-1zM556 713h1v1h-1zM556 703h1v1h-1zM556 693h1v1h-1zM556 683h1v1h-1zM556 673h1v1h-1zM556 663h1v1h-1zM556 653h1v1h-1zM556 643h1v1h-1zM556 633h1v1h-1zM556 623h1v1h-1zM556 613h1v1h-1zM556 603h1v1h-1zM556 593h1v1h-1zM556 583h1v1h-1zM556 573h1v1h-1zM556 563h1v1h-1zM556 553h1v1h-1zM556 543h1v1h-1zM556 533h1v1h-1zM556 523h1v1h-1zM556 513h1v1h-1zM556 503h1v1h-1zM556 493h1v1h-1zM556 483h1v1h-1zM556 473h1v1h-1zM556 463h1v1h-1zM556 453h1v1h-1zM556 443h1v1h-1zM556 433h1v1h-1zM556 423h1v1h-1zM556 413h1v1h-1zM556 403h1v1h-1zM556 393h1v1h-1zM556 383h1v1h-1zM556 373h1v1h-1zM556 363h1v1h-1zM556 353h1v1h-1zM556 343h1v1h-1zM556 333h1v1h-1zM556 323h1v1h-1zM556 313h1v1h-1zM556 303h1v1h-1zM556 293h1v1h-1zM556 283h1v1h-1zM556 273h1v1h-1zM556 263h1v1h-1zM556 253h1v1h-1zM556 243h1v1h-1zM556 233h1v1h-1zM556 223h1v1h-1zM556 213h1v1h-1zM556 203h1v1h-1zM556 193h1v1h-1zM556 183h1v1h-1zM556 173h1v1h-1zM556 163h1v1h-1zM566 723h1v1h-1zM566 713h1v1h-1zM566 703h1v1h-1zM566 693h1v1h-1zM566 683h1v1h-1zM566 673h1v1h-1zM566 663h1v1h-1zM566 653h1v1h-1zM566 643h1v1h-1zM566 633h1v1h-1zM566 623h1v1h-1zM566 613h1v1h-1zM566 603h1v1h-1zM566 593h1v1h-1zM566 583h1v1h-1zM566 573h1v1h-1zM566 563h1v1h-1zM566 553h1v1h-1zM566 543h1v1h-1zM566 533h1v1h-1zM566 523h1v1h-1zM566 513h1v1h-1zM566 503h1v1h-1zM566 493h1v1h-1zM566 483h1v1h-1zM566 473h1v1h-1zM566 463h1v1h-1zM566 453h1v1h-1zM566 443h1v1h-1zM566 433h1v1h-1zM566 423h1v1h-1zM566 413h1v1h-1zM566 403h1v1h-1zM566 393h1v1h-1zM566 383h1v1h-1zM566 373h1v1h-1zM566 363h1v1h-1zM566 353h1v1h-1zM566 343h1v1h-1zM566 333h1v1h-1zM566 323h1v1h-1zM566 313h1v1h-1zM566 303h1v1h-1zM566 293h1v1h-1zM566 283h1v1h-1zM566 273h1v1h-1zM566 263h1v1h-1zM566 253h1v1h-1zM566 243h1v1h-1zM566 233h1v1h-1zM566 223h1v1h-1zM566 213h1v1h-1zM566 203h1v1h-1zM566 193h1v1h-1zM566 183h1v1h-1zM566 173h1v1h-1zM566 163h1v1h-1zM576 723h1v1h-1zM576 713h1v1h-1zM576 703h1v1h-1zM576 693h1v1h-1zM576 683h1v1h-1zM576 673h1v1h-1zM576 663h1v1h-1zM576 653h1v1h-1zM576 643h1v1h-1zM576 633h1v1h-1zM576 623h1v1h-1zM576 613h1v1h-1zM576 603h1v1h-1zM576 593h1v1h-1zM576 583h1v1h-1zM576 573h1v1h-1zM576 563h1v1h-1zM576 553h1v1h-1zM576 543h1v1h-1zM576 533h1v1h-1zM576 523h1v1h-1zM576 513h1v1h-1zM576 503h1v1h-1zM576 493h1v1h-1zM576 483h1v1h-1zM576 473h1v1h-1zM576 463h1v1h-1zM576 453h1v1h-1zM576 443h1v1h-1zM576 433h1v1h-1zM576 423h1v1h-1zM576 413h1v1h-1zM576 403h1v1h-1zM576 393h1v1h-1zM576 383h1v1h-1zM576 373h1v1h-1zM576 363h1v1h-1zM576 353h1v1h-1zM576 343h1v1h-1zM576 333h1v1h-1zM576 323h1v1h-1zM576 313h1v1h-1zM576 303h1v1h-1zM576 293h1v1h-1zM576 283h1v1h-1zM576 273h1v1h-1zM576 263h1v1h-1zM576 253h1v1h-1zM576 243h1v1h-1zM576 233h1v1h-1zM576 223h1v1h-1zM576 213h1v1h-1zM576 203h1v1h-1zM576 193h1v1h-1zM576 183h1v1h-1zM576 173h1v1h-1zM576 163h1v1h-1zM586 723h1v1h-1zM586 713h1v1h-1zM586 703h1v1h-1zM586 693h1v1h-1zM586 683h1v1h-1zM586 673h1v1h-1zM586 663h1v1h-1zM586 653h1v1h-1zM586 643h1v1h-1zM586 633h1v1h-1zM586 623h1v1h-1zM586 613h1v1h-1zM586 603h1v1h-1zM586 593h1v1h-1zM586 583h1v1h-1zM586 573h1v1h-1zM586 563h1v1h-1zM586 553h1v1h-1zM586 543h1v1h-1zM586 533h1v1h-1zM586 523h1v1h-1zM586 513h1v1h-1zM586 503h1v1h-1zM586 493h1v1h-1zM586 483h1v1h-1zM586 473h1v1h-1zM586 463h1v1h-1zM586 453h1v1h-1zM586 443h1v1h-1zM586 433h1v1h-1zM586 423h1v1h-1zM586 413h1v1h-1zM586 403h1v1h-1zM586 393h1v1h-1zM586 383h1v1h-1zM586 373h1v1h-1zM586 363h1v1h-1zM586 353h1v1h-1zM586 343h1v1h-1zM586 333h1v1h-1zM586 323h1v1h-1zM586 313h1v1h-1zM586 303h1v1h-1zM586 293h1v1h-1zM586 283h1v1h-1zM586 273h1v1h-1zM586 263h1v1h-1zM586 253h1v1h-1zM586 243h1v1h-1zM586 233h1v1h-1zM586 223h1v1h-1zM586 213h1v1h-1zM586 203h1v1h-1zM586 193h1v1h-1zM586 183h1v1h-1zM586 173h1v1h-1zM586 163h1v1h-1zM596 723h1v1h-1zM596 713h1v1h-1zM596 703h1v1h-1zM596 693h1v1h-1zM596 683h1v1h-1zM596 673h1v1h-1zM596 663h1v1h-1zM596 653h1v1h-1zM596 643h1v1h-1zM596 633h1v1h-1zM596 623h1v1h-1zM596 613h1v1h-1zM596 603h1v1h-1zM596 593h1v1h-1zM596 583h1v1h-1zM596 573h1v1h-1zM596 563h1v1h-1zM596 553h1v1h-1zM596 543h1v1h-1zM596 533h1v1h-1zM596 523h1v1h-1zM596 513h1v1h-1zM596 503h1v1h-1zM596 493h1v1h-1zM596 483h1v1h-1zM596 473h1v1h-1zM596 463h1v1h-1zM596 453h1v1h-1zM596 443h1v1h-1zM596 433h1v1h-1zM596 423h1v1h-1zM596 413h1v1h-1zM596 403h1v1h-1zM596 393h1v1h-1zM596 383h1v1h-1zM596 373h1v1h-1zM596 363h1v1h-1zM596 353h1v1h-1zM596 343h1v1h-1zM596 333h1v1h-1zM596 323h1v1h-1zM596 313h1v1h-1zM596 303h1v1h-1zM596 293h1v1h-1zM596 283h1v1h-1zM596 273h1v1h-1zM596 263h1v1h-1zM596 253h1v1h-1zM596 243h1v1h-1zM596 233h1v1h-1zM596 223h1v1h-1zM596 213h1v1h-1zM596 203h1v1h-1zM596 193h1v1h-1zM596 183h1v1h-1zM596 173h1v1h-1zM596 163h1v1h-1zM606 723h1v1h-1zM606 713h1v1h-1zM606 703h1v1h-1zM606 693h1v1h-1zM606 683h1v1h-1zM606 673h1v1h-1zM606 663h1v1h-1zM606 653h1v1h-1zM606 643h1v1h-1zM606 633h1v1h-1zM606 623h1v1h-1zM606 613h1v1h-1zM606 603h1v1h-1zM606 593h1v1h-1zM606 583h1v1h-1zM606 573h1v1h-1zM606 563h1v1h-1zM606 553h1v1h-1zM606 543h1v1h-1zM606 533h1v1h-1zM606 523h1v1h-1zM606 513h1v1h-1zM606 503h1v1h-1zM606 493h1v1h-1zM606 483h1v1h-1zM606 473h1v1h-1zM606 463h1v1h-1zM606 453h1v1h-1zM606 443h1v1h-1zM606 433h1v1h-1zM606 423h1v1h-1zM606 413h1v1h-1zM606 403h1v1h-1zM606 393h1v1h-1zM606 383h1v1h-1zM606 373h1v1h-1zM606 363h1v1h-1zM606 353h1v1h-1zM606 343h1v1h-1zM606 333h1v1h-1zM606 323h1v1h-1zM606 313h1v1h-1zM606 303h1v1h-1zM606 293h1v1h-1zM606 283h1v1h-1zM606 273h1v1h-1zM606 263h1v1h-1zM606 253h1v1h-1zM606 243h1v1h-1zM606 233h1v1h-1zM606 223h1v1h-1zM606 213h1v1h-1zM606 203h1v1h-1zM606 193h1v1h-1zM606 183h1v1h-1zM606 173h1v1h-1zM606 163h1v1h-1zM616 723h1v1h-1zM616 713h1v1h-1zM616 703h1v1h-1zM616 693h1v1h-1zM616 683h1v1h-1zM616 673h1v1h-1zM616 663h1v1h-1zM616 653h1v1h-1zM616 643h1v1h-1zM616 633h1v1h-1zM616 623h1v1h-1zM616 613h1v1h-1zM616 603h1v1h-1zM616 593h1v1h-1zM616 583h1v1h-1zM616 573h1v1h-1zM616 563h1v1h-1zM616 553h1v1h-1zM616 543h1v1h-1zM616 533h1v1h-1zM616 523h1v1h-1zM616 513h1v1h-1zM616 503h1v1h-1zM616 493h1v1h-1zM616 483h1v1h-1zM616 473h1v1h-1zM616 463h1v1h-1zM616 453h1v1h-1zM616 443h1v1h-1zM616 433h1v1h-1zM616 423h1v1h-1zM616 413h1v1h-1zM616 403h1v1h-1zM616 393h1v1h-1zM616 383h1v1h-1zM616 373h1v1h-1zM616 363h1v1h-1zM616 353h1v1h-1zM616 343h1v1h-1zM616 333h1v1h-1zM616 323h1v1h-1zM616 313h1v1h-1zM616 303h1v1h-1zM616 293h1v1h-1zM616 283h1v1h-1zM616 273h1v1h-1zM616 263h1v1h-1zM616 253h1v1h-1zM616 243h1v1h-1zM616 233h1v1h-1zM616 223h1v1h-1zM616 213h1v1h-1zM616 203h1v1h-1zM616 193h1v1h-1zM616 183h1v1h-1zM616 173h1v1h-1zM616 163h1v1h-1zM627 723h1v1h-1zM627 713h1v1h-1zM627 703h1v1h-1zM627 693h1v1h-1zM627 683h1v1h-1zM627 673h1v1h-1zM627 663h1v1h-1zM627 653h1v1h-1zM627 643h1v1h-1zM627 633h1v1h-1zM627 623h1v1h-1zM627 613h1v1h-1zM627 603h1v1h-1zM627 593h1v1h-1zM627 583h1v1h-1zM627 573h1v1h-1zM627 563h1v1h-1zM627 553h1v1h-1zM627 543h1v1h-1zM627 533h1v1h-1zM627 523h1v1h-1zM627 513h1v1h-1zM627 503h1v1h-1zM627 493h1v1h-1zM627 483h1v1h-1zM627 473h1v1h-1zM627 463h1v1h-1zM627 453h1v1h-1zM627 443h1v1h-1zM627 433h1v1h-1zM627 423h1v1h-1zM627 413h1v1h-1zM627 403h1v1h-1zM627 393h1v1h-1zM627 383h1v1h-1zM627 373h1v1h-1zM627 363h1v1h-1zM627 353h1v1h-1zM627 343h1v1h-1zM627 333h1v1h-1zM627 323h1v1h-1zM627 313h1v1h-1zM627 303h1v1h-1zM627 293h1v1h-1zM627 283h1v1h-1zM627 273h1v1h-1zM627 263h1v1h-1zM627 253h1v1h-1zM627 243h1v1h-1zM627 233h1v1h-1zM627 223h1v1h-1zM627 213h1v1h-1zM627 203h1v1h-1zM627 193h1v1h-1zM627 183h1v1h-1zM627 173h1v1h-1zM627 163h1v1h-1zM637 723h1v1h-1zM637 713h1v1h-1zM637 703h1v1h-1zM637 693h1v1h-1zM637 683h1v1h-1zM637 673h1v1h-1zM637 663h1v1h-1zM637 653h1v1h-1zM637 643h1v1h-1zM637 633h1v1h-1zM637 623h1v1h-1zM637 613h1v1h-1zM637 603h1v1h-1zM637 593h1v1h-1zM637 583h1v1h-1zM637 573h1v1h-1zM637 563h1v1h-1zM637 553h1v1h-1zM637 543h1v1h-1zM637 533h1v1h-1zM637 523h1v1h-1zM637 513h1v1h-1zM637 503h1v1h-1zM637 493h1v1h-1zM637 483h1v1h-1zM637 473h1v1h-1zM637 463h1v1h-1zM637 453h1v1h-1zM637 443h1v1h-1zM637 433h1v1h-1zM637 423h1v1h-1zM637 413h1v1h-1zM637 403h1v1h-1zM637 393h1v1h-1zM637 383h1v1h-1zM637 373h1v1h-1zM637 363h1v1h-1zM637 353h1v1h-1zM637 343h1v1h-1zM637 333h1v1h-1zM637 323h1v1h-1zM637 313h1v1h-1zM637 303h1v1h-1zM637 293h1v1h-1zM637 283h1v1h-1zM637 273h1v1h-1zM637 263h1v1h-1zM637 253h1v1h-1zM637 243h1v1h-1zM637 233h1v1h-1zM637 223h1v1h-1zM637 213h1v1h-1zM637 203h1v1h-1zM637 193h1v1h-1zM637 183h1v1h-1zM637 173h1v1h-1zM637 163h1v1h-1zM647 723h1v1h-1zM647 713h1v1h-1zM647 703h1v1h-1zM647 693h1v1h-1zM647 683h1v1h-1zM647 673h1v1h-1zM647 663h1v1h-1zM647 653h1v1h-1zM647 643h1v1h-1zM647 633h1v1h-1zM647 623h1v1h-1zM647 613h1v1h-1zM647 603h1v1h-1zM647 593h1v1h-1zM647 583h1v1h-1zM647 573h1v1h-1zM647 563h1v1h-1zM647 553h1v1h-1zM647 543h1v1h-1zM647 533h1v1h-1zM647 523h1v1h-1zM647 513h1v1h-1zM647 503h1v1h-1zM647 493h1v1h-1zM647 483h1v1h-1zM647 473h1v1h-1zM647 463h1v1h-1zM647 453h1v1h-1zM647 443h1v1h-1zM647 433h1v1h-1zM647 423h1v1h-1zM647 413h1v1h-1zM647 403h1v1h-1zM647 393h1v1h-1zM647 383h1v1h-1zM647 373h1v1h-1zM647 363h1v1h-1zM647 353h1v1h-1zM647 343h1v1h-1zM647 333h1v1h-1zM647 323h1v1h-1zM647 313h1v1h-1zM647 303h1v1h-1zM647 293h1v1h-1zM647 283h1v1h-1zM647 273h1v1h-1zM647 263h1v1h-1zM647 253h1v1h-1zM647 243h1v1h-1zM647 233h1v1h-1zM647 223h1v1h-1zM647 213h1v1h-1zM647 203h1v1h-1zM647 193h1v1h-1zM647 183h1v1h-1zM647 173h1v1h-1zM647 163h1v1h-1zM657 723h1v1h-1zM657 713h1v1h-1zM657 703h1v1h-1zM657 693h1v1h-1zM657 683h1v1h-1zM657 673h1v1h-1zM657 663h1v1h-1zM657 653h1v1h-1zM657 643h1v1h-1zM657 633h1v1h-1zM657 623h1v1h-1zM657 613h1v1h-1zM657 603h1v1h-1zM657 593h1v1h-1zM657 583h1v1h-1zM657 573h1v1h-1zM657 563h1v1h-1zM657 553h1v1h-1zM657 543h1v1h-1zM657 533h1v1h-1zM657 523h1v1h-1zM657 513h1v1h-1zM657 503h1v1h-1zM657 493h1v1h-1zM657 483h1v1h-1zM657 473h1v1h-1zM657 463h1v1h-1zM657 453h1v1h-1zM657 443h1v1h-1zM657 433h1v1h-1zM657 423h1v1h-1zM657 413h1v1h-1zM657 403h1v1h-1zM657 393h1v1h-1zM657 383h1v1h-1zM657 373h1v1h-1zM657 363h1v1h-1zM657 353h1v1h-1zM657 343h1v1h-1zM657 333h1v1h-1zM657 323h1v1h-1zM657 313h1v1h-1zM657 303h1v1h-1zM657 293h1v1h-1zM657 283h1v1h-1zM657 273h1v1h-1zM657 263h1v1h-1zM657 253h1v1h-1zM657 243h1v1h-1zM657 233h1v1h-1zM657 223h1v1h-1zM657 213h1v1h-1zM657 203h1v1h-1zM657 193h1v1h-1zM657 183h1v1h-1zM657 173h1v1h-1zM657 163h1v1h-1zM667 723h1v1h-1zM667 713h1v1h-1zM667 703h1v1h-1zM667 693h1v1h-1zM667 683h1v1h-1zM667 673h1v1h-1zM667 663h1v1h-1zM667 653h1v1h-1zM667 643h1v1h-1zM667 633h1v1h-1zM667 623h1v1h-1zM667 613h1v1h-1zM667 603h1v1h-1zM667 593h1v1h-1zM667 583h1v1h-1zM667 573h1v1h-1zM667 563h1v1h-1zM667 553h1v1h-1zM667 543h1v1h-1zM667 533h1v1h-1zM667 523h1v1h-1zM667 513h1v1h-1zM667 503h1v1h-1zM667 493h1v1h-1zM667 483h1v1h-1zM667 473h1v1h-1zM667 463h1v1h-1zM667 453h1v1h-1zM667 443h1v1h-1zM667 433h1v1h-1zM667 423h1v1h-1zM667 413h1v1h-1zM667 403h1v1h-1zM667 393h1v1h-1zM667 383h1v1h-1zM667 373h1v1h-1zM667 363h1v1h-1zM667 353h1v1h-1zM667 343h1v1h-1zM667 333h1v1h-1zM667 323h1v1h-1zM667 313h1v1h-1zM667 303h1v1h-1zM667 293h1v1h-1zM667 283h1v1h-1zM667 273h1v1h-1zM667 263h1v1h-1zM667 253h1v1h-1zM667 243h1v1h-1zM667 233h1v1h-1zM667 223h1v1h-1zM667 213h1v1h-1zM667 203h1v1h-1zM667 193h1v1h-1zM667 183h1v1h-1zM667 173h1v1h-1zM667 163h1v1h-1zM677 723h1v1h-1zM677 713h1v1h-1zM677 703h1v1h-1zM677 693h1v1h-1zM677 683h1v1h-1zM677 673h1v1h-1zM677 663h1v1h-1zM677 653h1v1h-1zM677 643h1v1h-1zM677 633h1v1h-1zM677 623h1v1h-1zM677 613h1v1h-1zM677 603h1v1h-1zM677 593h1v1h-1zM677 583h1v1h-1zM677 573h1v1h-1zM677 563h1v1h-1zM677 553h1v1h-1zM677 543h1v1h-1zM677 533h1v1h-1zM677 523h1v1h-1zM677 513h1v1h-1zM677 503h1v1h-1zM677 493h1v1h-1zM677 483h1v1h-1zM677 473h1v1h-1zM677 463h1v1h-1zM677 453h1v1h-1zM677 443h1v1h-1zM677 433h1v1h-1zM677 423h1v1h-1zM677 413h1v1h-1zM677 403h1v1h-1zM677 393h1v1h-1zM677 383h1v1h-1zM677 373h1v1h-1zM677 363h1v1h-1zM677 353h1v1h-1zM677 343h1v1h-1zM677 333h1v1h-1zM677 323h1v1h-1zM677 313h1v1h-1zM677 303h1v1h-1zM677 293h1v1h-1zM677 283h1v1h-1zM677 273h1v1h-1zM677 263h1v1h-1zM677 253h1v1h-1zM677 243h1v1h-1zM677 233h1v1h-1zM677 223h1v1h-1zM677 213h1v1h-1zM677 203h1v1h-1zM677 193h1v1h-1zM677 183h1v1h-1zM677 173h1v1h-1zM677 163h1v1h-1zM687 723h1v1h-1zM687 713h1v1h-1zM687 703h1v1h-1zM687 693h1v1h-1zM687 683h1v1h-1zM687 673h1v1h-1zM687 663h1v1h-1zM687 653h1v1h-1zM687 643h1v1h-1zM687 633h1v1h-1zM687 623h1v1h-1zM687 613h1v1h-1zM687 603h1v1h-1zM687 593h1v1h-1zM687 583h1v1h-1zM687 573h1v1h-1zM687 563h1v1h-1zM687 553h1v1h-1zM687 543h1v1h-1zM687 533h1v1h-1zM687 523h1v1h-1zM687 513h1v1h-1zM687 503h1v1h-1zM687 493h1v1h-1zM687 483h1v1h-1zM687 473h1v1h-1zM687 463h1v1h-1zM687 453h1v1h-1zM687 443h1v1h-1zM687 433h1v1h-1zM687 423h1v1h-1zM687 413h1v1h-1zM687 403h1v1h-1zM687 393h1v1h-1zM687 383h1v1h-1zM687 373h1v1h-1zM687 363h1v1h-1zM687 353h1v1h-1zM687 343h1v1h-1zM687 333h1v1h-1zM687 323h1v1h-1zM687 313h1v1h-1zM687 303h1v1h-1zM687 293h1v1h-1zM687 283h1v1h-1zM687 273h1v1h-1zM687 263h1v1h-1zM687 253h1v1h-1zM687 243h1v1h-1zM687 233h1v1h-1zM687 223h1v1h-1zM687 213h1v1h-1zM687 203h1v1h-1zM687 193h1v1h-1zM687 183h1v1h-1zM687 173h1v1h-1zM687 163h1v1h-1zM697 723h1v1h-1zM697 713h1v1h-1zM697 703h1v1h-1zM697 693h1v1h-1zM697 683h1v1h-1zM697 673h1v1h-1zM697 663h1v1h-1zM697 653h1v1h-1zM697 643h1v1h-1zM697 633h1v1h-1zM697 623h1v1h-1zM697 613h1v1h-1zM697 603h1v1h-1zM697 593h1v1h-1zM697 583h1v1h-1zM697 573h1v1h-1zM697 563h1v1h-1zM697 553h1v1h-1zM697 543h1v1h-1zM697 533h1v1h-1zM697 523h1v1h-1zM697 513h1v1h-1zM697 503h1v1h-1zM697 493h1v1h-1zM697 483h1v1h-1zM697 473h1v1h-1zM697 463h1v1h-1zM697 453h1v1h-1zM697 443h1v1h-1zM697 433h1v1h-1zM697 423h1v1h-1zM697 413h1v1h-1zM697 403h1v1h-1zM697 393h1v1h-1zM697 383h1v1h-1zM697 373h1v1h-1zM697 363h1v1h-1zM697 353h1v1h-1zM697 343h1v1h-1zM697 333h1v1h-1zM697 323h1v1h-1zM697 313h1v1h-1zM697 303h1v1h-1zM697 293h1v1h-1zM697 283h1v1h-1zM697 273h1v1h-1zM697 263h1v1h-1zM697 253h1v1h-1zM697 243h1v1h-1zM697 233h1v1h-1zM697 223h1v1h-1zM697 213h1v1h-1zM697 203h1v1h-1zM697 193h1v1h-1zM697 183h1v1h-1zM697 173h1v1h-1zM697 163h1v1h-1zM707 723h1v1h-1zM707 713h1v1h-1zM707 703h1v1h-1zM707 693h1v1h-1zM707 683h1v1h-1zM707 673h1v1h-1zM707 663h1v1h-1zM707 653h1v1h-1zM707 643h1v1h-1zM707 633h1v1h-1zM707 623h1v1h-1zM707 613h1v1h-1zM707 603h1v1h-1zM707 593h1v1h-1zM707 583h1v1h-1zM707 573h1v1h-1zM707 563h1v1h-1zM707 553h1v1h-1zM707 543h1v1h-1zM707 533h1v1h-1zM707 523h1v1h-1zM707 513h1v1h-1zM707 503h1v1h-1zM707 493h1v1h-1zM707 483h1v1h-1zM707 473h1v1h-1zM707 463h1v1h-1zM707 453h1v1h-1zM707 443h1v1h-1zM707 433h1v1h-1zM707 423h1v1h-1zM707 413h1v1h-1zM707 403h1v1h-1zM707 393h1v1h-1zM707 383h1v1h-1zM707 373h1v1h-1zM707 363h1v1h-1zM707 353h1v1h-1zM707 343h1v1h-1zM707 333h1v1h-1zM707 323h1v1h-1zM707 313h1v1h-1zM707 303h1v1h-1zM707 293h1v1h-1zM707 283h1v1h-1zM707 273h1v1h-1zM707 263h1v1h-1zM707 253h1v1h-1zM707 243h1v1h-1zM707 233h1v1h-1zM707 223h1v1h-1zM707 213h1v1h-1zM707 203h1v1h-1zM707 193h1v1h-1zM707 183h1v1h-1zM707 173h1v1h-1zM707 163h1v1h-1zM717 723h1v1h-1zM717 713h1v1h-1zM717 703h1v1h-1zM717 693h1v1h-1zM717 683h1v1h-1zM717 673h1v1h-1zM717 663h1v1h-1zM717 653h1v1h-1zM717 643h1v1h-1zM717 633h1v1h-1zM717 623h1v1h-1zM717 613h1v1h-1zM717 603h1v1h-1zM717 593h1v1h-1zM717 583h1v1h-1zM717 573h1v1h-1zM717 563h1v1h-1zM717 553h1v1h-1zM717 543h1v1h-1zM717 533h1v1h-1zM717 523h1v1h-1zM717 513h1v1h-1zM717 503h1v1h-1zM717 493h1v1h-1zM717 483h1v1h-1zM717 473h1v1h-1zM717 463h1v1h-1zM717 453h1v1h-1zM717 443h1v1h-1zM717 433h1v1h-1zM717 423h1v1h-1zM717 413h1v1h-1zM717 403h1v1h-1zM717 393h1v1h-1zM717 383h1v1h-1zM717 373h1v1h-1zM717 363h1v1h-1zM717 353h1v1h-1zM717 343h1v1h-1zM717 333h1v1h-1zM717 323h1v1h-1zM717 313h1v1h-1zM717 303h1v1h-1zM717 293h1v1h-1zM717 283h1v1h-1zM717 273h1v1h-1zM717 263h1v1h-1zM717 253h1v1h-1zM717 243h1v1h-1zM717 233h1v1h-1zM717 223h1v1h-1zM717 213h1v1h-1zM717 203h1v1h-1zM717 193h1v1h-1zM717 183h1v1h-1zM717 173h1v1h-1zM717 163h1v1h-1zM727 723h1v1h-1zM727 713h1v1h-1zM727 703h1v1h-1zM727 693h1v1h-1zM727 683h1v1h-1zM727 673h1v1h-1zM727 663h1v1h-1zM727 653h1v1h-1zM727 643h1v1h-1zM727 633h1v1h-1zM727 623h1v1h-1zM727 613h1v1h-1zM727 603h1v1h-1zM727 593h1v1h-1zM727 583h1v1h-1zM727 573h1v1h-1zM727 563h1v1h-1zM727 553h1v1h-1zM727 543h1v1h-1zM727 533h1v1h-1zM727 523h1v1h-1zM727 513h1v1h-1zM727 503h1v1h-1zM727 493h1v1h-1zM727 483h1v1h-1zM727 473h1v1h-1zM727 463h1v1h-1zM727 453h1v1h-1zM727 443h1v1h-1zM727 433h1v1h-1zM727 423h1v1h-1zM727 413h1v1h-1zM727 403h1v1h-1zM727 393h1v1h-1zM727 383h1v1h-1zM727 373h1v1h-1zM727 363h1v1h-1zM727 353h1v1h-1zM727 343h1v1h-1zM727 333h1v1h-1zM727 323h1v1h-1zM727 313h1v1h-1zM727 303h1v1h-1zM727 293h1v1h-1zM727 283h1v1h-1zM727 273h1v1h-1zM727 263h1v1h-1zM727 253h1v1h-1zM727 243h1v1h-1zM727 233h1v1h-1zM727 223h1v1h-1zM727 213h1v1h-1zM727 203h1v1h-1zM727 193h1v1h-1zM727 183h1v1h-1zM727 173h1v1h-1zM727 163h1v1h-1zM737 723h1v1h-1zM737 713h1v1h-1zM737 703h1v1h-1zM737 693h1v1h-1zM737 683h1v1h-1zM737 673h1v1h-1zM737 663h1v1h-1zM737 653h1v1h-1zM737 643h1v1h-1zM737 633h1v1h-1zM737 623h1v1h-1zM737 613h1v1h-1zM737 603h1v1h-1zM737 593h1v1h-1zM737 583h1v1h-1zM737 573h1v1h-1zM737 563h1v1h-1zM737 553h1v1h-1zM737 543h1v1h-1zM737 533h1v1h-1zM737 523h1v1h-1zM737 513h1v1h-1zM737 503h1v1h-1zM737 493h1v1h-1zM737 483h1v1h-1zM737 473h1v1h-1zM737 463h1v1h-1zM737 453h1v1h-1zM737 443h1v1h-1zM737 433h1v1h-1zM737 423h1v1h-1zM737 413h1v1h-1zM737 403h1v1h-1zM737 393h1v1h-1zM737 383h1v1h-1zM737 373h1v1h-1zM737 363h1v1h-1zM737 353h1v1h-1zM737 343h1v1h-1zM737 333h1v1h-1zM737 323h1v1h-1zM737 313h1v1h-1zM737 303h1v1h-1zM737 293h1v1h-1zM737 283h1v1h-1zM737 273h1v1h-1zM737 263h1v1h-1zM737 253h1v1h-1zM737 243h1v1h-1zM737 233h1v1h-1zM737 223h1v1h-1zM737 213h1v1h-1zM737 203h1v1h-1zM737 193h1v1h-1zM737 183h1v1h-1zM737 173h1v1h-1zM737 163h1v1h-1zM747 723h1v1h-1zM747 713h1v1h-1zM747 703h1v1h-1zM747 693h1v1h-1zM747 683h1v1h-1zM747 673h1v1h-1zM747 663h1v1h-1zM747 653h1v1h-1zM747 643h1v1h-1zM747 633h1v1h-1zM747 623h1v1h-1zM747 613h1v1h-1zM747 603h1v1h-1zM747 593h1v1h-1zM747 583h1v1h-1zM747 573h1v1h-1zM747 563h1v1h-1zM747 553h1v1h-1zM747 543h1v1h-1zM747 533h1v1h-1zM747 523h1v1h-1zM747 513h1v1h-1zM747 503h1v1h-1zM747 493h1v1h-1zM747 483h1v1h-1zM747 473h1v1h-1zM747 463h1v1h-1zM747 453h1v1h-1zM747 443h1v1h-1zM747 433h1v1h-1zM747 423h1v1h-1zM747 413h1v1h-1zM747 403h1v1h-1zM747 393h1v1h-1zM747 383h1v1h-1zM747 373h1v1h-1zM747 363h1v1h-1zM747 353h1v1h-1zM747 343h1v1h-1zM747 333h1v1h-1zM747 323h1v1h-1zM747 313h1v1h-1zM747 303h1v1h-1zM747 293h1v1h-1zM747 283h1v1h-1zM747 273h1v1h-1zM747 263h1v1h-1zM747 253h1v1h-1zM747 243h1v1h-1zM747 233h1v1h-1zM747 223h1v1h-1zM747 213h1v1h-1zM747 203h1v1h-1zM747 193h1v1h-1zM747 183h1v1h-1zM747 173h1v1h-1zM747 163h1v1h-1zM757 723h1v1h-1zM757 713h1v1h-1zM757 703h1v1h-1zM757 693h1v1h-1zM757 683h1v1h-1zM757 673h1v1h-1zM757 663h1v1h-1zM757 653h1v1h-1zM757 643h1v1h-1zM757 633h1v1h-1zM757 623h1v1h-1zM757 613h1v1h-1zM757 603h1v1h-1zM757 593h1v1h-1zM757 583h1v1h-1zM757 573h1v1h-1zM757 563h1v1h-1zM757 553h1v1h-1zM757 543h1v1h-1zM757 533h1v1h-1zM757 523h1v1h-1zM757 513h1v1h-1zM757 503h1v1h-1zM757 493h1v1h-1zM757 483h1v1h-1zM757 473h1v1h-1zM757 463h1v1h-1zM757 453h1v1h-1zM757 443h1v1h-1zM757 433h1v1h-1zM757 423h1v1h-1zM757 413h1v1h-1zM757 403h1v1h-1zM757 393h1v1h-1zM757 383h1v1h-1zM757 373h1v1h-1zM757 363h1v1h-1zM757 353h1v1h-1zM757 343h1v1h-1zM757 333h1v1h-1zM757 323h1v1h-1zM757 313h1v1h-1zM757 303h1v1h-1zM757 293h1v1h-1zM757 283h1v1h-1zM757 273h1v1h-1zM757 263h1v1h-1zM757 253h1v1h-1zM757 243h1v1h-1zM757 233h1v1h-1zM757 223h1v1h-1zM757 213h1v1h-1zM757 203h1v1h-1zM757 193h1v1h-1zM757 183h1v1h-1zM757 173h1v1h-1zM757 163h1v1h-1zM767 723h1v1h-1zM767 713h1v1h-1zM767 703h1v1h-1zM767 693h1v1h-1zM767 683h1v1h-1zM767 673h1v1h-1zM767 663h1v1h-1zM767 653h1v1h-1zM767 643h1v1h-1zM767 633h1v1h-1zM767 623h1v1h-1zM767 613h1v1h-1zM767 603h1v1h-1zM767 593h1v1h-1zM767 583h1v1h-1zM767 573h1v1h-1zM767 563h1v1h-1zM767 553h1v1h-1zM767 543h1v1h-1zM767 533h1v1h-1zM767 523h1v1h-1zM767 513h1v1h-1zM767 503h1v1h-1zM767 493h1v1h-1zM767 483h1v1h-1zM767 473h1v1h-1zM767 463h1v1h-1zM767 453h1v1h-1zM767 443h1v1h-1zM767 433h1v1h-1zM767 423h1v1h-1zM767 413h1v1h-1zM767 403h1v1h-1zM767 393h1v1h-1zM767 383h1v1h-1zM767 373h1v1h-1zM767 363h1v1h-1zM767 353h1v1h-1zM767 343h1v1h-1zM767 333h1v1h-1zM767 323h1v1h-1zM767 313h1v1h-1zM767 303h1v1h-1zM767 293h1v1h-1zM767 283h1v1h-1zM767 273h1v1h-1zM767 263h1v1h-1zM767 253h1v1h-1zM767 243h1v1h-1zM767 233h1v1h-1zM767 223h1v1h-1zM767 213h1v1h-1zM767 203h1v1h-1zM767 193h1v1h-1zM767 183h1v1h-1zM767 173h1v1h-1zM767 163h1v1h-1zM777 723h1v1h-1zM777 713h1v1h-1zM777 703h1v1h-1zM777 693h1v1h-1zM777 683h1v1h-1zM777 673h1v1h-1zM777 663h1v1h-1zM777 653h1v1h-1zM777 643h1v1h-1zM777 633h1v1h-1zM777 623h1v1h-1zM777 613h1v1h-1zM777 603h1v1h-1zM777 593h1v1h-1zM777 583h1v1h-1zM777 573h1v1h-1zM777 563h1v1h-1zM777 553h1v1h-1zM777 543h1v1h-1zM777 533h1v1h-1zM777 523h1v1h-1zM777 513h1v1h-1zM777 503h1v1h-1zM777 493h1v1h-1zM777 483h1v1h-1zM777 473h1v1h-1zM777 463h1v1h-1zM777 453h1v1h-1zM777 443h1v1h-1zM777 433h1v1h-1zM777 423h1v1h-1zM777 413h1v1h-1zM777 403h1v1h-1zM777 393h1v1h-1zM777 383h1v1h-1zM777 373h1v1h-1zM777 363h1v1h-1zM777 353h1v1h-1zM777 343h1v1h-1zM777 333h1v1h-1zM777 323h1v1h-1zM777 313h1v1h-1zM777 303h1v1h-1zM777 293h1v1h-1zM777 283h1v1h-1zM777 273h1v1h-1zM777 263h1v1h-1zM777 253h1v1h-1zM777 243h1v1h-1zM777 233h1v1h-1zM777 223h1v1h-1zM777 213h1v1h-1zM777 203h1v1h-1zM777 193h1v1h-1zM777 183h1v1h-1zM777 173h1v1h-1zM777 163h1v1h-1zM787 723h1v1h-1zM787 713h1v1h-1zM787 703h1v1h-1zM787 693h1v1h-1zM787 683h1v1h-1zM787 673h1v1h-1zM787 663h1v1h-1zM787 653h1v1h-1zM787 643h1v1h-1zM787 633h1v1h-1zM787 623h1v1h-1zM787 613h1v1h-1zM787 603h1v1h-1zM787 593h1v1h-1zM787 583h1v1h-1zM787 573h1v1h-1zM787 563h1v1h-1zM787 553h1v1h-1zM787 543h1v1h-1zM787 533h1v1h-1zM787 523h1v1h-1zM787 513h1v1h-1zM787 503h1v1h-1zM787 493h1v1h-1zM787 483h1v1h-1zM787 473h1v1h-1zM787 463h1v1h-1zM787 453h1v1h-1zM787 443h1v1h-1zM787 433h1v1h-1zM787 423h1v1h-1zM787 413h1v1h-1zM787 403h1v1h-1zM787 393h1v1h-1zM787 383h1v1h-1zM787 373h1v1h-1zM787 363h1v1h-1zM787 353h1v1h-1zM787 343h1v1h-1zM787 333h1v1h-1zM787 323h1v1h-1zM787 313h1v1h-1zM787 303h1v1h-1zM787 293h1v1h-1zM787 283h1v1h-1zM787 273h1v1h-1zM787 263h1v1h-1zM787 253h1v1h-1zM787 243h1v1h-1zM787 233h1v1h-1zM787 223h1v1h-1zM787 213h1v1h-1zM787 203h1v1h-1zM787 193h1v1h-1zM787 183h1v1h-1zM787 173h1v1h-1zM787 163h1v1h-1zM797 723h1v1h-1zM797 713h1v1h-1zM797 703h1v1h-1zM797 693h1v1h-1zM797 683h1v1h-1zM797 673h1v1h-1zM797 663h1v1h-1zM797 653h1v1h-1zM797 643h1v1h-1zM797 633h1v1h-1zM797 623h1v1h-1zM797 613h1v1h-1zM797 603h1v1h-1zM797 593h1v1h-1zM797 583h1v1h-1zM797 573h1v1h-1zM797 563h1v1h-1zM797 553h1v1h-1zM797 543h1v1h-1zM797 533h1v1h-1zM797 523h1v1h-1zM797 513h1v1h-1zM797 503h1v1h-1zM797 493h1v1h-1zM797 483h1v1h-1zM797 473h1v1h-1zM797 463h1v1h-1zM797 453h1v1h-1zM797 443h1v1h-1zM797 433h1v1h-1zM797 423h1v1h-1zM797 413h1v1h-1zM797 403h1v1h-1zM797 393h1v1h-1zM797 383h1v1h-1zM797 373h1v1h-1zM797 363h1v1h-1zM797 353h1v1h-1zM797 343h1v1h-1zM797 333h1v1h-1zM797 323h1v1h-1zM797 313h1v1h-1zM797 303h1v1h-1zM797 293h1v1h-1zM797 283h1v1h-1zM797 273h1v1h-1zM797 263h1v1h-1zM797 253h1v1h-1zM797 243h1v1h-1zM797 233h1v1h-1zM797 223h1v1h-1zM797 213h1v1h-1zM797 203h1v1h-1zM797 193h1v1h-1zM797 183h1v1h-1zM797 173h1v1h-1zM797 163h1v1h-1zM807 723h1v1h-1zM807 713h1v1h-1zM807 703h1v1h-1zM807 693h1v1h-1zM807 683h1v1h-1zM807 673h1v1h-1zM807 663h1v1h-1zM807 653h1v1h-1zM807 643h1v1h-1zM807 633h1v1h-1zM807 623h1v1h-1zM807 613h1v1h-1zM807 603h1v1h-1zM807 593h1v1h-1zM807 583h1v1h-1zM807 573h1v1h-1zM807 563h1v1h-1zM807 553h1v1h-1zM807 543h1v1h-1zM807 533h1v1h-1zM807 523h1v1h-1zM807 513h1v1h-1zM807 503h1v1h-1zM807 493h1v1h-1zM807 483h1v1h-1zM807 473h1v1h-1zM807 463h1v1h-1zM807 453h1v1h-1zM807 443h1v1h-1zM807 433h1v1h-1zM807 423h1v1h-1zM807 413h1v1h-1zM807 403h1v1h-1zM807 393h1v1h-1zM807 383h1v1h-1zM807 373h1v1h-1zM807 363h1v1h-1zM807 353h1v1h-1zM807 343h1v1h-1zM807 333h1v1h-1zM807 323h1v1h-1zM807 313h1v1h-1zM807 303h1v1h-1zM807 293h1v1h-1zM807 283h1v1h-1zM807 273h1v1h-1zM807 263h1v1h-1zM807 253h1v1h-1zM807 243h1v1h-1zM807 233h1v1h-1zM807 223h1v1h-1zM807 213h1v1h-1zM807 203h1v1h-1zM807 193h1v1h-1zM807 183h1v1h-1zM807 173h1v1h-1zM807 163h1v1h-1zM817 723h1v1h-1zM817 713h1v1h-1zM817 703h1v1h-1zM817 693h1v1h-1zM817 683h1v1h-1zM817 673h1v1h-1zM817 663h1v1h-1zM817 653h1v1h-1zM817 643h1v1h-1zM817 633h1v1h-1zM817 623h1v1h-1zM817 613h1v1h-1zM817 603h1v1h-1zM817 593h1v1h-1zM817 583h1v1h-1zM817 573h1v1h-1zM817 563h1v1h-1zM817 553h1v1h-1zM817 543h1v1h-1zM817 533h1v1h-1zM817 523h1v1h-1zM817 513h1v1h-1zM817 503h1v1h-1zM817 493h1v1h-1zM817 483h1v1h-1zM817 473h1v1h-1zM817 463h1v1h-1zM817 453h1v1h-1zM817 443h1v1h-1zM817 433h1v1h-1zM817 423h1v1h-1zM817 413h1v1h-1zM817 403h1v1h-1zM817 393h1v1h-1zM817 383h1v1h-1zM817 373h1v1h-1zM817 363h1v1h-1zM817 353h1v1h-1zM817 343h1v1h-1zM817 333h1v1h-1zM817 323h1v1h-1zM817 313h1v1h-1zM817 303h1v1h-1zM817 293h1v1h-1zM817 283h1v1h-1zM817 273h1v1h-1zM817 263h1v1h-1zM817 253h1v1h-1zM817 243h1v1h-1zM817 233h1v1h-1zM817 223h1v1h-1zM817 213h1v1h-1zM817 203h1v1h-1zM817 193h1v1h-1zM817 183h1v1h-1zM817 173h1v1h-1zM817 163h1v1h-1zM827 723h1v1h-1zM827 713h1v1h-1zM827 703h1v1h-1zM827 693h1v1h-1zM827 683h1v1h-1zM827 673h1v1h-1zM827 663h1v1h-1zM827 653h1v1h-1zM827 643h1v1h-1zM827 633h1v1h-1zM827 623h1v1h-1zM827 613h1v1h-1zM827 603h1v1h-1zM827 593h1v1h-1zM827 583h1v1h-1zM827 573h1v1h-1zM827 563h1v1h-1zM827 553h1v1h-1zM827 543h1v1h-1zM827 533h1v1h-1zM827 523h1v1h-1zM827 513h1v1h-1zM827 503h1v1h-1zM827 493h1v1h-1zM827 483h1v1h-1zM827 473h1v1h-1zM827 463h1v1h-1zM827 453h1v1h-1zM827 443h1v1h-1zM827 433h1v1h-1zM827 423h1v1h-1zM827 413h1v1h-1zM827 403h1v1h-1zM827 393h1v1h-1zM827 383h1v1h-1zM827 373h1v1h-1zM827 363h1v1h-1zM827 353h1v1h-1zM827 343h1v1h-1zM827 333h1v1h-1zM827 323h1v1h-1zM827 313h1v1h-1zM827 303h1v1h-1zM827 293h1v1h-1zM827 283h1v1h-1zM827 273h1v1h-1zM827 263h1v1h-1zM827 253h1v1h-1zM827 243h1v1h-1zM827 233h1v1h-1zM827 223h1v1h-1zM827 213h1v1h-1zM827 203h1v1h-1zM827 193h1v1h-1zM827 183h1v1h-1zM827 173h1v1h-1zM827 163h1v1h-1zM837 723h1v1h-1zM837 713h1v1h-1zM837 703h1v1h-1zM837 693h1v1h-1zM837 683h1v1h-1zM837 673h1v1h-1zM837 663h1v1h-1zM837 653h1v1h-1zM837 643h1v1h-1zM837 633h1v1h-1zM837 623h1v1h-1zM837 613h1v1h-1zM837 603h1v1h-1zM837 593h1v1h-1zM837 583h1v1h-1zM837 573h1v1h-1zM837 563h1v1h-1zM837 553h1v1h-1zM837 543h1v1h-1zM837 533h1v1h-1zM837 523h1v1h-1zM837 513h1v1h-1zM837 503h1v1h-1zM837 493h1v1h-1zM837 483h1v1h-1zM837 473h1v1h-1zM837 463h1v1h-1zM837 453h1v1h-1zM837 443h1v1h-1zM837 433h1v1h-1zM837 423h1v1h-1zM837 413h1v1h-1zM837 403h1v1h-1zM837 393h1v1h-1zM837 383h1v1h-1zM837 373h1v1h-1zM837 363h1v1h-1zM837 353h1v1h-1zM837 343h1v1h-1zM837 333h1v1h-1zM837 323h1v1h-1zM837 313h1v1h-1zM837 303h1v1h-1zM837 293h1v1h-1zM837 283h1v1h-1zM837 273h1v1h-1zM837 263h1v1h-1zM837 253h1v1h-1zM837 243h1v1h-1zM837 233h1v1h-1zM837 223h1v1h-1zM837 213h1v1h-1zM837 203h1v1h-1zM837 193h1v1h-1zM837 183h1v1h-1zM837 173h1v1h-1zM837 163h1v1h-1zM847 723h1v1h-1zM847 713h1v1h-1zM847 703h1v1h-1zM847 693h1v1h-1zM847 683h1v1h-1zM847 673h1v1h-1zM847 663h1v1h-1zM847 653h1v1h-1zM847 643h1v1h-1zM847 633h1v1h-1zM847 623h1v1h-1zM847 613h1v1h-1zM847 603h1v1h-1zM847 593h1v1h-1zM847 583h1v1h-1zM847 573h1v1h-1zM847 563h1v1h-1zM847 553h1v1h-1zM847 543h1v1h-1zM847 533h1v1h-1zM847 523h1v1h-1zM847 513h1v1h-1zM847 503h1v1h-1zM847 493h1v1h-1zM847 483h1v1h-1zM847 473h1v1h-1zM847 463h1v1h-1zM847 453h1v1h-1zM847 443h1v1h-1zM847 433h1v1h-1zM847 423h1v1h-1zM847 413h1v1h-1zM847 403h1v1h-1zM847 393h1v1h-1zM847 383h1v1h-1zM847 373h1v1h-1zM847 363h1v1h-1zM847 353h1v1h-1zM847 343h1v1h-1zM847 333h1v1h-1zM847 323h1v1h-1zM847 313h1v1h-1zM847 303h1v1h-1zM847 293h1v1h-1zM847 283h1v1h-1zM847 273h1v1h-1zM847 263h1v1h-1zM847 253h1v1h-1zM847 243h1v1h-1zM847 233h1v1h-1zM847 223h1v1h-1zM847 213h1v1h-1zM847 203h1v1h-1zM847 193h1v1h-1zM847 183h1v1h-1zM847 173h1v1h-1zM847 163h1v1h-1zM857 723h1v1h-1zM857 713h1v1h-1zM857 703h1v1h-1zM857 693h1v1h-1zM857 683h1v1h-1zM857 673h1v1h-1zM857 663h1v1h-1zM857 653h1v1h-1zM857 643h1v1h-1zM857 633h1v1h-1zM857 623h1v1h-1zM857 613h1v1h-1zM857 603h1v1h-1zM857 593h1v1h-1zM857 583h1v1h-1zM857 573h1v1h-1zM857 563h1v1h-1zM857 553h1v1h-1zM857 543h1v1h-1zM857 533h1v1h-1zM857 523h1v1h-1zM857 513h1v1h-1zM857 503h1v1h-1zM857 493h1v1h-1zM857 483h1v1h-1zM857 473h1v1h-1zM857 463h1v1h-1zM857 453h1v1h-1zM857 443h1v1h-1zM857 433h1v1h-1zM857 423h1v1h-1zM857 413h1v1h-1zM857 403h1v1h-1zM857 393h1v1h-1zM857 383h1v1h-1zM857 373h1v1h-1zM857 363h1v1h-1zM857 353h1v1h-1zM857 343h1v1h-1zM857 333h1v1h-1zM857 323h1v1h-1zM857 313h1v1h-1zM857 303h1v1h-1zM857 293h1v1h-1zM857 283h1v1h-1zM857 273h1v1h-1zM857 263h1v1h-1zM857 253h1v1h-1zM857 243h1v1h-1zM857 233h1v1h-1zM857 223h1v1h-1zM857 213h1v1h-1zM857 203h1v1h-1zM857 193h1v1h-1zM857 183h1v1h-1zM857 173h1v1h-1zM857 163h1v1h-1zM867 723h1v1h-1zM867 713h1v1h-1zM867 703h1v1h-1zM867 693h1v1h-1zM867 683h1v1h-1zM867 673h1v1h-1zM867 663h1v1h-1zM867 653h1v1h-1zM867 643h1v1h-1zM867 633h1v1h-1zM867 623h1v1h-1zM867 613h1v1h-1zM867 603h1v1h-1zM867 593h1v1h-1zM867 583h1v1h-1zM867 573h1v1h-1zM867 563h1v1h-1zM867 553h1v1h-1zM867 543h1v1h-1zM867 533h1v1h-1zM867 523h1v1h-1zM867 513h1v1h-1zM867 503h1v1h-1zM867 493h1v1h-1zM867 483h1v1h-1zM867 473h1v1h-1zM867 463h1v1h-1zM867 453h1v1h-1zM867 443h1v1h-1zM867 433h1v1h-1zM867 423h1v1h-1zM867 413h1v1h-1zM867 403h1v1h-1zM867 393h1v1h-1zM867 383h1v1h-1zM867 373h1v1h-1zM867 363h1v1h-1zM867 353h1v1h-1zM867 343h1v1h-1zM867 333h1v1h-1zM867 323h1v1h-1zM867 313h1v1h-1zM867 303h1v1h-1zM867 293h1v1h-1zM867 283h1v1h-1zM867 273h1v1h-1zM867 263h1v1h-1zM867 253h1v1h-1zM867 243h1v1h-1zM867 233h1v1h-1zM867 223h1v1h-1zM867 213h1v1h-1zM867 203h1v1h-1zM867 193h1v1h-1zM867 183h1v1h-1zM867 173h1v1h-1zM867 163h1v1h-1zM877 723h1v1h-1zM877 713h1v1h-1zM877 703h1v1h-1zM877 693h1v1h-1zM877 683h1v1h-1zM877 673h1v1h-1zM877 663h1v1h-1zM877 653h1v1h-1zM877 643h1v1h-1zM877 633h1v1h-1zM877 623h1v1h-1zM877 613h1v1h-1zM877 603h1v1h-1zM877 593h1v1h-1zM877 583h1v1h-1zM877 573h1v1h-1zM877 563h1v1h-1zM877 553h1v1h-1zM877 543h1v1h-1zM877 533h1v1h-1zM877 523h1v1h-1zM877 513h1v1h-1zM877 503h1v1h-1zM877 493h1v1h-1zM877 483h1v1h-1zM877 473h1v1h-1zM877 463h1v1h-1zM877 453h1v1h-1zM877 443h1v1h-1zM877 433h1v1h-1zM877 423h1v1h-1zM877 413h1v1h-1zM877 403h1v1h-1zM877 393h1v1h-1zM877 383h1v1h-1zM877 373h1v1h-1zM877 363h1v1h-1zM877 353h1v1h-1zM877 343h1v1h-1zM877 333h1v1h-1zM877 323h1v1h-1zM877 313h1v1h-1zM877 303h1v1h-1zM877 293h1v1h-1zM877 283h1v1h-1zM877 273h1v1h-1zM877 263h1v1h-1zM877 253h1v1h-1zM877 243h1v1h-1zM877 233h1v1h-1zM877 223h1v1h-1zM877 213h1v1h-1zM877 203h1v1h-1zM877 193h1v1h-1zM877 183h1v1h-1zM877 173h1v1h-1zM877 163h1v1h-1zM887 723h1v1h-1zM887 713h1v1h-1zM887 703h1v1h-1zM887 693h1v1h-1zM887 683h1v1h-1zM887 673h1v1h-1zM887 663h1v1h-1zM887 653h1v1h-1zM887 643h1v1h-1zM887 633h1v1h-1zM887 623h1v1h-1zM887 613h1v1h-1zM887 603h1v1h-1zM887 593h1v1h-1zM887 583h1v1h-1zM887 573h1v1h-1zM887 563h1v1h-1zM887 553h1v1h-1zM887 543h1v1h-1zM887 533h1v1h-1zM887 523h1v1h-1zM887 513h1v1h-1zM887 503h1v1h-1zM887 493h1v1h-1zM887 483h1v1h-1zM887 473h1v1h-1zM887 463h1v1h-1zM887 453h1v1h-1zM887 443h1v1h-1zM887 433h1v1h-1zM887 423h1v1h-1zM887 413h1v1h-1zM887 403h1v1h-1zM887 393h1v1h-1zM887 383h1v1h-1zM887 373h1v1h-1zM887 363h1v1h-1zM887 353h1v1h-1zM887 343h1v1h-1zM887 333h1v1h-1zM887 323h1v1h-1zM887 313h1v1h-1zM887 303h1v1h-1zM887 293h1v1h-1zM887 283h1v1h-1zM887 273h1v1h-1zM887 263h1v1h-1zM887 253h1v1h-1zM887 243h1v1h-1zM887 233h1v1h-1zM887 223h1v1h-1zM887 213h1v1h-1zM887 203h1v1h-1zM887 193h1v1h-1zM887 183h1v1h-1zM887 173h1v1h-1zM887 163h1v1h-1zM897 723h1v1h-1zM897 713h1v1h-1zM897 703h1v1h-1zM897 693h1v1h-1zM897 683h1v1h-1zM897 673h1v1h-1zM897 663h1v1h-1zM897 653h1v1h-1zM897 643h1v1h-1zM897 633h1v1h-1zM897 623h1v1h-1zM897 613h1v1h-1zM897 603h1v1h-1zM897 593h1v1h-1zM897 583h1v1h-1zM897 573h1v1h-1zM897 563h1v1h-1zM897 553h1v1h-1zM897 543h1v1h-1zM897 533h1v1h-1zM897 523h1v1h-1zM897 513h1v1h-1zM897 503h1v1h-1zM897 493h1v1h-1zM897 483h1v1h-1zM897 473h1v1h-1zM897 463h1v1h-1zM897 453h1v1h-1zM897 443h1v1h-1zM897 433h1v1h-1zM897 423h1v1h-1zM897 413h1v1h-1zM897 403h1v1h-1zM897 393h1v1h-1zM897 383h1v1h-1zM897 373h1v1h-1zM897 363h1v1h-1zM897 353h1v1h-1zM897 343h1v1h-1zM897 333h1v1h-1zM897 323h1v1h-1zM897 313h1v1h-1zM897 303h1v1h-1zM897 293h1v1h-1zM897 283h1v1h-1zM897 273h1v1h-1zM897 263h1v1h-1zM897 253h1v1h-1zM897 243h1v1h-1zM897 233h1v1h-1zM897 223h1v1h-1zM897 213h1v1h-1zM897 203h1v1h-1zM897 193h1v1h-1zM897 183h1v1h-1zM897 173h1v1h-1zM897 163h1v1h-1zM907 723h1v1h-1zM907 713h1v1h-1zM907 703h1v1h-1zM907 693h1v1h-1zM907 683h1v1h-1zM907 673h1v1h-1zM907 663h1v1h-1zM907 653h1v1h-1zM907 643h1v1h-1zM907 633h1v1h-1zM907 623h1v1h-1zM907 613h1v1h-1zM907 603h1v1h-1zM907 593h1v1h-1zM907 583h1v1h-1zM907 573h1v1h-1zM907 563h1v1h-1zM907 553h1v1h-1zM907 543h1v1h-1zM907 533h1v1h-1zM907 523h1v1h-1zM907 513h1v1h-1zM907 503h1v1h-1zM907 493h1v1h-1zM907 483h1v1h-1zM907 473h1v1h-1zM907 463h1v1h-1zM907 453h1v1h-1zM907 443h1v1h-1zM907 433h1v1h-1zM907 423h1v1h-1zM907 413h1v1h-1zM907 403h1v1h-1zM907 393h1v1h-1zM907 383h1v1h-1zM907 373h1v1h-1zM907 363h1v1h-1zM907 353h1v1h-1zM907 343h1v1h-1zM907 333h1v1h-1zM907 323h1v1h-1zM907 313h1v1h-1zM907 303h1v1h-1zM907 293h1v1h-1zM907 283h1v1h-1zM907 273h1v1h-1zM907 263h1v1h-1zM907 253h1v1h-1zM907 243h1v1h-1zM907 233h1v1h-1zM907 223h1v1h-1zM907 213h1v1h-1zM907 203h1v1h-1zM907 193h1v1h-1zM907 183h1v1h-1zM907 173h1v1h-1zM907 163h1v1h-1zM917 723h1v1h-1zM917 713h1v1h-1zM917 703h1v1h-1zM917 693h1v1h-1zM917 683h1v1h-1zM917 673h1v1h-1zM917 663h1v1h-1zM917 653h1v1h-1zM917 643h1v1h-1zM917 633h1v1h-1zM917 623h1v1h-1zM917 613h1v1h-1zM917 603h1v1h-1zM917 593h1v1h-1zM917 583h1v1h-1zM917 573h1v1h-1zM917 563h1v1h-1zM917 553h1v1h-1zM917 543h1v1h-1zM917 533h1v1h-1zM917 523h1v1h-1zM917 513h1v1h-1zM917 503h1v1h-1zM917 493h1v1h-1zM917 483h1v1h-1zM917 473h1v1h-1zM917 463h1v1h-1zM917 453h1v1h-1zM917 443h1v1h-1zM917 433h1v1h-1zM917 423h1v1h-1zM917 413h1v1h-1zM917 403h1v1h-1zM917 393h1v1h-1zM917 383h1v1h-1zM917 373h1v1h-1zM917 363h1v1h-1zM917 353h1v1h-1zM917 343h1v1h-1zM917 333h1v1h-1zM917 323h1v1h-1zM917 313h1v1h-1zM917 303h1v1h-1zM917 293h1v1h-1zM917 283h1v1h-1zM917 273h1v1h-1zM917 263h1v1h-1zM917 253h1v1h-1zM917 243h1v1h-1zM917 233h1v1h-1zM917 223h1v1h-1zM917 213h1v1h-1zM917 203h1v1h-1zM917 193h1v1h-1zM917 183h1v1h-1zM917 173h1v1h-1zM917 163h1v1h-1zM927 723h1v1h-1zM927 713h1v1h-1zM927 703h1v1h-1zM927 693h1v1h-1zM927 683h1v1h-1zM927 673h1v1h-1zM927 663h1v1h-1zM927 653h1v1h-1zM927 643h1v1h-1zM927 633h1v1h-1zM927 623h1v1h-1zM927 613h1v1h-1zM927 603h1v1h-1zM927 593h1v1h-1zM927 583h1v1h-1zM927 573h1v1h-1zM927 563h1v1h-1zM927 553h1v1h-1zM927 543h1v1h-1zM927 533h1v1h-1zM927 523h1v1h-1zM927 513h1v1h-1zM927 503h1v1h-1zM927 493h1v1h-1zM927 483h1v1h-1zM927 473h1v1h-1zM927 463h1v1h-1zM927 453h1v1h-1zM927 443h1v1h-1zM927 433h1v1h-1zM927 423h1v1h-1zM927 413h1v1h-1zM927 403h1v1h-1zM927 393h1v1h-1zM927 383h1v1h-1zM927 373h1v1h-1zM927 363h1v1h-1zM927 353h1v1h-1zM927 343h1v1h-1zM927 333h1v1h-1zM927 323h1v1h-1zM927 313h1v1h-1zM927 303h1v1h-1zM927 293h1v1h-1zM927 283h1v1h-1zM927 273h1v1h-1zM927 263h1v1h-1zM927 253h1v1h-1zM927 243h1v1h-1zM927 233h1v1h-1zM927 223h1v1h-1zM927 213h1v1h-1zM927 203h1v1h-1zM927 193h1v1h-1zM927 183h1v1h-1zM927 173h1v1h-1zM927 163h1v1h-1zM937 723h1v1h-1zM937 713h1v1h-1zM937 703h1v1h-1zM937 693h1v1h-1zM937 683h1v1h-1zM937 673h1v1h-1zM937 663h1v1h-1zM937 653h1v1h-1zM937 643h1v1h-1zM937 633h1v1h-1zM937 623h1v1h-1zM937 613h1v1h-1zM937 603h1v1h-1zM937 593h1v1h-1zM937 583h1v1h-1zM937 573h1v1h-1zM937 563h1v1h-1zM937 553h1v1h-1zM937 543h1v1h-1zM937 533h1v1h-1zM937 523h1v1h-1zM937 513h1v1h-1zM937 503h1v1h-1zM937 493h1v1h-1zM937 483h1v1h-1zM937 473h1v1h-1zM937 463h1v1h-1zM937 453h1v1h-1zM937 443h1v1h-1zM937 433h1v1h-1zM937 423h1v1h-1zM937 413h1v1h-1zM937 403h1v1h-1zM937 393h1v1h-1zM937 383h1v1h-1zM937 373h1v1h-1zM937 363h1v1h-1zM937 353h1v1h-1zM937 343h1v1h-1zM937 333h1v1h-1zM937 323h1v1h-1zM937 313h1v1h-1zM937 303h1v1h-1zM937 293h1v1h-1zM937 283h1v1h-1zM937 273h1v1h-1zM937 263h1v1h-1zM937 253h1v1h-1zM937 243h1v1h-1zM937 233h1v1h-1zM937 223h1v1h-1zM937 213h1v1h-1zM937 203h1v1h-1zM937 193h1v1h-1zM937 183h1v1h-1zM937 173h1v1h-1zM937 163h1v1h-1zM947 723h1v1h-1zM947 713h1v1h-1zM947 703h1v1h-1zM947 693h1v1h-1zM947 683h1v1h-1zM947 673h1v1h-1zM947 663h1v1h-1zM947 653h1v1h-1zM947 643h1v1h-1zM947 633h1v1h-1zM947 623h1v1h-1zM947 613h1v1h-1zM947 603h1v1h-1zM947 593h1v1h-1zM947 583h1v1h-1zM947 573h1v1h-1zM947 563h1v1h-1zM947 553h1v1h-1zM947 543h1v1h-1zM947 533h1v1h-1zM947 523h1v1h-1zM947 513h1v1h-1zM947 503h1v1h-1zM947 493h1v1h-1zM947 483h1v1h-1zM947 473h1v1h-1zM947 463h1v1h-1zM947 453h1v1h-1zM947 443h1v1h-1zM947 433h1v1h-1zM947 423h1v1h-1zM947 413h1v1h-1zM947 403h1v1h-1zM947 393h1v1h-1zM947 383h1v1h-1zM947 373h1v1h-1zM947 363h1v1h-1zM947 353h1v1h-1zM947 343h1v1h-1zM947 333h1v1h-1zM947 323h1v1h-1zM947 313h1v1h-1zM947 303h1v1h-1zM947 293h1v1h-1zM947 283h1v1h-1zM947 273h1v1h-1zM947 263h1v1h-1zM947 253h1v1h-1zM947 243h1v1h-1zM947 233h1v1h-1zM947 223h1v1h-1zM947 213h1v1h-1zM947 203h1v1h-1zM947 193h1v1h-1zM947 183h1v1h-1zM947 173h1v1h-1zM947 163h1v1h-1zM957 723h1v1h-1zM957 713h1v1h-1zM957 703h1v1h-1zM957 693h1v1h-1zM957 683h1v1h-1zM957 673h1v1h-1zM957 663h1v1h-1zM957 653h1v1h-1zM957 643h1v1h-1zM957 633h1v1h-1zM957 623h1v1h-1zM957 613h1v1h-1zM957 603h1v1h-1zM957 593h1v1h-1zM957 583h1v1h-1zM957 573h1v1h-1zM957 563h1v1h-1zM957 553h1v1h-1zM957 543h1v1h-1zM957 533h1v1h-1zM957 523h1v1h-1zM957 513h1v1h-1zM957 503h1v1h-1zM957 493h1v1h-1zM957 483h1v1h-1zM957 473h1v1h-1zM957 463h1v1h-1zM957 453h1v1h-1zM957 443h1v1h-1zM957 433h1v1h-1zM957 423h1v1h-1zM957 413h1v1h-1zM957 403h1v1h-1zM957 393h1v1h-1zM957 383h1v1h-1zM957 373h1v1h-1zM957 363h1v1h-1zM957 353h1v1h-1zM957 343h1v1h-1zM957 333h1v1h-1zM957 323h1v1h-1zM957 313h1v1h-1zM957 303h1v1h-1zM957 293h1v1h-1zM957 283h1v1h-1zM957 273h1v1h-1zM957 263h1v1h-1zM957 253h1v1h-1zM957 243h1v1h-1zM957 233h1v1h-1zM957 223h1v1h-1zM957 213h1v1h-1zM957 203h1v1h-1zM957 193h1v1h-1zM957 183h1v1h-1zM957 173h1v1h-1zM957 163h1v1h-1zM967 723h1v1h-1zM967 713h1v1h-1zM967 703h1v1h-1zM967 693h1v1h-1zM967 683h1v1h-1zM967 673h1v1h-1zM967 663h1v1h-1zM967 653h1v1h-1zM967 643h1v1h-1zM967 633h1v1h-1zM967 623h1v1h-1zM967 613h1v1h-1zM967 603h1v1h-1zM967 593h1v1h-1zM967 583h1v1h-1zM967 573h1v1h-1zM967 563h1v1h-1zM967 553h1v1h-1zM967 543h1v1h-1zM967 533h1v1h-1zM967 523h1v1h-1zM967 513h1v1h-1zM967 503h1v1h-1zM967 493h1v1h-1zM967 483h1v1h-1zM967 473h1v1h-1zM967 463h1v1h-1zM967 453h1v1h-1zM967 443h1v1h-1zM967 433h1v1h-1zM967 423h1v1h-1zM967 413h1v1h-1zM967 403h1v1h-1zM967 393h1v1h-1zM967 383h1v1h-1zM967 373h1v1h-1zM967 363h1v1h-1zM967 353h1v1h-1zM967 343h1v1h-1zM967 333h1v1h-1zM967 323h1v1h-1zM967 313h1v1h-1zM967 303h1v1h-1zM967 293h1v1h-1zM967 283h1v1h-1zM967 273h1v1h-1zM967 263h1v1h-1zM967 253h1v1h-1zM967 243h1v1h-1zM967 233h1v1h-1zM967 223h1v1h-1zM967 213h1v1h-1zM967 203h1v1h-1zM967 193h1v1h-1zM967 183h1v1h-1zM967 173h1v1h-1zM967 163h1v1h-1zM977 723h1v1h-1zM977 713h1v1h-1zM977 703h1v1h-1zM977 693h1v1h-1zM977 683h1v1h-1zM977 673h1v1h-1zM977 663h1v1h-1zM977 653h1v1h-1zM977 643h1v1h-1zM977 633h1v1h-1zM977 623h1v1h-1zM977 613h1v1h-1zM977 603h1v1h-1zM977 593h1v1h-1zM977 583h1v1h-1zM977 573h1v1h-1zM977 563h1v1h-1zM977 553h1v1h-1zM977 543h1v1h-1zM977 533h1v1h-1zM977 523h1v1h-1zM977 513h1v1h-1zM977 503h1v1h-1zM977 493h1v1h-1zM977 483h1v1h-1zM977 473h1v1h-1zM977 463h1v1h-1zM977 453h1v1h-1zM977 443h1v1h-1zM977 433h1v1h-1zM977 423h1v1h-1zM977 413h1v1h-1zM977 403h1v1h-1zM977 393h1v1h-1zM977 383h1v1h-1zM977 373h1v1h-1zM977 363h1v1h-1zM977 353h1v1h-1zM977 343h1v1h-1zM977 333h1v1h-1zM977 323h1v1h-1zM977 313h1v1h-1zM977 303h1v1h-1zM977 293h1v1h-1zM977 283h1v1h-1zM977 273h1v1h-1zM977 263h1v1h-1zM977 253h1v1h-1zM977 243h1v1h-1zM977 233h1v1h-1zM977 223h1v1h-1zM977 213h1v1h-1zM977 203h1v1h-1zM977 193h1v1h-1zM977 183h1v1h-1zM977 173h1v1h-1zM977 163h1v1h-1zM987 723h1v1h-1zM987 713h1v1h-1zM987 703h1v1h-1zM987 693h1v1h-1zM987 683h1v1h-1zM987 673h1v1h-1zM987 663h1v1h-1zM987 653h1v1h-1zM987 643h1v1h-1zM987 633h1v1h-1zM987 623h1v1h-1zM987 613h1v1h-1zM987 603h1v1h-1zM987 593h1v1h-1zM987 583h1v1h-1zM987 573h1v1h-1zM987 563h1v1h-1zM987 553h1v1h-1zM987 543h1v1h-1zM987 533h1v1h-1zM987 523h1v1h-1zM987 513h1v1h-1zM987 503h1v1h-1zM987 493h1v1h-1zM987 483h1v1h-1zM987 473h1v1h-1zM987 463h1v1h-1zM987 453h1v1h-1zM987 443h1v1h-1zM987 433h1v1h-1zM987 423h1v1h-1zM987 413h1v1h-1zM987 403h1v1h-1zM987 393h1v1h-1zM987 383h1v1h-1zM987 373h1v1h-1zM987 363h1v1h-1zM987 353h1v1h-1zM987 343h1v1h-1zM987 333h1v1h-1zM987 323h1v1h-1zM987 313h1v1h-1zM987 303h1v1h-1zM987 293h1v1h-1zM987 283h1v1h-1zM987 273h1v1h-1zM987 263h1v1h-1zM987 253h1v1h-1zM987 243h1v1h-1zM987 233h1v1h-1zM987 223h1v1h-1zM987 213h1v1h-1zM987 203h1v1h-1zM987 193h1v1h-1zM987 183h1v1h-1zM987 173h1v1h-1zM987 163h1v1h-1zM997 723h1v1h-1zM997 713h1v1h-1zM997 703h1v1h-1zM997 693h1v1h-1zM997 683h1v1h-1zM997 673h1v1h-1zM997 663h1v1h-1zM997 653h1v1h-1zM997 643h1v1h-1zM997 633h1v1h-1zM997 623h1v1h-1zM997 613h1v1h-1zM997 603h1v1h-1zM997 593h1v1h-1zM997 583h1v1h-1zM997 573h1v1h-1zM997 563h1v1h-1zM997 553h1v1h-1zM997 543h1v1h-1zM997 533h1v1h-1zM997 523h1v1h-1zM997 513h1v1h-1zM997 503h1v1h-1zM997 493h1v1h-1zM997 483h1v1h-1zM997 473h1v1h-1zM997 463h1v1h-1zM997 453h1v1h-1zM997 443h1v1h-1zM997 433h1v1h-1zM997 423h1v1h-1zM997 413h1v1h-1zM997 403h1v1h-1zM997 393h1v1h-1zM997 383h1v1h-1zM997 373h1v1h-1zM997 363h1v1h-1zM997 353h1v1h-1zM997 343h1v1h-1zM997 333h1v1h-1zM997 323h1v1h-1zM997 313h1v1h-1zM997 303h1v1h-1zM997 293h1v1h-1zM997 283h1v1h-1zM997 273h1v1h-1zM997 263h1v1h-1zM997 253h1v1h-1zM997 243h1v1h-1zM997 233h1v1h-1zM997 223h1v1h-1zM997 213h1v1h-1zM997 203h1v1h-1zM997 193h1v1h-1zM997 183h1v1h-1zM997 173h1v1h-1zM997 163h1v1h-1zM1007 723h1v1h-1zM1007 713h1v1h-1zM1007 703h1v1h-1zM1007 693h1v1h-1zM1007 683h1v1h-1zM1007 673h1v1h-1zM1007 663h1v1h-1zM1007 653h1v1h-1zM1007 643h1v1h-1zM1007 633h1v1h-1zM1007 623h1v1h-1zM1007 613h1v1h-1zM1007 603h1v1h-1zM1007 593h1v1h-1zM1007 583h1v1h-1zM1007 573h1v1h-1zM1007 563h1v1h-1zM1007 553h1v1h-1zM1007 543h1v1h-1zM1007 533h1v1h-1zM1007 523h1v1h-1zM1007 513h1v1h-1zM1007 503h1v1h-1zM1007 493h1v1h-1zM1007 483h1v1h-1zM1007 473h1v1h-1zM1007 463h1v1h-1zM1007 453h1v1h-1zM1007 443h1v1h-1zM1007 433h1v1h-1zM1007 423h1v1h-1zM1007 413h1v1h-1zM1007 403h1v1h-1zM1007 393h1v1h-1zM1007 383h1v1h-1zM1007 373h1v1h-1zM1007 363h1v1h-1zM1007 353h1v1h-1zM1007 343h1v1h-1zM1007 333h1v1h-1zM1007 323h1v1h-1zM1007 313h1v1h-1zM1007 303h1v1h-1zM1007 293h1v1h-1zM1007 283h1v1h-1zM1007 273h1v1h-1zM1007 263h1v1h-1zM1007 253h1v1h-1zM1007 243h1v1h-1zM1007 233h1v1h-1zM1007 223h1v1h-1zM1007 213h1v1h-1zM1007 203h1v1h-1zM1007 193h1v1h-1zM1007 183h1v1h-1zM1007 173h1v1h-1zM1007 163h1v1h-1zM1017 723h1v1h-1zM1017 713h1v1h-1zM1017 703h1v1h-1zM1017 693h1v1h-1zM1017 683h1v1h-1zM1017 673h1v1h-1zM1017 663h1v1h-1zM1017 653h1v1h-1zM1017 643h1v1h-1zM1017 633h1v1h-1zM1017 623h1v1h-1zM1017 613h1v1h-1zM1017 603h1v1h-1zM1017 593h1v1h-1zM1017 583h1v1h-1zM1017 573h1v1h-1zM1017 563h1v1h-1zM1017 553h1v1h-1zM1017 543h1v1h-1zM1017 533h1v1h-1zM1017 523h1v1h-1zM1017 513h1v1h-1zM1017 503h1v1h-1zM1017 493h1v1h-1zM1017 483h1v1h-1zM1017 473h1v1h-1zM1017 463h1v1h-1zM1017 453h1v1h-1zM1017 443h1v1h-1zM1017 433h1v1h-1zM1017 423h1v1h-1zM1017 413h1v1h-1zM1017 403h1v1h-1zM1017 393h1v1h-1zM1017 383h1v1h-1zM1017 373h1v1h-1zM1017 363h1v1h-1zM1017 353h1v1h-1zM1017 343h1v1h-1zM1017 333h1v1h-1zM1017 323h1v1h-1zM1017 313h1v1h-1zM1017 303h1v1h-1zM1017 293h1v1h-1zM1017 283h1v1h-1zM1017 273h1v1h-1zM1017 263h1v1h-1zM1017 253h1v1h-1zM1017 243h1v1h-1zM1017 233h1v1h-1zM1017 223h1v1h-1zM1017 213h1v1h-1zM1017 203h1v1h-1zM1017 193h1v1h-1zM1017 183h1v1h-1zM1017 173h1v1h-1zM1017 163h1v1h-1zM1027 723h1v1h-1zM1027 713h1v1h-1zM1027 703h1v1h-1zM1027 693h1v1h-1zM1027 683h1v1h-1zM1027 673h1v1h-1zM1027 663h1v1h-1zM1027 653h1v1h-1zM1027 643h1v1h-1zM1027 633h1v1h-1zM1027 623h1v1h-1zM1027 613h1v1h-1zM1027 603h1v1h-1zM1027 593h1v1h-1zM1027 583h1v1h-1zM1027 573h1v1h-1zM1027 563h1v1h-1zM1027 553h1v1h-1zM1027 543h1v1h-1zM1027 533h1v1h-1zM1027 523h1v1h-1zM1027 513h1v1h-1zM1027 503h1v1h-1zM1027 493h1v1h-1zM1027 483h1v1h-1zM1027 473h1v1h-1zM1027 463h1v1h-1zM1027 453h1v1h-1zM1027 443h1v1h-1zM1027 433h1v1h-1zM1027 423h1v1h-1zM1027 413h1v1h-1zM1027 403h1v1h-1zM1027 393h1v1h-1zM1027 383h1v1h-1zM1027 373h1v1h-1zM1027 363h1v1h-1zM1027 353h1v1h-1zM1027 343h1v1h-1zM1027 333h1v1h-1zM1027 323h1v1h-1zM1027 313h1v1h-1zM1027 303h1v1h-1zM1027 293h1v1h-1zM1027 283h1v1h-1zM1027 273h1v1h-1zM1027 263h1v1h-1zM1027 253h1v1h-1zM1027 243h1v1h-1zM1027 233h1v1h-1zM1027 223h1v1h-1zM1027 213h1v1h-1zM1027 203h1v1h-1zM1027 193h1v1h-1zM1027 183h1v1h-1zM1027 173h1v1h-1zM1027 163h1v1h-1zM1037 723h1v1h-1zM1037 713h1v1h-1zM1037 703h1v1h-1zM1037 693h1v1h-1zM1037 683h1v1h-1zM1037 673h1v1h-1zM1037 663h1v1h-1zM1037 653h1v1h-1zM1037 643h1v1h-1zM1037 633h1v1h-1zM1037 623h1v1h-1zM1037 613h1v1h-1zM1037 603h1v1h-1zM1037 593h1v1h-1zM1037 583h1v1h-1zM1037 573h1v1h-1zM1037 563h1v1h-1zM1037 553h1v1h-1zM1037 543h1v1h-1zM1037 533h1v1h-1zM1037 523h1v1h-1zM1037 513h1v1h-1zM1037 503h1v1h-1zM1037 493h1v1h-1zM1037 483h1v1h-1zM1037 473h1v1h-1zM1037 463h1v1h-1zM1037 453h1v1h-1zM1037 443h1v1h-1zM1037 433h1v1h-1zM1037 423h1v1h-1zM1037 413h1v1h-1zM1037 403h1v1h-1zM1037 393h1v1h-1zM1037 383h1v1h-1zM1037 373h1v1h-1zM1037 363h1v1h-1zM1037 353h1v1h-1zM1037 343h1v1h-1zM1037 333h1v1h-1zM1037 323h1v1h-1zM1037 313h1v1h-1zM1037 303h1v1h-1zM1037 293h1v1h-1zM1037 283h1v1h-1zM1037 273h1v1h-1zM1037 263h1v1h-1zM1037 253h1v1h-1zM1037 243h1v1h-1zM1037 233h1v1h-1zM1037 223h1v1h-1zM1037 213h1v1h-1zM1037 203h1v1h-1zM1037 193h1v1h-1zM1037 183h1v1h-1zM1037 173h1v1h-1zM1037 163h1v1h-1zM1047 723h1v1h-1zM1047 713h1v1h-1zM1047 703h1v1h-1zM1047 693h1v1h-1zM1047 683h1v1h-1zM1047 673h1v1h-1zM1047 663h1v1h-1zM1047 653h1v1h-1zM1047 643h1v1h-1zM1047 633h1v1h-1zM1047 623h1v1h-1zM1047 613h1v1h-1zM1047 603h1v1h-1zM1047 593h1v1h-1zM1047 583h1v1h-1zM1047 573h1v1h-1zM1047 563h1v1h-1zM1047 553h1v1h-1zM1047 543h1v1h-1zM1047 533h1v1h-1zM1047 523h1v1h-1zM1047 513h1v1h-1zM1047 503h1v1h-1zM1047 493h1v1h-1zM1047 483h1v1h-1zM1047 473h1v1h-1zM1047 463h1v1h-1zM1047 453h1v1h-1zM1047 443h1v1h-1zM1047 433h1v1h-1zM1047 423h1v1h-1zM1047 413h1v1h-1zM1047 403h1v1h-1zM1047 393h1v1h-1zM1047 383h1v1h-1zM1047 373h1v1h-1zM1047 363h1v1h-1zM1047 353h1v1h-1zM1047 343h1v1h-1zM1047 333h1v1h-1zM1047 323h1v1h-1zM1047 313h1v1h-1zM1047 303h1v1h-1zM1047 293h1v1h-1zM1047 283h1v1h-1zM1047 273h1v1h-1zM1047 263h1v1h-1zM1047 253h1v1h-1zM1047 243h1v1h-1zM1047 233h1v1h-1zM1047 223h1v1h-1zM1047 213h1v1h-1zM1047 203h1v1h-1zM1047 193h1v1h-1zM1047 183h1v1h-1zM1047 173h1v1h-1zM1047 163h1v1h-1zM1057 723h1v1h-1zM1057 713h1v1h-1zM1057 703h1v1h-1zM1057 693h1v1h-1zM1057 683h1v1h-1zM1057 673h1v1h-1zM1057 663h1v1h-1zM1057 653h1v1h-1zM1057 643h1v1h-1zM1057 633h1v1h-1zM1057 623h1v1h-1zM1057 613h1v1h-1zM1057 603h1v1h-1zM1057 593h1v1h-1zM1057 583h1v1h-1zM1057 573h1v1h-1zM1057 563h1v1h-1zM1057 553h1v1h-1zM1057 543h1v1h-1zM1057 533h1v1h-1zM1057 523h1v1h-1zM1057 513h1v1h-1zM1057 503h1v1h-1zM1057 493h1v1h-1zM1057 483h1v1h-1zM1057 473h1v1h-1zM1057 463h1v1h-1zM1057 453h1v1h-1zM1057 443h1v1h-1zM1057 433h1v1h-1zM1057 423h1v1h-1zM1057 413h1v1h-1zM1057 403h1v1h-1zM1057 393h1v1h-1zM1057 383h1v1h-1zM1057 373h1v1h-1zM1057 363h1v1h-1zM1057 353h1v1h-1zM1057 343h1v1h-1zM1057 333h1v1h-1zM1057 323h1v1h-1zM1057 313h1v1h-1zM1057 303h1v1h-1zM1057 293h1v1h-1zM1057 283h1v1h-1zM1057 273h1v1h-1zM1057 263h1v1h-1zM1057 253h1v1h-1zM1057 243h1v1h-1zM1057 233h1v1h-1zM1057 223h1v1h-1zM1057 213h1v1h-1zM1057 203h1v1h-1zM1057 193h1v1h-1zM1057 183h1v1h-1zM1057 173h1v1h-1zM1057 163h1v1h-1zM1067 723h1v1h-1zM1067 713h1v1h-1zM1067 703h1v1h-1zM1067 693h1v1h-1zM1067 683h1v1h-1zM1067 673h1v1h-1zM1067 663h1v1h-1zM1067 653h1v1h-1zM1067 643h1v1h-1zM1067 633h1v1h-1zM1067 623h1v1h-1zM1067 613h1v1h-1zM1067 603h1v1h-1zM1067 593h1v1h-1zM1067 583h1v1h-1zM1067 573h1v1h-1zM1067 563h1v1h-1zM1067 553h1v1h-1zM1067 543h1v1h-1zM1067 533h1v1h-1zM1067 523h1v1h-1zM1067 513h1v1h-1zM1067 503h1v1h-1zM1067 493h1v1h-1zM1067 483h1v1h-1zM1067 473h1v1h-1zM1067 463h1v1h-1zM1067 453h1v1h-1zM1067 443h1v1h-1zM1067 433h1v1h-1zM1067 423h1v1h-1zM1067 413h1v1h-1zM1067 403h1v1h-1zM1067 393h1v1h-1zM1067 383h1v1h-1zM1067 373h1v1h-1zM1067 363h1v1h-1zM1067 353h1v1h-1zM1067 343h1v1h-1zM1067 333h1v1h-1zM1067 323h1v1h-1zM1067 313h1v1h-1zM1067 303h1v1h-1zM1067 293h1v1h-1zM1067 283h1v1h-1zM1067 273h1v1h-1zM1067 263h1v1h-1zM1067 253h1v1h-1zM1067 243h1v1h-1zM1067 233h1v1h-1zM1067 223h1v1h-1zM1067 213h1v1h-1zM1067 203h1v1h-1zM1067 193h1v1h-1zM1067 183h1v1h-1zM1067 173h1v1h-1zM1067 163h1v1h-1zM1077 723h1v1h-1zM1077 713h1v1h-1zM1077 703h1v1h-1zM1077 693h1v1h-1zM1077 683h1v1h-1zM1077 673h1v1h-1zM1077 663h1v1h-1zM1077 653h1v1h-1zM1077 643h1v1h-1zM1077 633h1v1h-1zM1077 623h1v1h-1zM1077 613h1v1h-1zM1077 603h1v1h-1zM1077 593h1v1h-1zM1077 583h1v1h-1zM1077 573h1v1h-1zM1077 563h1v1h-1zM1077 553h1v1h-1zM1077 543h1v1h-1zM1077 533h1v1h-1zM1077 523h1v1h-1zM1077 513h1v1h-1zM1077 503h1v1h-1zM1077 493h1v1h-1zM1077 483h1v1h-1zM1077 473h1v1h-1zM1077 463h1v1h-1zM1077 453h1v1h-1zM1077 443h1v1h-1zM1077 433h1v1h-1zM1077 423h1v1h-1zM1077 413h1v1h-1zM1077 403h1v1h-1zM1077 393h1v1h-1zM1077 383h1v1h-1zM1077 373h1v1h-1zM1077 363h1v1h-1zM1077 353h1v1h-1zM1077 343h1v1h-1zM1077 333h1v1h-1zM1077 323h1v1h-1zM1077 313h1v1h-1zM1077 303h1v1h-1zM1077 293h1v1h-1zM1077 283h1v1h-1zM1077 273h1v1h-1zM1077 263h1v1h-1zM1077 253h1v1h-1zM1077 243h1v1h-1zM1077 233h1v1h-1zM1077 223h1v1h-1zM1077 213h1v1h-1zM1077 203h1v1h-1zM1077 193h1v1h-1zM1077 183h1v1h-1zM1077 173h1v1h-1zM1077 163h1v1h-1zM1087 723h1v1h-1zM1087 713h1v1h-1zM1087 703h1v1h-1zM1087 693h1v1h-1zM1087 683h1v1h-1zM1087 673h1v1h-1zM1087 663h1v1h-1zM1087 653h1v1h-1zM1087 643h1v1h-1zM1087 633h1v1h-1zM1087 623h1v1h-1zM1087 613h1v1h-1zM1087 603h1v1h-1zM1087 593h1v1h-1zM1087 583h1v1h-1zM1087 573h1v1h-1zM1087 563h1v1h-1zM1087 553h1v1h-1zM1087 543h1v1h-1zM1087 533h1v1h-1zM1087 523h1v1h-1zM1087 513h1v1h-1zM1087 503h1v1h-1zM1087 493h1v1h-1zM1087 483h1v1h-1zM1087 473h1v1h-1zM1087 463h1v1h-1zM1087 453h1v1h-1zM1087 443h1v1h-1zM1087 433h1v1h-1zM1087 423h1v1h-1zM1087 413h1v1h-1zM1087 403h1v1h-1zM1087 393h1v1h-1zM1087 383h1v1h-1zM1087 373h1v1h-1zM1087 363h1v1h-1zM1087 353h1v1h-1zM1087 343h1v1h-1zM1087 333h1v1h-1zM1087 323h1v1h-1zM1087 313h1v1h-1zM1087 303h1v1h-1zM1087 293h1v1h-1zM1087 283h1v1h-1zM1087 273h1v1h-1zM1087 263h1v1h-1zM1087 253h1v1h-1zM1087 243h1v1h-1zM1087 233h1v1h-1zM1087 223h1v1h-1zM1087 213h1v1h-1zM1087 203h1v1h-1zM1087 193h1v1h-1zM1087 183h1v1h-1zM1087 173h1v1h-1zM1087 163h1v1h-1zM1097 723h1v1h-1zM1097 713h1v1h-1zM1097 703h1v1h-1zM1097 693h1v1h-1zM1097 683h1v1h-1zM1097 673h1v1h-1zM1097 663h1v1h-1zM1097 653h1v1h-1zM1097 643h1v1h-1zM1097 633h1v1h-1zM1097 623h1v1h-1zM1097 613h1v1h-1zM1097 603h1v1h-1zM1097 593h1v1h-1zM1097 583h1v1h-1zM1097 573h1v1h-1zM1097 563h1v1h-1zM1097 553h1v1h-1zM1097 543h1v1h-1zM1097 533h1v1h-1zM1097 523h1v1h-1zM1097 513h1v1h-1zM1097 503h1v1h-1zM1097 493h1v1h-1zM1097 483h1v1h-1zM1097 473h1v1h-1zM1097 463h1v1h-1zM1097 453h1v1h-1zM1097 443h1v1h-1zM1097 433h1v1h-1zM1097 423h1v1h-1zM1097 413h1v1h-1zM1097 403h1v1h-1zM1097 393h1v1h-1zM1097 383h1v1h-1zM1097 373h1v1h-1zM1097 363h1v1h-1zM1097 353h1v1h-1zM1097 343h1v1h-1zM1097 333h1v1h-1zM1097 323h1v1h-1zM1097 313h1v1h-1zM1097 303h1v1h-1zM1097 293h1v1h-1zM1097 283h1v1h-1zM1097 273h1v1h-1zM1097 263h1v1h-1zM1097 253h1v1h-1zM1097 243h1v1h-1zM1097 233h1v1h-1zM1097 223h1v1h-1zM1097 213h1v1h-1zM1097 203h1v1h-1zM1097 193h1v1h-1zM1097 183h1v1h-1zM1097 173h1v1h-1zM1097 163h1v1h-1zM1107 723h1v1h-1zM1107 713h1v1h-1zM1107 703h1v1h-1zM1107 693h1v1h-1zM1107 683h1v1h-1zM1107 673h1v1h-1zM1107 663h1v1h-1zM1107 653h1v1h-1zM1107 643h1v1h-1zM1107 633h1v1h-1zM1107 623h1v1h-1zM1107 613h1v1h-1zM1107 603h1v1h-1zM1107 593h1v1h-1zM1107 583h1v1h-1zM1107 573h1v1h-1zM1107 563h1v1h-1zM1107 553h1v1h-1zM1107 543h1v1h-1zM1107 533h1v1h-1zM1107 523h1v1h-1zM1107 513h1v1h-1zM1107 503h1v1h-1zM1107 493h1v1h-1zM1107 483h1v1h-1zM1107 473h1v1h-1zM1107 463h1v1h-1zM1107 453h1v1h-1zM1107 443h1v1h-1zM1107 433h1v1h-1zM1107 423h1v1h-1zM1107 413h1v1h-1zM1107 403h1v1h-1zM1107 393h1v1h-1zM1107 383h1v1h-1zM1107 373h1v1h-1zM1107 363h1v1h-1zM1107 353h1v1h-1zM1107 343h1v1h-1zM1107 333h1v1h-1zM1107 323h1v1h-1zM1107 313h1v1h-1zM1107 303h1v1h-1zM1107 293h1v1h-1zM1107 283h1v1h-1zM1107 273h1v1h-1zM1107 263h1v1h-1zM1107 253h1v1h-1zM1107 243h1v1h-1zM1107 233h1v1h-1zM1107 223h1v1h-1zM1107 213h1v1h-1zM1107 203h1v1h-1zM1107 193h1v1h-1zM1107 183h1v1h-1zM1107 173h1v1h-1zM1107 163h1v1h-1zM1117 723h1v1h-1zM1117 713h1v1h-1zM1117 703h1v1h-1zM1117 693h1v1h-1zM1117 683h1v1h-1zM1117 673h1v1h-1zM1117 663h1v1h-1zM1117 653h1v1h-1zM1117 643h1v1h-1zM1117 633h1v1h-1zM1117 623h1v1h-1zM1117 613h1v1h-1zM1117 603h1v1h-1zM1117 593h1v1h-1zM1117 583h1v1h-1zM1117 573h1v1h-1zM1117 563h1v1h-1zM1117 553h1v1h-1zM1117 543h1v1h-1zM1117 533h1v1h-1zM1117 523h1v1h-1zM1117 513h1v1h-1zM1117 503h1v1h-1zM1117 493h1v1h-1zM1117 483h1v1h-1zM1117 473h1v1h-1zM1117 463h1v1h-1zM1117 453h1v1h-1zM1117 443h1v1h-1zM1117 433h1v1h-1zM1117 423h1v1h-1zM1117 413h1v1h-1zM1117 403h1v1h-1zM1117 393h1v1h-1zM1117 383h1v1h-1zM1117 373h1v1h-1zM1117 363h1v1h-1zM1117 353h1v1h-1zM1117 343h1v1h-1zM1117 333h1v1h-1zM1117 323h1v1h-1zM1117 313h1v1h-1zM1117 303h1v1h-1zM1117 293h1v1h-1zM1117 283h1v1h-1zM1117 273h1v1h-1zM1117 263h1v1h-1zM1117 253h1v1h-1zM1117 243h1v1h-1zM1117 233h1v1h-1zM1117 223h1v1h-1zM1117 213h1v1h-1zM1117 203h1v1h-1zM1117 193h1v1h-1zM1117 183h1v1h-1zM1117 173h1v1h-1zM1117 163h1v1h-1zM1127 723h1v1h-1zM1127 713h1v1h-1zM1127 703h1v1h-1zM1127 693h1v1h-1zM1127 683h1v1h-1zM1127 673h1v1h-1zM1127 663h1v1h-1zM1127 653h1v1h-1zM1127 643h1v1h-1zM1127 633h1v1h-1zM1127 623h1v1h-1zM1127 613h1v1h-1zM1127 603h1v1h-1zM1127 593h1v1h-1zM1127 583h1v1h-1zM1127 573h1v1h-1zM1127 563h1v1h-1zM1127 553h1v1h-1zM1127 543h1v1h-1zM1127 533h1v1h-1zM1127 523h1v1h-1zM1127 513h1v1h-1zM1127 503h1v1h-1zM1127 493h1v1h-1zM1127 483h1v1h-1zM1127 473h1v1h-1zM1127 463h1v1h-1zM1127 453h1v1h-1zM1127 443h1v1h-1zM1127 433h1v1h-1zM1127 423h1v1h-1zM1127 413h1v1h-1zM1127 403h1v1h-1zM1127 393h1v1h-1zM1127 383h1v1h-1zM1127 373h1v1h-1zM1127 363h1v1h-1zM1127 353h1v1h-1zM1127 343h1v1h-1zM1127 333h1v1h-1zM1127 323h1v1h-1zM1127 313h1v1h-1zM1127 303h1v1h-1zM1127 293h1v1h-1zM1127 283h1v1h-1zM1127 273h1v1h-1zM1127 263h1v1h-1zM1127 253h1v1h-1zM1127 243h1v1h-1zM1127 233h1v1h-1zM1127 223h1v1h-1zM1127 213h1v1h-1zM1127 203h1v1h-1zM1127 193h1v1h-1zM1127 183h1v1h-1zM1127 173h1v1h-1zM1127 163h1v1h-1zM1137 723h1v1h-1zM1137 713h1v1h-1zM1137 703h1v1h-1zM1137 693h1v1h-1zM1137 683h1v1h-1zM1137 673h1v1h-1zM1137 663h1v1h-1zM1137 653h1v1h-1zM1137 643h1v1h-1zM1137 633h1v1h-1zM1137 623h1v1h-1zM1137 613h1v1h-1zM1137 603h1v1h-1zM1137 593h1v1h-1zM1137 583h1v1h-1zM1137 573h1v1h-1zM1137 563h1v1h-1zM1137 553h1v1h-1zM1137 543h1v1h-1zM1137 533h1v1h-1zM1137 523h1v1h-1zM1137 513h1v1h-1zM1137 503h1v1h-1zM1137 493h1v1h-1zM1137 483h1v1h-1zM1137 473h1v1h-1zM1137 463h1v1h-1zM1137 453h1v1h-1zM1137 443h1v1h-1zM1137 433h1v1h-1zM1137 423h1v1h-1zM1137 413h1v1h-1zM1137 403h1v1h-1zM1137 393h1v1h-1zM1137 383h1v1h-1zM1137 373h1v1h-1zM1137 363h1v1h-1zM1137 353h1v1h-1zM1137 343h1v1h-1zM1137 333h1v1h-1zM1137 323h1v1h-1zM1137 313h1v1h-1zM1137 303h1v1h-1zM1137 293h1v1h-1zM1137 283h1v1h-1zM1137 273h1v1h-1zM1137 263h1v1h-1zM1137 253h1v1h-1zM1137 243h1v1h-1zM1137 233h1v1h-1zM1137 223h1v1h-1zM1137 213h1v1h-1zM1137 203h1v1h-1zM1137 193h1v1h-1zM1137 183h1v1h-1zM1137 173h1v1h-1zM1137 163h1v1h-1z" fill="#444444"/><g stroke="#fff" stroke-width="2.6" fill="none"><rect x="216.3" y="353.4" width="801.4" height="180.3"/><circle cx="316.4" cy="443.4" r="40"/><circle cx="917.4" cy="443.4" r="40"/></g><g stroke="#ff0000" stroke-width="1.1" fill="none"><path d="M195.6 443.5H1038.4" stroke-dasharray="17.2 6.9 2 6.9"/><path d="M316.5 332.8V554.7" stroke-dasharray="17.2 6.9 2 6.9" stroke-dashoffset="14"/><path d="M917.5 332.8V554.7" stroke-dasharray="17.2 6.9 2 6.9" stroke-dashoffset="14"/></g><rect x="367.5" y="382.9" width="178.5" height="20.5" fill="none" stroke="#4f6ea8" stroke-width="1" stroke-dasharray="3 3"/><text x="365.3" y="403.3" font-family="Liberation Sans" font-size="27.4" fill="#fff">104.245-02.4B</text><g fill="none"><circle cx="456.3" cy="393.3" r="35.2" stroke="#44505c" stroke-width="6" opacity="0.75"/><circle cx="456.3" cy="393.3" r="37.9" stroke="#8494a3" stroke-width="1.1"/><circle cx="456.3" cy="393.3" r="36.0" stroke="#6f7f8e" stroke-width="1.0"/><circle cx="456.3" cy="393.3" r="34.0" stroke="#5d6b78" stroke-width="1.0"/><circle cx="456.3" cy="393.3" r="32.6" stroke="#3a4550" stroke-width="0.8"/></g><g stroke="#a9a9a9" stroke-width="3.5" opacity="0.95"><path d="M456 377.2V409M440.7 392.6H471"/></g><circle cx="456" cy="393" r="4.5" fill="none" stroke="#c9961c" stroke-width="1" stroke-dasharray="2 1.5"/><rect x="454.5" y="391.5" width="3" height="3" fill="#222"/><text x="464" y="411.4" font-family="Liberation Sans" font-size="13.5" fill="#f5c325">Rács</text></svg>
<svg width="1046" height="23" viewBox="95 132 1046 23" style="left:95px;top:132px;overflow:hidden"><path d="M86.5 152V155M96.5 148V155M106.5 152V155M116.5 148V155M126.5 152V155M136.5 148V155M146.5 152V155M156.5 148V155M166.5 152V155M176.5 148V155M186.5 152V155M196.5 148V155M206.5 152V155M216.5 148V155M226.5 152V155M236.5 148V155M246.5 152V155M256.5 148V155M266.5 152V155M276.5 148V155M286.5 152V155M296.5 148V155M306.5 152V155M316.5 148V155M326.5 152V155M336.5 148V155M346.5 152V155M356.5 148V155M366.5 152V155M376.5 148V155M386.5 152V155M396.5 148V155M406.5 152V155M416.5 148V155M426.5 152V155M436.5 148V155M446.5 152V155M456.5 148V155M466.5 152V155M476.5 148V155M486.5 152V155M496.5 148V155M506.5 152V155M516.5 148V155M526.5 152V155M536.5 148V155M546.5 152V155M556.5 148V155M566.5 152V155M576.5 148V155M586.5 152V155M596.5 148V155M606.5 152V155M616.5 148V155M627.5 152V155M637.5 148V155M647.5 152V155M657.5 148V155M667.5 152V155M677.5 148V155M687.5 152V155M697.5 148V155M707.5 152V155M717.5 148V155M727.5 152V155M737.5 148V155M747.5 152V155M757.5 148V155M767.5 152V155M777.5 148V155M787.5 152V155M797.5 148V155M807.5 152V155M817.5 148V155M827.5 152V155M837.5 148V155M847.5 152V155M857.5 148V155M867.5 152V155M877.5 148V155M887.5 152V155M897.5 148V155M907.5 152V155M917.5 148V155M927.5 152V155M937.5 148V155M947.5 152V155M957.5 148V155M967.5 152V155M977.5 148V155M987.5 152V155M997.5 148V155M1007.5 152V155M1017.5 148V155M1027.5 152V155M1037.5 148V155M1047.5 152V155M1057.5 148V155M1067.5 152V155M1077.5 148V155M1087.5 152V155M1097.5 148V155M1107.5 152V155M1117.5 148V155M1127.5 152V155M1137.5 148V155M1147.5 152V155" stroke="#5e5e5e" stroke-width="1"/><g font-family="Liberation Sans" font-size="9.6" fill="#000" stroke="#000" stroke-width="0.15" text-anchor="middle"><text x="96.5" y="140.6">-2</text><text x="116.5" y="140.6">0</text><text x="136.5" y="140.6">2</text><text x="156.5" y="140.6">4</text><text x="176.5" y="140.6">6</text><text x="196.5" y="140.6">8</text><text x="216.5" y="140.6">10</text><text x="236.5" y="140.6">12</text><text x="256.5" y="140.6">14</text><text x="276.5" y="140.6">16</text><text x="296.5" y="140.6">18</text><text x="316.5" y="140.6">20</text><text x="336.5" y="140.6">22</text><text x="356.5" y="140.6">24</text><text x="376.5" y="140.6">26</text><text x="396.5" y="140.6">28</text><text x="416.5" y="140.6">30</text><text x="436.5" y="140.6">32</text><text x="456.5" y="140.6">34</text><text x="476.5" y="140.6">36</text><text x="496.5" y="140.6">38</text><text x="516.5" y="140.6">40</text><text x="536.5" y="140.6">42</text><text x="556.5" y="140.6">44</text><text x="576.5" y="140.6">46</text><text x="596.5" y="140.6">48</text><text x="616.5" y="140.6">50</text><text x="637.5" y="140.6">52</text><text x="657.5" y="140.6">54</text><text x="677.5" y="140.6">56</text><text x="697.5" y="140.6">58</text><text x="717.5" y="140.6">60</text><text x="737.5" y="140.6">62</text><text x="757.5" y="140.6">64</text><text x="777.5" y="140.6">66</text><text x="797.5" y="140.6">68</text><text x="817.5" y="140.6">70</text><text x="837.5" y="140.6">72</text><text x="857.5" y="140.6">74</text><text x="877.5" y="140.6">76</text><text x="897.5" y="140.6">78</text><text x="917.5" y="140.6">80</text><text x="937.5" y="140.6">82</text><text x="957.5" y="140.6">84</text><text x="977.5" y="140.6">86</text><text x="997.5" y="140.6">88</text><text x="1017.5" y="140.6">90</text><text x="1037.5" y="140.6">92</text><text x="1057.5" y="140.6">94</text><text x="1077.5" y="140.6">96</text><text x="1097.5" y="140.6">98</text><text x="1117.5" y="140.6">100</text><text x="1137.5" y="140.6">102</text></g><path d="M450.5 145H462.5L456.5 151Z" fill="#000"/></svg><svg width="23" height="577" viewBox="72 155 23 577" style="left:72px;top:155px;overflow:hidden"><path d="M88 754.5H95M92 744.5H95M88 733.5H95M92 723.5H95M88 713.5H95M92 703.5H95M88 693.5H95M92 683.5H95M88 673.5H95M92 663.5H95M88 653.5H95M92 643.5H95M88 633.5H95M92 623.5H95M88 613.5H95M92 603.5H95M88 593.5H95M92 583.5H95M88 573.5H95M92 563.5H95M88 553.5H95M92 543.5H95M88 533.5H95M92 523.5H95M88 513.5H95M92 503.5H95M88 493.5H95M92 483.5H95M88 473.5H95M92 463.5H95M88 453.5H95M92 443.5H95M88 433.5H95M92 423.5H95M88 413.5H95M92 403.5H95M88 393.5H95M92 383.5H95M88 373.5H95M92 363.5H95M88 353.5H95M92 343.5H95M88 333.5H95M92 323.5H95M88 313.5H95M92 303.5H95M88 293.5H95M92 283.5H95M88 273.5H95M92 263.5H95M88 253.5H95M92 243.5H95M88 233.5H95M92 223.5H95M88 213.5H95M92 203.5H95M88 193.5H95M92 183.5H95M88 173.5H95M92 163.5H95M88 153.5H95M92 142.5H95M88 132.5H95M92 122.5H95" stroke="#5e5e5e" stroke-width="1"/><g font-family="Liberation Sans" font-size="9.6" fill="#000" stroke="#000" stroke-width="0.15" text-anchor="middle"><text transform="translate(80.9 754.5) rotate(-90)">-22</text><text transform="translate(80.9 733.5) rotate(-90)">-20</text><text transform="translate(80.9 713.5) rotate(-90)">-18</text><text transform="translate(80.9 693.5) rotate(-90)">-16</text><text transform="translate(80.9 673.5) rotate(-90)">-14</text><text transform="translate(80.9 653.5) rotate(-90)">-12</text><text transform="translate(80.9 633.5) rotate(-90)">-10</text><text transform="translate(80.9 613.5) rotate(-90)">-8</text><text transform="translate(80.9 593.5) rotate(-90)">-6</text><text transform="translate(80.9 573.5) rotate(-90)">-4</text><text transform="translate(80.9 553.5) rotate(-90)">-2</text><text transform="translate(80.9 533.5) rotate(-90)">0</text><text transform="translate(80.9 513.5) rotate(-90)">2</text><text transform="translate(80.9 493.5) rotate(-90)">4</text><text transform="translate(80.9 473.5) rotate(-90)">6</text><text transform="translate(80.9 453.5) rotate(-90)">8</text><text transform="translate(80.9 433.5) rotate(-90)">10</text><text transform="translate(80.9 413.5) rotate(-90)">12</text><text transform="translate(80.9 393.5) rotate(-90)">14</text><text transform="translate(80.9 373.5) rotate(-90)">16</text><text transform="translate(80.9 353.5) rotate(-90)">18</text><text transform="translate(80.9 333.5) rotate(-90)">20</text><text transform="translate(80.9 313.5) rotate(-90)">22</text><text transform="translate(80.9 293.5) rotate(-90)">24</text><text transform="translate(80.9 273.5) rotate(-90)">26</text><text transform="translate(80.9 253.5) rotate(-90)">28</text><text transform="translate(80.9 233.5) rotate(-90)">30</text><text transform="translate(80.9 213.5) rotate(-90)">32</text><text transform="translate(80.9 193.5) rotate(-90)">34</text><text transform="translate(80.9 173.5) rotate(-90)">36</text><text transform="translate(80.9 153.5) rotate(-90)">38</text><text transform="translate(80.9 132.5) rotate(-90)">40</text></g><path d="M85 388.0V399.0L91 393.5Z" fill="#000"/></svg>
<div class="a" style="left:1139px;top:155px;width:15px;height:577px;background:#fafafa"></div>
<div class="a" style="left:1143px;top:282px;width:8px;height:322px;background:#808080;border-radius:4px"></div>
<div class="a" style="left:95px;top:732px;width:1004px;height:16px;background:#fafafa"></div>
<div class="a" style="left:280px;top:736px;width:634px;height:8px;background:#808080;border-radius:4px"></div>
<div class="a" style="left:1099px;top:732px;width:55px;height:16px;background:#e8e8e8"></div>
<div class="t" style="left:1118px;top:734px;font-size:13px;color:#111">1 &lt; 10</div>
<div class="a" style="left:72px;top:748px;width:1082px;height:1px;background:#c4c4c4"></div>
<div class="a" style="left:72px;top:749px;width:1082px;height:22px;background:#fff"></div>
<div class="a" style="left:1139px;top:749px;width:15px;height:22px;background:#fafafa;border-left:1px solid #e4e4e4"></div>
<div class="a" style="left:1142px;top:750px;width:8px;height:17px;background:#808080;border-radius:4px"></div>
<div class="t" style="left:77px;top:751px;font-size:13.2px;color:#0000cf;font-style:italic">Parancs: <span style="font-style:normal">paste</span></div>
<div class="a" style="left:72px;top:770px;width:1082px;height:1px;background:#c8c8c8"></div>
<div class="a" style="left:72px;top:771px;width:1082px;height:27px;background:#ececec"></div>
<div class="t" style="left:72.2px;top:777.5px;font-size:13.7px;color:#111">Pozíció:</div>
<div class="a" style="left:120px;top:776px;width:1007px;height:18px;background:#fff"></div>
<div class="a" style="left:1127px;top:772px;width:26px;height:25px;background:linear-gradient(#f4f4f4,#e4e4e4);border:1px solid #c4c4c4"></div>
<svg width="20" height="14" viewBox="1132 778 20 14" style="left:1132px;top:778px"><rect x="1133.5" y="780.5" width="13.5" height="9.5" fill="#fff" stroke="#333" stroke-width="1"/><rect x="1133.5" y="780.5" width="13.5" height="2.2" fill="#111"/></svg>
<div class="a" style="left:1154px;top:108px;width:2px;height:690px;background:#c2c2c2"></div>
<div class="a" style="left:1156px;top:108px;width:299px;height:22px;background:linear-gradient(#ececec,#d9d9d9)"></div>
<div class="t" style="left:1295.2px;top:112.5px;font-size:12px;color:#2a2a2a">Réteglista</div>
<div class="a" style="left:1156px;top:130px;width:299px;height:26px;background:#a8a8a8"></div>
<div class="a" style="left:1156px;top:131px;width:59px;height:24px;background:linear-gradient(#f6f6f6,#e6e6e6)"></div>
<div class="a" style="left:1216px;top:131px;width:59px;height:24px;background:linear-gradient(#f6f6f6,#e6e6e6)"></div>
<div class="a" style="left:1276px;top:131px;width:59px;height:24px;background:linear-gradient(#f6f6f6,#e6e6e6)"></div>
<div class="a" style="left:1336px;top:131px;width:59px;height:24px;background:linear-gradient(#f6f6f6,#e6e6e6)"></div>
<div class="a" style="left:1396px;top:131px;width:59px;height:24px;background:linear-gradient(#f6f6f6,#e6e6e6)"></div>
<div class="a" style="left:1156px;top:156px;width:298px;height:642px;background:#fff"></div>
<div class="a" style="left:1161px;top:163px;width:16px;height:9px;background:#fff;border:1px solid #000"></div>
<div class="t" style="left:1182.3px;top:161.2px;font-size:13.8px;color:#111">0</div>
<div class="a" style="left:1161px;top:183px;width:16px;height:9px;background:#f00;border:1px solid #000"></div>
<div class="t" style="left:1182.3px;top:181.2px;font-size:13.8px;color:#111">Központ</div>
<div class="a" style="left:1161px;top:203px;width:16px;height:9px;background:#fff;border:1px solid #000"></div>
<div class="t" style="left:1182.3px;top:201.2px;font-size:13.8px;color:#111">Látható</div>
<div class="a" style="left:1161px;top:223px;width:16px;height:9px;background:#000;border:1px solid #000"></div>
<div class="t" style="left:1182.3px;top:221.2px;font-size:13.8px;color:#111">Rejtett</div>
<svg width="300" height="690" viewBox="1155 108 300 690" style="left:1155px;top:108px;overflow:hidden"><circle cx="1163.9" cy="117.9" r="7" fill="#6c6c6c"/><path d="M1161 115L1166.8 120.8M1166.8 115L1161 120.8" stroke="#fff" stroke-width="1.8"/><circle cx="1182" cy="117.9" r="7" fill="#6c6c6c"/><rect x="1180.3" y="114.6" width="4.8" height="3.8" fill="none" stroke="#fff" stroke-width="1"/><rect x="1178.4" y="117" width="4.8" height="3.8" fill="#6c6c6c" stroke="#fff" stroke-width="1"/><g transform="translate(1185 142.5) scale(1.0)"><path d="M-7.5 0.3C-6 -4.6 -3 -5.6 0 -5.6C3.6 -5.6 6.2 -3.6 7.5 0.5C6.2 4.1 3.2 5.6 0 5.6C-3.6 5.6 -6.2 4 -7.5 0.3Z" fill="#000"/><path d="M-4.9 0.2C-4.2 2.9 -2.2 3.8 0 3.8C2.4 3.8 4.3 2.8 4.9 0.1C3.8 -1.6 2 -2.2 0 -2.2C-2 -2.2 -4 -1.4 -4.9 0.2Z" fill="#fff"/><circle cx="0.1" cy="-0.3" r="2.5" fill="#000"/><circle cx="-0.5" cy="-1" r="0.6" fill="#999"/></g><g transform="translate(1245 142.5) scale(1.0)"><path d="M-7.5 0.3C-6 -4.6 -3 -5.6 0 -5.6C3.6 -5.6 6.2 -3.6 7.5 0.5C6.2 4.1 3.2 5.6 0 5.6C-3.6 5.6 -6.2 4 -7.5 0.3Z" fill="#9c9c9c"/><path d="M-4.9 0.2C-4.2 2.9 -2.2 3.8 0 3.8C2.4 3.8 4.3 2.8 4.9 0.1C3.8 -1.6 2 -2.2 0 -2.2C-2 -2.2 -4 -1.4 -4.9 0.2Z" fill="#fff"/><circle cx="0.1" cy="-0.3" r="2.5" fill="#9c9c9c"/><circle cx="-0.5" cy="-1" r="0.6" fill="#999"/></g><path d="M1303.1 137H1306.9V141H1311V144.8H1306.9V148.8H1303.1V144.8H1299V141H1303.1Z" fill="#ff0000" stroke="#8a0000" stroke-width="0.5"/><rect x="1359.2" y="140.6" width="11.8" height="4.2" fill="#ff0000" stroke="#8a0000" stroke-width="0.5"/><path d="M1420.32 147.79L1430.71 137.92" stroke="#7a5410" stroke-width="3.4" stroke-linecap="butt"/><path d="M1420.32 147.79L1430.71 137.92" stroke="#e8b040" stroke-width="2.4"/><path d="M1430.71 137.92L1432.30 136.40" stroke="#e02020" stroke-width="3.0" stroke-linecap="round"/><path d="M1418 150L1421.35 148.88L1419.29 146.71Z" fill="#e6c890" stroke="#6b4a10" stroke-width="0.5"/><g transform="translate(1423 166.5) scale(1.0)"><path d="M-7.5 0.3C-6 -4.6 -3 -5.6 0 -5.6C3.6 -5.6 6.2 -3.6 7.5 0.5C6.2 4.1 3.2 5.6 0 5.6C-3.6 5.6 -6.2 4 -7.5 0.3Z" fill="#000"/><path d="M-4.9 0.2C-4.2 2.9 -2.2 3.8 0 3.8C2.4 3.8 4.3 2.8 4.9 0.1C3.8 -1.6 2 -2.2 0 -2.2C-2 -2.2 -4 -1.4 -4.9 0.2Z" fill="#fff"/><circle cx="0.1" cy="-0.3" r="2.5" fill="#000"/><circle cx="-0.5" cy="-1" r="0.6" fill="#999"/></g><path d="M1441.5 166.4V163.70000000000002A3.6 3.6 0 0 1 1448.7 163.70000000000002V166.4" fill="none" stroke="#b6b6b6" stroke-width="1.3"/><rect x="1440.2" y="166.20000000000002" width="9.8" height="7.6" rx="0.8" fill="#b4b4b4"/><g transform="translate(1423 186.5) scale(1.0)"><path d="M-7.5 0.3C-6 -4.6 -3 -5.6 0 -5.6C3.6 -5.6 6.2 -3.6 7.5 0.5C6.2 4.1 3.2 5.6 0 5.6C-3.6 5.6 -6.2 4 -7.5 0.3Z" fill="#000"/><path d="M-4.9 0.2C-4.2 2.9 -2.2 3.8 0 3.8C2.4 3.8 4.3 2.8 4.9 0.1C3.8 -1.6 2 -2.2 0 -2.2C-2 -2.2 -4 -1.4 -4.9 0.2Z" fill="#fff"/><circle cx="0.1" cy="-0.3" r="2.5" fill="#000"/><circle cx="-0.5" cy="-1" r="0.6" fill="#999"/></g><path d="M1441.5 186.4V183.70000000000002A3.6 3.6 0 0 1 1448.7 183.70000000000002V186.4" fill="none" stroke="#b6b6b6" stroke-width="1.3"/><rect x="1440.2" y="186.20000000000002" width="9.8" height="7.6" rx="0.8" fill="#b4b4b4"/><g transform="translate(1423 206.5) scale(1.0)"><path d="M-7.5 0.3C-6 -4.6 -3 -5.6 0 -5.6C3.6 -5.6 6.2 -3.6 7.5 0.5C6.2 4.1 3.2 5.6 0 5.6C-3.6 5.6 -6.2 4 -7.5 0.3Z" fill="#000"/><path d="M-4.9 0.2C-4.2 2.9 -2.2 3.8 0 3.8C2.4 3.8 4.3 2.8 4.9 0.1C3.8 -1.6 2 -2.2 0 -2.2C-2 -2.2 -4 -1.4 -4.9 0.2Z" fill="#fff"/><circle cx="0.1" cy="-0.3" r="2.5" fill="#000"/><circle cx="-0.5" cy="-1" r="0.6" fill="#999"/></g><path d="M1441.5 206.4V203.70000000000002A3.6 3.6 0 0 1 1448.7 203.70000000000002V206.4" fill="none" stroke="#b6b6b6" stroke-width="1.3"/><rect x="1440.2" y="206.20000000000002" width="9.8" height="7.6" rx="0.8" fill="#b4b4b4"/><g transform="translate(1423 226.5) scale(1.0)"><path d="M-7.5 0.3C-6 -4.6 -3 -5.6 0 -5.6C3.6 -5.6 6.2 -3.6 7.5 0.5C6.2 4.1 3.2 5.6 0 5.6C-3.6 5.6 -6.2 4 -7.5 0.3Z" fill="#000"/><path d="M-4.9 0.2C-4.2 2.9 -2.2 3.8 0 3.8C2.4 3.8 4.3 2.8 4.9 0.1C3.8 -1.6 2 -2.2 0 -2.2C-2 -2.2 -4 -1.4 -4.9 0.2Z" fill="#fff"/><circle cx="0.1" cy="-0.3" r="2.5" fill="#000"/><circle cx="-0.5" cy="-1" r="0.6" fill="#999"/></g><path d="M1441.5 226.4V223.70000000000002A3.6 3.6 0 0 1 1448.7 223.70000000000002V226.4" fill="none" stroke="#b6b6b6" stroke-width="1.3"/><rect x="1440.2" y="226.20000000000002" width="9.8" height="7.6" rx="0.8" fill="#b4b4b4"/><path d="M1396.51 211.08L1406.02 201.93" stroke="#7a5410" stroke-width="3.3" stroke-linecap="butt"/><path d="M1396.51 211.08L1406.02 201.93" stroke="#e8b040" stroke-width="2.3"/><path d="M1406.02 201.93L1407.60 200.40" stroke="#e02020" stroke-width="2.9" stroke-linecap="round"/><path d="M1394.2 213.3L1397.51 212.13L1395.50 210.04Z" fill="#e6c890" stroke="#6b4a10" stroke-width="0.5"/></svg>
<div class="a" style="left:1455px;top:108px;width:45px;height:690px;background:linear-gradient(90deg,#cfcfcf 0px,#cfcfcf 1px,#eeeeee 1px,#e4e4e4 12px,#c4c4c4 45px)"></div>
<svg width="45" height="690" viewBox="1455 108 45 690" style="left:1455px;top:108px;overflow:hidden"><rect x="1462.5" y="116.5" width="1.5" height="1.5" fill="#a8a8a8"/><rect x="1468.5" y="116.5" width="1.5" height="1.5" fill="#a8a8a8"/><rect x="1474.5" y="116.5" width="1.5" height="1.5" fill="#a8a8a8"/><rect x="1480.5" y="116.5" width="1.5" height="1.5" fill="#a8a8a8"/><rect x="1486.5" y="116.5" width="1.5" height="1.5" fill="#a8a8a8"/><rect x="1456.3" y="120.3" width="50" height="42.2" rx="6" fill="#b3b3b3"/><rect x="1456.3" y="417" width="50" height="43" rx="6" fill="#b3b3b3"/><path d="M1458 261.5H1499M1458 409.5H1499" stroke="#777" stroke-width="1" stroke-dasharray="1 2.5"/><rect x="1463.5" y="127.5" width="27" height="27" fill="#fff" stroke="#222" stroke-width="1"/><rect x="1463.5" y="127.5" width="27" height="4.5" fill="#000"/><rect x="1464.5" y="128.3" width="3" height="3" fill="#fff"/><path d="M1470.5 139.5L1478 136V148.5L1470.5 152Z" fill="#9a9a9a" stroke="#444" stroke-width="0.6"/><path d="M1473 138.5L1485 134V146.5L1473 151Z" fill="#fff" stroke="#555" stroke-width="0.7"/><path d="M1476 147.5L1482 139L1482.5 146Z" fill="none" stroke="#e83030" stroke-width="0.8"/><rect x="1463.5" y="174.8" width="27" height="27" fill="#fff" stroke="#222" stroke-width="1"/><rect x="1463.5" y="174.8" width="27" height="4.5" fill="#000"/><rect x="1464.5" y="175.60000000000002" width="3" height="3" fill="#fff"/><rect x="1468.5" y="183.5" width="11" height="8" fill="#f2e6b0" stroke="#6a6040" stroke-width="0.8"/><circle cx="1478.5" cy="191.5" r="4.8" fill="#f2e6b0" fill-opacity="0.85" stroke="#6a6040" stroke-width="0.8"/><rect x="1463.5" y="220.8" width="27" height="27" fill="#fff" stroke="#222" stroke-width="1"/><rect x="1463.5" y="220.8" width="27" height="4.5" fill="#000"/><rect x="1464.5" y="221.60000000000002" width="3" height="3" fill="#fff"/><rect x="1468" y="229.5" width="18" height="12" rx="2.5" fill="#f4f4f4" stroke="#a8c0e0" stroke-width="0.9"/><rect x="1463.5" y="276.8" width="27" height="27" fill="#fff" stroke="#222" stroke-width="1"/><rect x="1463.5" y="276.8" width="27" height="4.5" fill="#000"/><rect x="1464.5" y="277.6" width="3" height="3" fill="#fff"/><rect x="1467.5" y="283.5" width="3" height="2.8" fill="#000"/><rect x="1473" y="283.3" width="13.5" height="3.2" fill="none" stroke="#333" stroke-width="0.7"/><rect x="1467.5" y="288.7" width="3" height="2.8" fill="#000"/><rect x="1473" y="288.5" width="13.5" height="3.2" fill="none" stroke="#333" stroke-width="0.7"/><rect x="1467.5" y="293.9" width="3" height="2.8" fill="#000"/><rect x="1473" y="293.7" width="13.5" height="3.2" fill="none" stroke="#333" stroke-width="0.7"/><rect x="1463.5" y="322.5" width="27" height="27" fill="#fff" stroke="#222" stroke-width="1"/><rect x="1463.5" y="322.5" width="27" height="4.5" fill="#000"/><rect x="1464.5" y="323.3" width="3" height="3" fill="#fff"/><path d="M1470 331.5H1484L1478.5 338V344.5L1476 343V338Z" fill="#9a9a9a" stroke="#333" stroke-width="0.7"/><ellipse cx="1477" cy="331.8" rx="7" ry="1.4" fill="#666"/><rect x="1463.5" y="368.5" width="27" height="27" fill="#fff" stroke="#222" stroke-width="1"/><rect x="1463.5" y="368.5" width="27" height="4.5" fill="#000"/><rect x="1464.5" y="369.3" width="3" height="3" fill="#fff"/><path d="M1469.5 376.5L1475 381.5V387.5L1469.5 392Z" fill="#fff" stroke="#333" stroke-width="0.7"/><rect x="1475" y="380.5" width="9" height="8" fill="#8a8a8a" stroke="#444" stroke-width="0.6"/><path d="M1467 385H1488" stroke="#f07070" stroke-width="0.7" stroke-dasharray="1.5 1"/><rect x="1463.5" y="424.6" width="27" height="27" fill="#fff" stroke="#222" stroke-width="1"/><rect x="1463.5" y="424.6" width="27" height="4.5" fill="#000"/><rect x="1464.5" y="425.40000000000003" width="3" height="3" fill="#fff"/><g stroke="#777" stroke-width="0.6"><path d="M1465 432.5H1473M1465 435.8H1471.5M1465 439H1473M1465 442.2H1474"/></g><path d="M1463.5 446.5H1490.5" stroke="#222" stroke-width="0.8"/><path d="M1466 449H1468M1474 449.2H1489" stroke="#555" stroke-width="0.8"/><rect x="1463.5" y="471.5" width="27" height="27" fill="#fff" stroke="#222" stroke-width="1"/><rect x="1463.5" y="471.5" width="27" height="4.5" fill="#000"/><rect x="1464.5" y="472.3" width="3" height="3" fill="#fff"/><rect x="1469.5" y="480.5" width="14" height="14.5" rx="1" fill="#c88a2e"/><path d="M1471 482H1482V492L1479.5 494H1471Z" fill="#f4f4f4"/><rect x="1473.5" y="479.3" width="6" height="3" rx="0.8" fill="#9c9e94"/></svg>
<div class="a" style="left:0;top:798px;width:1500px;height:46px;background:#dcdcdc;border-top:1px solid #d0d0d0"></div>
<div class="t" style="left:2.5px;top:808px;font-size:10.4px;color:#222">34,14</div>
<div class="t" style="left:3px;top:828px;font-size:10.4px;color:#222">-</div>
<div class="a" style="left:253px;top:802px;width:2px;height:42px;background:linear-gradient(90deg,#8a8a8a 1px,#f6f6f6 1px)"></div>
<div class="t" style="left:255.3px;top:808px;font-size:10.4px;color:#222;letter-spacing:0.15px">36.7696&lt;22°</div>
<div class="t" style="left:257px;top:828px;font-size:10.4px;color:#222">-</div>
<div class="t" style="left:665.2px;top:817.5px;font-size:10.4px;color:#222;letter-spacing:0.3px">Pozíció</div>
<div class="t" style="left:753.5px;top:817.5px;font-size:10.4px;color:#222">Törölje</div>
<div class="t" style="left:948px;top:817.5px;font-size:10.4px;color:#222;letter-spacing:0.08px">Nincs kiválasztott szervezet.</div>
<svg width="24" height="34" viewBox="714 804 24 34" style="left:714px;top:804px"><path d="M717.7 814.5A8.5 8.5 0 0 1 734.5 814.5V827A8.5 8.5 0 0 1 717.7 827Z" fill="#fff" stroke="#444" stroke-width="0.9"/><path d="M717.7 820Q726 817.5 734.5 820" fill="none" stroke="#333" stroke-width="1.4"/><rect x="724.5" y="808.3" width="3.3" height="7" rx="1.5" fill="none" stroke="#333" stroke-width="0.9"/><path d="M726.1 806V808.3M726.1 815.3V819" stroke="#333" stroke-width="0.9"/></svg>
<div class="a" style="left:506px;top:819px;width:6px;height:6px;border-radius:3px;background:#c4c4c4"></div>
<div class="a" style="left:940px;top:819px;width:6px;height:6px;border-radius:3px;background:#c4c4c4"></div>
<div class="a" style="left:1269px;top:819px;width:6px;height:6px;border-radius:3px;background:#c4c4c4"></div>
</div></body></html>
